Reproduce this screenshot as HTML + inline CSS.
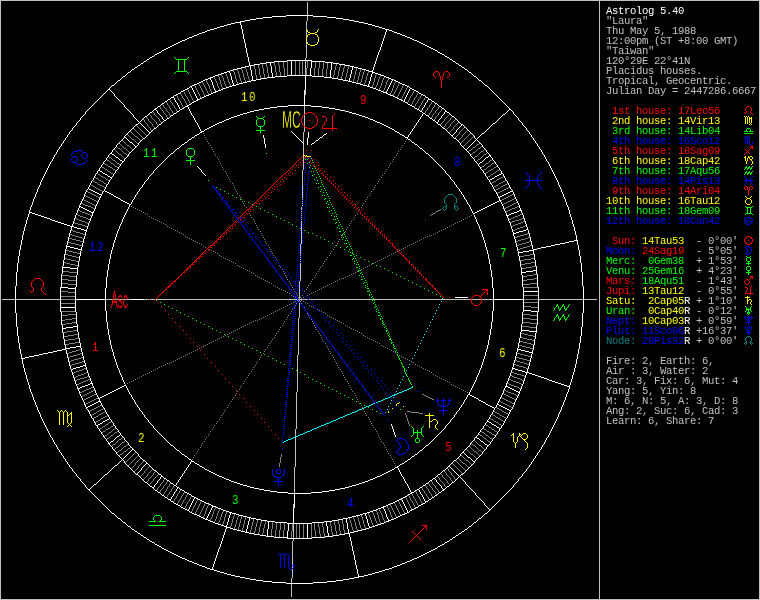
<!DOCTYPE html>
<html><head><meta charset="utf-8"><title>Astrolog 5.40</title>
<style>
html,body{margin:0;padding:0;background:#000;overflow:hidden}
#c{position:relative;width:760px;height:600px;background:#000;overflow:hidden}
#sb{position:absolute;left:606px;top:6.0px;margin:0;font:10.6px/10px "Liberation Mono",monospace;white-space:pre;color:#c0c0c0;letter-spacing:-0.36px;will-change:transform;-webkit-text-stroke:0px}
.hn{will-change:transform;position:absolute;height:20px;white-space:pre;transform-origin:0 0;transform:scaleX(0.8);font:13.5px/20px "Liberation Mono",monospace;letter-spacing:1.9px}
.ob{position:absolute;font-family:"Liberation Sans",sans-serif;white-space:pre;transform-origin:0 0;line-height:1}
</style></head><body><div id="c">
<svg width="760" height="600" viewBox="0 0 760 600" shape-rendering="crispEdges" style="position:absolute;left:0;top:0"><path fill="#008080" d="M448 194h5v1h-5zM444 206h3v1h-3zM454 206h3v1h-3zM747 336h3v1h-3zM745 342h2v1h-2zM750 342h2v1h-2zM425 219v1h1v-1zM442 208v1h1v-1zM443 207v1h1v-1zM443 209v1h1v-1zM444 198v5h1v-5zM444 210v1h1v-1zM445 197v1h1v-1zM445 203v1h1v-1zM445 209v1h1v-1zM446 196v1h1v-1zM446 204v2h1v-2zM446 207v2h1v-2zM447 195v1h1v-1zM453 195v1h1v-1zM454 196v1h1v-1zM454 204v2h1v-2zM454 207v2h1v-2zM455 197v1h1v-1zM455 203v1h1v-1zM455 209v1h1v-1zM456 198v5h1v-5zM456 210v1h1v-1zM457 207v1h1v-1zM457 209v1h1v-1zM458 208v1h1v-1zM744 343v1h1v-1zM745 338v3h1v-3zM745 344v1h1v-1zM746 337v1h1v-1zM746 341v1h1v-1zM746 343v1h1v-1zM750 337v1h1v-1zM750 341v1h1v-1zM750 343v1h1v-1zM751 338v3h1v-3zM751 344v1h1v-1zM752 343v1h1v-1z"/><path fill="#c0c0c0" d="M0 0h760v1h-760zM2 299h13v1h-13zM16 299h44v1h-44zM106 299h25v1h-25zM144 299h5v1h-5zM150 299h5v1h-5zM156 299h141v1h-141zM300 299h8v1h-8zM309 299h62v1h-62zM372 299h99v1h-99zM472 299h9v1h-9zM482 299h11v1h-11zM539 299h44v1h-44zM584 299h13v1h-13zM0 599h760v1h-760zM0 1v598h1v-598zM291 578v5h1v-5zM291 584v13h1v-13zM292 541v24h1v-24zM292 566v2h1v-2zM292 569v9h1v-9zM293 504v4h1v-4zM293 524v14h1v-14zM293 539v2h1v-2zM294 467v26h1v-26zM295 429v7h1v-7zM295 437v30h1v-30zM296 392v37h1v-37zM297 355v37h1v-37zM298 299v1h1v-1zM298 318v37h1v-37zM299 281v18h1v-18zM299 300v1h1v-1zM299 303v15h1v-15zM300 244v10h1v-10zM300 255v1h1v-1zM300 257v1h1v-1zM300 259v1h1v-1zM300 261v1h1v-1zM300 263v18h1v-18zM301 207v3h1v-3zM301 211v1h1v-1zM301 213v1h1v-1zM301 215v1h1v-1zM301 217v1h1v-1zM301 219v1h1v-1zM301 221v23h1v-23zM302 170v28h1v-28zM302 199v1h1v-1zM302 201v1h1v-1zM302 203v1h1v-1zM302 205v1h1v-1zM303 132v11h1v-11zM303 144v5h1v-5zM303 150v5h1v-5zM303 156v14h1v-14zM304 106v8h1v-8zM304 115v11h1v-11zM304 127v5h1v-5zM305 58v2h1v-2zM305 61v14h1v-14zM305 90v5h1v-5zM306 21v8h1v-8zM306 30v7h1v-7zM306 42v16h1v-16zM307 2v13h1v-13zM307 16v5h1v-5zM599 1v598h1v-598zM759 1v598h1v-598z"/><path fill="#808080" d="M135 136h2v1h-2zM132 139h2v1h-2zM477 144h2v1h-2zM127 145h2v1h-2zM473 147h2v1h-2zM118 148h2v1h-2zM124 148h2v1h-2zM478 148h2v1h-2zM469 150h2v1h-2zM481 151h2v1h-2zM473 152h2v1h-2zM124 153h2v1h-2zM119 154h2v1h-2zM484 154h2v1h-2zM475 156h2v1h-2zM109 157h2v1h-2zM478 159h2v1h-2zM107 160h2v1h-2zM113 160h2v1h-2zM490 160h2v1h-2zM111 163h2v1h-2zM117 163h2v1h-2zM486 163h2v1h-2zM492 163h2v1h-2zM105 164h2v1h-2zM108 166h2v1h-2zM115 166h2v1h-2zM482 166h2v1h-2zM488 166h2v1h-2zM102 167h2v1h-2zM110 167h2v1h-2zM494 167h2v1h-2zM105 169h2v1h-2zM113 169h2v1h-2zM484 169h2v1h-2zM491 169h2v1h-2zM489 170h2v1h-2zM497 170h2v1h-2zM108 171h2v1h-2zM486 172h2v1h-2zM494 172h2v1h-2zM111 173h2v1h-2zM98 174h2v1h-2zM491 174h2v1h-2zM101 176h2v1h-2zM488 176h2v1h-2zM103 177h2v1h-2zM501 177h2v1h-2zM96 178h2v1h-2zM499 178h2v1h-2zM106 179h2v1h-2zM497 179h2v1h-2zM99 180h2v1h-2zM93 181h2v1h-2zM101 181h2v1h-2zM494 181h2v1h-2zM503 181h2v1h-2zM95 182h2v1h-2zM492 182h2v1h-2zM501 182h2v1h-2zM104 183h2v1h-2zM499 183h2v1h-2zM98 184h2v1h-2zM505 184h2v1h-2zM91 185h2v1h-2zM100 185h2v1h-2zM496 185h2v1h-2zM503 185h2v1h-2zM93 186h2v1h-2zM102 186h2v1h-2zM494 186h2v1h-2zM501 186h2v1h-2zM508 187h2v1h-2zM96 188h2v1h-2zM498 188h2v1h-2zM506 188h2v1h-2zM98 189h2v1h-2zM496 189h2v1h-2zM504 189h2v1h-2zM100 190h2v1h-2zM502 190h2v1h-2zM500 191h2v1h-2zM88 192h2v1h-2zM498 192h2v1h-2zM90 193h2v1h-2zM92 194h2v1h-2zM512 194h2v1h-2zM94 195h2v1h-2zM510 195h2v1h-2zM86 196h2v1h-2zM96 196h2v1h-2zM508 196h2v1h-2zM88 197h2v1h-2zM98 197h2v1h-2zM506 197h2v1h-2zM90 198h2v1h-2zM504 198h2v1h-2zM92 199h2v1h-2zM502 199h2v1h-2zM512 199h2v1h-2zM84 200h2v1h-2zM94 200h2v1h-2zM510 200h2v1h-2zM86 201h2v1h-2zM96 201h2v1h-2zM508 201h2v1h-2zM88 202h2v1h-2zM506 202h2v1h-2zM81 203h2v1h-2zM90 203h2v1h-2zM504 203h2v1h-2zM514 203h2v1h-2zM83 204h2v1h-2zM92 204h2v1h-2zM512 204h2v1h-2zM85 205h3v1h-3zM94 205h2v1h-2zM510 205h2v1h-2zM88 206h3v1h-3zM508 206h2v1h-2zM517 206h2v1h-2zM91 207h2v1h-2zM506 207h2v1h-2zM515 207h2v1h-2zM93 208h2v1h-2zM504 208h2v1h-2zM512 208h3v1h-3zM510 209h2v1h-2zM78 210h2v1h-2zM438 210h2v1h-2zM508 210h2v1h-2zM80 211h2v1h-2zM436 211h2v1h-2zM506 211h2v1h-2zM82 212h3v1h-3zM85 213h3v1h-3zM433 213h2v1h-2zM88 214h2v1h-2zM431 214h2v1h-2zM520 214h2v1h-2zM78 215h2v1h-2zM90 215h2v1h-2zM518 215h2v1h-2zM80 216h3v1h-3zM515 216h3v1h-3zM83 217h3v1h-3zM513 217h2v1h-2zM75 218h2v1h-2zM86 218h2v1h-2zM511 218h2v1h-2zM522 218h2v1h-2zM77 219h2v1h-2zM88 219h2v1h-2zM509 219h2v1h-2zM519 219h3v1h-3zM79 220h3v1h-3zM515 220h4v1h-4zM82 221h3v1h-3zM512 221h3v1h-3zM523 221h2v1h-2zM85 222h2v1h-2zM510 222h2v1h-2zM521 222h2v1h-2zM75 223h3v1h-3zM518 223h3v1h-3zM78 224h4v1h-4zM515 224h3v1h-3zM82 225h3v1h-3zM513 225h2v1h-2zM85 226h2v1h-2zM523 226h2v1h-2zM520 227h3v1h-3zM517 228h3v1h-3zM515 229h2v1h-2zM71 230h2v1h-2zM513 230h2v1h-2zM73 231h3v1h-3zM76 232h4v1h-4zM80 233h3v1h-3zM527 233h2v1h-2zM70 234h2v1h-2zM83 234h2v1h-2zM524 234h3v1h-3zM72 235h3v1h-3zM520 235h4v1h-4zM75 236h4v1h-4zM517 236h3v1h-3zM79 237h3v1h-3zM515 237h2v1h-2zM528 237h2v1h-2zM69 238h3v1h-3zM82 238h2v1h-2zM525 238h3v1h-3zM72 239h4v1h-4zM521 239h4v1h-4zM76 240h4v1h-4zM518 240h3v1h-3zM80 241h3v1h-3zM516 241h2v1h-2zM529 241h2v1h-2zM68 242h3v1h-3zM526 242h3v1h-3zM71 243h4v1h-4zM522 243h4v1h-4zM75 244h4v1h-4zM519 244h3v1h-3zM79 245h3v1h-3zM517 245h2v1h-2zM530 245h2v1h-2zM527 246h3v1h-3zM523 247h4v1h-4zM520 248h3v1h-3zM518 249h2v1h-2zM66 250h3v1h-3zM69 251h4v1h-4zM73 252h4v1h-4zM77 253h3v1h-3zM65 254h3v1h-3zM530 254h4v1h-4zM68 255h4v1h-4zM524 255h6v1h-6zM72 256h4v1h-4zM520 256h4v1h-4zM76 257h3v1h-3zM65 258h2v1h-2zM531 258h3v1h-3zM67 259h4v1h-4zM524 259h7v1h-7zM71 260h5v1h-5zM520 260h4v1h-4zM76 261h2v1h-2zM64 262h2v1h-2zM531 262h4v1h-4zM66 263h4v1h-4zM525 263h6v1h-6zM70 264h5v1h-5zM521 264h4v1h-4zM75 265h3v1h-3zM532 266h4v1h-4zM526 267h6v1h-6zM522 268h4v1h-4zM63 271h6v1h-6zM69 272h8v1h-8zM533 274h4v1h-4zM62 275h7v1h-7zM527 275h6v1h-6zM69 276h7v1h-7zM523 276h4v1h-4zM534 278h3v1h-3zM62 279h6v1h-6zM527 279h7v1h-7zM68 280h8v1h-8zM523 280h4v1h-4zM62 283h6v1h-6zM530 283h7v1h-7zM68 284h8v1h-8zM523 284h7v1h-7zM524 287h14v1h-14zM61 291h7v1h-7zM68 292h7v1h-7zM524 295h14v1h-14zM61 296h14v1h-14zM61 299h14v1h-14zM524 299h14v1h-14zM524 302h14v1h-14zM61 303h14v1h-14zM524 306h7v1h-7zM531 307h7v1h-7zM61 311h14v1h-14zM68 314h8v1h-8zM523 314h7v1h-7zM62 315h6v1h-6zM530 315h7v1h-7zM72 318h4v1h-4zM523 318h7v1h-7zM65 319h7v1h-7zM530 319h7v1h-7zM62 320h3v1h-3zM72 322h4v1h-4zM523 322h7v1h-7zM66 323h6v1h-6zM530 323h7v1h-7zM62 324h4v1h-4zM522 326h7v1h-7zM529 327h7v1h-7zM73 330h4v1h-4zM67 331h6v1h-6zM63 332h4v1h-4zM521 333h3v1h-3zM74 334h4v1h-4zM524 334h4v1h-4zM68 335h6v1h-6zM528 335h5v1h-5zM64 336h4v1h-4zM533 336h2v1h-2zM521 337h2v1h-2zM75 338h4v1h-4zM523 338h4v1h-4zM68 339h7v1h-7zM527 339h5v1h-5zM65 340h3v1h-3zM532 340h2v1h-2zM520 341h3v1h-3zM75 342h4v1h-4zM523 342h4v1h-4zM69 343h6v1h-6zM527 343h4v1h-4zM65 344h4v1h-4zM531 344h3v1h-3zM519 345h3v1h-3zM522 346h4v1h-4zM526 347h4v1h-4zM530 348h3v1h-3zM79 349h2v1h-2zM76 350h3v1h-3zM72 351h4v1h-4zM69 352h3v1h-3zM67 353h2v1h-2zM80 353h2v1h-2zM517 353h3v1h-3zM77 354h3v1h-3zM520 354h4v1h-4zM73 355h4v1h-4zM524 355h4v1h-4zM70 356h3v1h-3zM528 356h3v1h-3zM68 357h2v1h-2zM81 357h2v1h-2zM516 357h3v1h-3zM78 358h3v1h-3zM519 358h4v1h-4zM74 359h4v1h-4zM523 359h4v1h-4zM71 360h3v1h-3zM515 360h2v1h-2zM527 360h3v1h-3zM69 361h2v1h-2zM82 361h2v1h-2zM517 361h3v1h-3zM79 362h3v1h-3zM520 362h4v1h-4zM75 363h4v1h-4zM524 363h3v1h-3zM72 364h3v1h-3zM514 364h2v1h-2zM527 364h2v1h-2zM70 365h2v1h-2zM516 365h3v1h-3zM519 366h4v1h-4zM523 367h3v1h-3zM84 368h2v1h-2zM526 368h2v1h-2zM82 369h2v1h-2zM79 370h3v1h-3zM76 371h3v1h-3zM74 372h2v1h-2zM512 372h2v1h-2zM84 373h2v1h-2zM514 373h3v1h-3zM81 374h3v1h-3zM517 374h4v1h-4zM78 375h3v1h-3zM521 375h3v1h-3zM76 376h2v1h-2zM87 376h2v1h-2zM512 376h2v1h-2zM74 377h2v1h-2zM84 377h3v1h-3zM514 377h3v1h-3zM80 378h4v1h-4zM517 378h3v1h-3zM77 379h3v1h-3zM88 379h2v1h-2zM509 379h2v1h-2zM520 379h2v1h-2zM75 380h2v1h-2zM86 380h2v1h-2zM511 380h2v1h-2zM522 380h2v1h-2zM83 381h3v1h-3zM513 381h3v1h-3zM81 382h2v1h-2zM516 382h3v1h-3zM79 383h2v1h-2zM507 383h2v1h-2zM519 383h2v1h-2zM77 384h2v1h-2zM509 384h2v1h-2zM511 385h3v1h-3zM514 386h3v1h-3zM91 387h2v1h-2zM517 387h2v1h-2zM89 388h2v1h-2zM519 388h2v1h-2zM86 389h3v1h-3zM84 390h2v1h-2zM93 390h2v1h-2zM504 390h2v1h-2zM82 391h2v1h-2zM91 391h2v1h-2zM506 391h2v1h-2zM80 392h2v1h-2zM89 392h2v1h-2zM508 392h3v1h-3zM87 393h2v1h-2zM511 393h3v1h-3zM85 394h2v1h-2zM94 394h2v1h-2zM422 394h2v1h-2zM504 394h2v1h-2zM514 394h2v1h-2zM83 395h2v1h-2zM92 395h2v1h-2zM424 395h2v1h-2zM506 395h2v1h-2zM516 395h2v1h-2zM90 396h2v1h-2zM426 396h2v1h-2zM508 396h2v1h-2zM88 397h2v1h-2zM428 397h2v1h-2zM510 397h2v1h-2zM86 398h2v1h-2zM96 398h2v1h-2zM430 398h2v1h-2zM502 398h2v1h-2zM512 398h2v1h-2zM84 399h2v1h-2zM94 399h2v1h-2zM432 399h2v1h-2zM504 399h2v1h-2zM514 399h2v1h-2zM92 400h2v1h-2zM506 400h2v1h-2zM90 401h2v1h-2zM499 401h2v1h-2zM508 401h2v1h-2zM88 402h2v1h-2zM501 402h2v1h-2zM510 402h2v1h-2zM86 403h2v1h-2zM503 403h2v1h-2zM512 403h2v1h-2zM505 404h2v1h-2zM100 405h2v1h-2zM507 405h2v1h-2zM98 406h2v1h-2zM509 406h2v1h-2zM96 407h2v1h-2zM94 408h2v1h-2zM497 408h2v1h-2zM92 409h2v1h-2zM101 409h2v1h-2zM499 409h2v1h-2zM90 410h2v1h-2zM99 410h2v1h-2zM97 411h2v1h-2zM407 411h4v1h-4zM502 411h2v1h-2zM103 412h2v1h-2zM411 412h8v1h-8zM495 412h2v1h-2zM504 412h2v1h-2zM94 413h2v1h-2zM101 413h2v1h-2zM419 413h4v1h-4zM497 413h2v1h-2zM506 413h2v1h-2zM92 414h2v1h-2zM99 414h2v1h-2zM493 415h2v1h-2zM500 415h2v1h-2zM96 416h2v1h-2zM105 416h2v1h-2zM502 416h2v1h-2zM94 417h2v1h-2zM103 417h2v1h-2zM496 417h2v1h-2zM504 417h2v1h-2zM101 418h2v1h-2zM498 418h2v1h-2zM491 419h2v1h-2zM98 420h2v1h-2zM501 420h2v1h-2zM96 421h2v1h-2zM494 421h2v1h-2zM109 422h2v1h-2zM496 422h2v1h-2zM106 424h2v1h-2zM499 424h2v1h-2zM486 425h2v1h-2zM103 426h2v1h-2zM111 426h2v1h-2zM489 427h2v1h-2zM100 428h2v1h-2zM108 428h2v1h-2zM106 429h2v1h-2zM113 429h2v1h-2zM484 429h2v1h-2zM492 429h2v1h-2zM103 431h2v1h-2zM487 431h2v1h-2zM495 431h2v1h-2zM109 432h2v1h-2zM115 432h2v1h-2zM482 432h2v1h-2zM489 432h2v1h-2zM492 434h2v1h-2zM105 435h2v1h-2zM111 435h2v1h-2zM480 435h2v1h-2zM486 435h2v1h-2zM107 438h2v1h-2zM484 438h2v1h-2zM490 438h2v1h-2zM119 439h2v1h-2zM488 441h2v1h-2zM122 442h2v1h-2zM113 444h2v1h-2zM473 445h2v1h-2zM479 445h2v1h-2zM124 446h2v1h-2zM116 447h2v1h-2zM128 448h2v1h-2zM119 450h2v1h-2zM479 450h2v1h-2zM124 451h2v1h-2zM474 451h2v1h-2zM120 454h2v1h-2zM471 454h2v1h-2zM466 460h2v1h-2zM463 463h2v1h-2zM73 373v1h1v-1zM74 222v1h1v-1zM77 214v1h1v-1zM82 396v1h1v-1zM83 199v1h1v-1zM85 195v1h1v-1zM85 404v1h1v-1zM86 372v1h1v-1zM87 191v1h1v-1zM87 223v1h1v-1zM89 411v1h1v-1zM91 415v1h1v-1zM93 418v1h1v-1zM95 177v1h1v-1zM95 187v1h1v-1zM95 422v1h1v-1zM96 412v1h1v-1zM97 173v1h1v-1zM97 183v1h1v-1zM98 179v1h1v-1zM98 415v1h1v-1zM100 175v1h1v-1zM100 419v1h1v-1zM102 191v1h1v-1zM102 427v1h1v-1zM102 432v1h1v-1zM103 182v1h1v-1zM103 408v1h1v-1zM104 163v1h1v-1zM104 168v1h1v-1zM104 187v1h1v-1zM104 436v1h1v-1zM105 178v1h1v-1zM105 425v1h1v-1zM105 430v1h1v-1zM106 184v1h1v-1zM107 165v1h1v-1zM107 170v1h1v-1zM107 415v1h1v-1zM107 434v1h1v-1zM108 180v1h1v-1zM108 423v1h1v-1zM108 433v1h1v-1zM109 161v1h1v-1zM109 437v1h1v-1zM110 162v1h1v-1zM110 172v1h1v-1zM110 427v1h1v-1zM110 436v1h1v-1zM111 158v1h1v-1zM111 431v1h1v-1zM112 159v1h1v-1zM112 168v1h1v-1zM112 430v1h1v-1zM112 445v1h1v-1zM113 164v1h1v-1zM113 425v1h1v-1zM113 434v1h1v-1zM114 149v1h1v-1zM114 165v1h1v-1zM114 433v1h1v-1zM114 449v1h1v-1zM115 150v1h1v-1zM115 161v1h1v-1zM115 170v1h1v-1zM115 428v1h1v-1zM115 443v1h1v-1zM115 448v1h1v-1zM116 151v1h1v-1zM116 162v1h1v-1zM116 442v1h1v-1zM117 147v1h1v-1zM117 152v1h1v-1zM117 167v1h1v-1zM117 431v1h1v-1zM117 441v1h1v-1zM117 452v1h1v-1zM118 153v1h1v-1zM118 440v1h1v-1zM118 446v1h1v-1zM118 451v1h1v-1zM119 143v1h1v-1zM119 164v1h1v-1zM119 445v1h1v-1zM119 455v1h1v-1zM120 144v1h1v-1zM120 149v1h1v-1zM120 444v1h1v-1zM121 145v1h1v-1zM121 150v1h1v-1zM121 155v1h1v-1zM121 438v1h1v-1zM121 443v1h1v-1zM121 449v1h1v-1zM122 140v1h1v-1zM122 146v1h1v-1zM122 151v1h1v-1zM122 156v1h1v-1zM122 437v1h1v-1zM122 448v1h1v-1zM122 453v1h1v-1zM123 141v1h1v-1zM123 147v1h1v-1zM123 152v1h1v-1zM123 157v1h1v-1zM123 447v1h1v-1zM123 452v1h1v-1zM124 142v1h1v-1zM124 158v1h1v-1zM124 441v1h1v-1zM125 143v1h1v-1zM125 384v1h1v-1zM125 462v1h1v-1zM126 144v1h1v-1zM126 149v1h1v-1zM126 154v1h1v-1zM126 445v1h1v-1zM126 450v1h1v-1zM126 461v1h1v-1zM127 134v1h1v-1zM127 150v1h1v-1zM127 155v1h1v-1zM127 383v1h1v-1zM127 444v1h1v-1zM127 449v1h1v-1zM127 460v1h1v-1zM128 135v1h1v-1zM128 151v1h1v-1zM128 459v1h1v-1zM128 465v1h1v-1zM129 136v1h1v-1zM129 146v1h1v-1zM129 152v1h1v-1zM129 382v1h1v-1zM129 458v1h1v-1zM129 464v1h1v-1zM130 131v1h1v-1zM130 137v1h1v-1zM130 147v1h1v-1zM130 447v1h1v-1zM130 457v1h1v-1zM130 463v1h1v-1zM131 132v1h1v-1zM131 138v1h1v-1zM131 148v1h1v-1zM131 206v1h1v-1zM131 381v1h1v-1zM131 456v1h1v-1zM131 462v1h1v-1zM131 468v1h1v-1zM132 133v1h1v-1zM132 149v1h1v-1zM132 455v1h1v-1zM132 461v1h1v-1zM132 467v1h1v-1zM133 128v1h1v-1zM133 134v1h1v-1zM133 207v1h1v-1zM133 380v1h1v-1zM133 454v1h1v-1zM133 460v1h1v-1zM133 466v1h1v-1zM134 129v1h1v-1zM134 135v1h1v-1zM134 140v1h1v-1zM134 453v1h1v-1zM134 459v1h1v-1zM134 465v1h1v-1zM134 471v1h1v-1zM135 130v1h1v-1zM135 141v1h1v-1zM135 208v1h1v-1zM135 379v1h1v-1zM135 452v1h1v-1zM135 458v1h1v-1zM135 463v2h1v-2zM135 470v1h1v-1zM136 125v1h1v-1zM136 131v1h1v-1zM136 142v1h1v-1zM136 457v1h1v-1zM136 462v1h1v-1zM136 469v1h1v-1zM137 126v1h1v-1zM137 132v1h1v-1zM137 137v1h1v-1zM137 143v1h1v-1zM137 209v1h1v-1zM137 378v1h1v-1zM137 456v1h1v-1zM137 461v1h1v-1zM137 468v1h1v-1zM138 127v1h1v-1zM138 133v1h1v-1zM138 138v1h1v-1zM138 460v1h1v-1zM138 466v2h1v-2zM139 128v1h1v-1zM139 134v1h1v-1zM139 139v1h1v-1zM139 210v1h1v-1zM139 377v1h1v-1zM139 459v1h1v-1zM139 465v1h1v-1zM140 129v1h1v-1zM140 135v1h1v-1zM140 140v1h1v-1zM140 458v1h1v-1zM140 464v1h1v-1zM140 476v1h1v-1zM141 130v1h1v-1zM141 136v1h1v-1zM141 211v1h1v-1zM141 376v1h1v-1zM141 463v1h1v-1zM141 475v1h1v-1zM142 131v1h1v-1zM142 137v1h1v-1zM142 462v1h1v-1zM142 474v1h1v-1zM143 119v1h1v-1zM143 132v1h1v-1zM143 212v1h1v-1zM143 375v1h1v-1zM143 461v1h1v-1zM143 473v1h1v-1zM143 479v1h1v-1zM144 120v2h1v-2zM144 133v1h1v-1zM144 471v2h1v-2zM144 478v1h1v-1zM145 122v1h1v-1zM145 134v1h1v-1zM145 213v1h1v-1zM145 374v1h1v-1zM145 470v1h1v-1zM145 477v1h1v-1zM146 117v1h1v-1zM146 123v1h1v-1zM146 135v1h1v-1zM146 469v1h1v-1zM146 476v1h1v-1zM147 118v1h1v-1zM147 124v2h1v-2zM147 214v1h1v-1zM147 373v1h1v-1zM147 468v1h1v-1zM147 474v2h1v-2zM147 481v1h1v-1zM148 119v2h1v-2zM148 126v1h1v-1zM148 467v1h1v-1zM148 473v1h1v-1zM148 479v2h1v-2zM149 114v1h1v-1zM149 121v1h1v-1zM149 127v1h1v-1zM149 216v1h1v-1zM149 372v1h1v-1zM149 466v1h1v-1zM149 472v1h1v-1zM149 478v1h1v-1zM149 484v1h1v-1zM150 115v1h1v-1zM150 122v1h1v-1zM150 128v2h1v-2zM150 471v1h1v-1zM150 477v1h1v-1zM150 483v1h1v-1zM151 116v2h1v-2zM151 123v1h1v-1zM151 130v1h1v-1zM151 217v1h1v-1zM151 371v1h1v-1zM151 470v1h1v-1zM151 476v1h1v-1zM151 482v1h1v-1zM152 118v1h1v-1zM152 124v2h1v-2zM152 469v1h1v-1zM152 475v1h1v-1zM152 481v1h1v-1zM153 112v1h1v-1zM153 119v1h1v-1zM153 126v1h1v-1zM153 218v1h1v-1zM153 370v1h1v-1zM153 473v2h1v-2zM153 479v2h1v-2zM154 113v2h1v-2zM154 120v1h1v-1zM154 127v1h1v-1zM154 472v1h1v-1zM154 478v1h1v-1zM155 115v1h1v-1zM155 121v1h1v-1zM155 219v1h1v-1zM155 369v1h1v-1zM155 471v1h1v-1zM155 477v1h1v-1zM156 116v1h1v-1zM156 122v2h1v-2zM156 476v1h1v-1zM157 117v1h1v-1zM157 124v1h1v-1zM157 220v1h1v-1zM157 368v1h1v-1zM157 475v1h1v-1zM157 488v2h1v-2zM158 118v1h1v-1zM158 474v1h1v-1zM158 487v1h1v-1zM159 119v2h1v-2zM159 221v1h1v-1zM159 367v1h1v-1zM159 486v1h1v-1zM160 107v2h1v-2zM160 121v1h1v-1zM160 484v2h1v-2zM160 490v2h1v-2zM161 109v1h1v-1zM161 122v1h1v-1zM161 222v1h1v-1zM161 366v1h1v-1zM161 483v1h1v-1zM161 489v1h1v-1zM162 104v1h1v-1zM162 110v1h1v-1zM162 482v1h1v-1zM162 488v1h1v-1zM163 105v2h1v-2zM163 111v2h1v-2zM163 223v1h1v-1zM163 365v1h1v-1zM163 480v2h1v-2zM163 486v2h1v-2zM163 494v1h1v-1zM164 107v1h1v-1zM164 113v1h1v-1zM164 479v1h1v-1zM164 485v1h1v-1zM164 492v2h1v-2zM165 108v1h1v-1zM165 114v1h1v-1zM165 224v1h1v-1zM165 364v1h1v-1zM165 484v1h1v-1zM165 491v1h1v-1zM166 102v1h1v-1zM166 109v2h1v-2zM166 115v2h1v-2zM166 482v2h1v-2zM166 489v2h1v-2zM167 103v2h1v-2zM167 111v1h1v-1zM167 117v1h1v-1zM167 226v1h1v-1zM167 363v1h1v-1zM167 481v1h1v-1zM167 487v2h1v-2zM167 495v2h1v-2zM168 105v1h1v-1zM168 112v1h1v-1zM168 486v1h1v-1zM168 494v1h1v-1zM169 106v2h1v-2zM169 113v2h1v-2zM169 227v1h1v-1zM169 363v1h1v-1zM169 484v2h1v-2zM169 492v2h1v-2zM170 100v2h1v-2zM170 108v2h1v-2zM170 115v1h1v-1zM170 483v1h1v-1zM170 491v1h1v-1zM171 102v1h1v-1zM171 110v1h1v-1zM171 228v1h1v-1zM171 362v1h1v-1zM171 489v2h1v-2zM172 103v2h1v-2zM172 111v2h1v-2zM172 488v1h1v-1zM173 105v1h1v-1zM173 113v1h1v-1zM173 229v1h1v-1zM173 361v1h1v-1zM173 486v2h1v-2zM173 501v1h1v-1zM174 106v2h1v-2zM174 499v2h1v-2zM175 108v1h1v-1zM175 230v1h1v-1zM175 360v1h1v-1zM175 498v1h1v-1zM176 95v1h1v-1zM176 109v2h1v-2zM176 496v2h1v-2zM177 96v2h1v-2zM177 231v1h1v-1zM177 359v1h1v-1zM177 494v2h1v-2zM177 503v1h1v-1zM178 98v2h1v-2zM178 493v1h1v-1zM178 501v2h1v-2zM179 100v1h1v-1zM179 232v1h1v-1zM179 358v1h1v-1zM179 491v2h1v-2zM179 500v1h1v-1zM180 93v1h1v-1zM180 101v2h1v-2zM180 490v1h1v-1zM180 498v2h1v-2zM181 94v2h1v-2zM181 103v2h1v-2zM181 233v1h1v-1zM181 357v1h1v-1zM181 496v2h1v-2zM181 504v2h1v-2zM182 96v2h1v-2zM182 105v2h1v-2zM182 495v1h1v-1zM182 502v2h1v-2zM183 91v1h1v-1zM183 98v1h1v-1zM183 107v1h1v-1zM183 234v1h1v-1zM183 356v1h1v-1zM183 493v2h1v-2zM183 500v2h1v-2zM184 92v2h1v-2zM184 99v2h1v-2zM184 492v1h1v-1zM184 499v1h1v-1zM185 94v2h1v-2zM185 101v2h1v-2zM185 236v1h1v-1zM185 355v1h1v-1zM185 497v2h1v-2zM185 506v2h1v-2zM186 96v1h1v-1zM186 103v2h1v-2zM186 495v2h1v-2zM186 504v2h1v-2zM187 89v1h1v-1zM187 97v2h1v-2zM187 237v1h1v-1zM187 354v1h1v-1zM187 494v1h1v-1zM187 502v2h1v-2zM188 90v2h1v-2zM188 99v2h1v-2zM188 501v1h1v-1zM189 92v2h1v-2zM189 101v2h1v-2zM189 238v1h1v-1zM189 353v1h1v-1zM189 499v2h1v-2zM190 94v2h1v-2zM190 103v1h1v-1zM190 497v2h1v-2zM191 96v2h1v-2zM191 239v1h1v-1zM191 352v1h1v-1zM191 496v1h1v-1zM191 511v1h1v-1zM192 98v2h1v-2zM192 459v1h1v-1zM192 509v2h1v-2zM193 100v2h1v-2zM193 240v1h1v-1zM193 351v1h1v-1zM193 457v1h1v-1zM193 507v2h1v-2zM194 85v1h1v-1zM194 455v1h1v-1zM194 505v2h1v-2zM195 86v2h1v-2zM195 241v1h1v-1zM195 350v1h1v-1zM195 503v2h1v-2zM195 512v2h1v-2zM196 88v2h1v-2zM196 453v1h1v-1zM196 501v2h1v-2zM196 510v2h1v-2zM197 90v2h1v-2zM197 242v1h1v-1zM197 349v1h1v-1zM197 451v1h1v-1zM197 499v2h1v-2zM197 508v2h1v-2zM198 92v2h1v-2zM198 449v1h1v-1zM198 506v2h1v-2zM199 84v2h1v-2zM199 94v2h1v-2zM199 243v1h1v-1zM199 348v1h1v-1zM199 504v2h1v-2zM199 514v2h1v-2zM200 86v2h1v-2zM200 96v2h1v-2zM200 447v1h1v-1zM200 502v2h1v-2zM200 512v2h1v-2zM201 88v2h1v-2zM201 244v1h1v-1zM201 347v1h1v-1zM201 445v1h1v-1zM201 501v1h1v-1zM201 510v2h1v-2zM202 82v1h1v-1zM202 90v2h1v-2zM202 443v1h1v-1zM202 508v2h1v-2zM203 83v2h1v-2zM203 92v2h1v-2zM203 133v1h1v-1zM203 246v1h1v-1zM203 346v1h1v-1zM203 506v2h1v-2zM203 516v2h1v-2zM204 85v2h1v-2zM204 94v2h1v-2zM204 135v1h1v-1zM204 441v1h1v-1zM204 504v2h1v-2zM204 514v2h1v-2zM205 87v2h1v-2zM205 137v1h1v-1zM205 247v1h1v-1zM205 345v1h1v-1zM205 439v1h1v-1zM205 503v1h1v-1zM205 511v3h1v-3zM206 80v2h1v-2zM206 89v2h1v-2zM206 139v1h1v-1zM206 437v1h1v-1zM206 508v3h1v-3zM207 82v2h1v-2zM207 91v2h1v-2zM207 141v1h1v-1zM207 344v1h1v-1zM207 506v2h1v-2zM208 84v2h1v-2zM208 93v2h1v-2zM208 143v1h1v-1zM208 435v1h1v-1zM208 504v2h1v-2zM209 86v3h1v-3zM209 249v1h1v-1zM209 343v1h1v-1zM209 433v1h1v-1zM210 89v2h1v-2zM210 145v1h1v-1zM210 431v1h1v-1zM210 519v2h1v-2zM211 91v2h1v-2zM211 147v1h1v-1zM211 250v1h1v-1zM211 342v1h1v-1zM211 517v2h1v-2zM212 149v1h1v-1zM212 429v1h1v-1zM212 514v3h1v-3zM213 151v1h1v-1zM213 251v1h1v-1zM213 341v1h1v-1zM213 427v1h1v-1zM213 511v3h1v-3zM214 77v2h1v-2zM214 153v1h1v-1zM214 425v1h1v-1zM214 509v2h1v-2zM214 521v1h1v-1zM215 79v2h1v-2zM215 155v1h1v-1zM215 252v1h1v-1zM215 340v1h1v-1zM215 507v2h1v-2zM215 519v2h1v-2zM216 81v2h1v-2zM216 423v1h1v-1zM216 516v3h1v-3zM217 83v3h1v-3zM217 157v1h1v-1zM217 253v1h1v-1zM217 339v1h1v-1zM217 421v1h1v-1zM217 513v3h1v-3zM218 75v2h1v-2zM218 86v2h1v-2zM218 159v1h1v-1zM218 511v2h1v-2zM218 522v2h1v-2zM219 77v3h1v-3zM219 88v2h1v-2zM219 161v1h1v-1zM219 255v1h1v-1zM219 338v1h1v-1zM219 419v1h1v-1zM219 509v2h1v-2zM219 520v2h1v-2zM220 80v4h1v-4zM220 163v1h1v-1zM220 417v1h1v-1zM220 517v3h1v-3zM221 74v2h1v-2zM221 84v3h1v-3zM221 165v1h1v-1zM221 256v1h1v-1zM221 337v1h1v-1zM221 415v1h1v-1zM221 514v3h1v-3zM222 76v2h1v-2zM222 87v2h1v-2zM222 167v1h1v-1zM222 512v2h1v-2zM222 524v1h1v-1zM223 78v3h1v-3zM223 169v1h1v-1zM223 257v1h1v-1zM223 336v1h1v-1zM223 413v1h1v-1zM223 511v1h1v-1zM223 521v3h1v-3zM224 81v3h1v-3zM224 411v1h1v-1zM224 517v4h1v-4zM225 73v1h1v-1zM225 84v2h1v-2zM225 171v1h1v-1zM225 258v1h1v-1zM225 335v1h1v-1zM225 409v1h1v-1zM225 514v3h1v-3zM226 74v2h1v-2zM226 86v1h1v-1zM226 173v1h1v-1zM226 512v2h1v-2zM227 76v3h1v-3zM227 175v1h1v-1zM227 259v1h1v-1zM227 334v1h1v-1zM227 407v1h1v-1zM228 79v3h1v-3zM228 177v1h1v-1zM228 405v1h1v-1zM229 82v2h1v-2zM229 179v1h1v-1zM229 260v1h1v-1zM229 333v1h1v-1zM229 403v1h1v-1zM230 84v2h1v-2zM230 181v1h1v-1zM230 526v2h1v-2zM231 261v1h1v-1zM231 332v1h1v-1zM231 401v1h1v-1zM231 523v3h1v-3zM232 183v1h1v-1zM232 399v1h1v-1zM232 519v4h1v-4zM233 70v2h1v-2zM233 185v1h1v-1zM233 262v1h1v-1zM233 331v1h1v-1zM233 397v1h1v-1zM233 516v3h1v-3zM234 72v3h1v-3zM234 187v1h1v-1zM234 514v2h1v-2zM234 527v2h1v-2zM235 75v4h1v-4zM235 189v1h1v-1zM235 263v1h1v-1zM235 330v1h1v-1zM235 395v1h1v-1zM235 524v3h1v-3zM236 79v3h1v-3zM236 191v1h1v-1zM236 393v1h1v-1zM236 520v4h1v-4zM237 69v2h1v-2zM237 82v2h1v-2zM237 193v1h1v-1zM237 265v1h1v-1zM237 329v1h1v-1zM237 391v1h1v-1zM237 517v3h1v-3zM238 71v3h1v-3zM238 515v2h1v-2zM238 527v3h1v-3zM239 74v4h1v-4zM239 195v1h1v-1zM239 266v1h1v-1zM239 328v1h1v-1zM239 389v1h1v-1zM239 523v4h1v-4zM240 78v3h1v-3zM240 197v1h1v-1zM240 387v1h1v-1zM240 519v4h1v-4zM241 68v2h1v-2zM241 81v2h1v-2zM241 199v1h1v-1zM241 267v1h1v-1zM241 327v1h1v-1zM241 385v1h1v-1zM241 516v3h1v-3zM242 70v3h1v-3zM242 201v1h1v-1zM242 528v3h1v-3zM243 73v4h1v-4zM243 203v1h1v-1zM243 268v1h1v-1zM243 326v1h1v-1zM243 383v1h1v-1zM243 524v4h1v-4zM244 77v3h1v-3zM244 205v1h1v-1zM244 381v1h1v-1zM244 520v4h1v-4zM245 67v2h1v-2zM245 80v2h1v-2zM245 269v1h1v-1zM245 325v1h1v-1zM245 379v1h1v-1zM245 517v3h1v-3zM246 69v3h1v-3zM246 207v1h1v-1zM247 72v4h1v-4zM247 270v1h1v-1zM247 324v1h1v-1zM247 377v1h1v-1zM248 76v3h1v-3zM248 375v1h1v-1zM249 79v2h1v-2zM249 213v1h1v-1zM249 271v1h1v-1zM249 323v1h1v-1zM249 373v1h1v-1zM250 215v1h1v-1zM250 530v3h1v-3zM251 217v1h1v-1zM251 272v1h1v-1zM251 322v1h1v-1zM251 371v1h1v-1zM251 526v4h1v-4zM252 369v1h1v-1zM252 522v4h1v-4zM253 219v1h1v-1zM253 273v1h1v-1zM253 321v1h1v-1zM253 367v1h1v-1zM253 519v3h1v-3zM254 65v4h1v-4zM254 221v1h1v-1zM254 531v3h1v-3zM255 69v6h1v-6zM255 223v1h1v-1zM255 275v1h1v-1zM255 320v1h1v-1zM255 365v1h1v-1zM255 527v4h1v-4zM256 75v4h1v-4zM256 225v1h1v-1zM256 363v1h1v-1zM256 523v4h1v-4zM257 227v1h1v-1zM257 276v1h1v-1zM257 320v1h1v-1zM257 361v1h1v-1zM257 520v3h1v-3zM258 65v3h1v-3zM258 229v1h1v-1zM258 532v2h1v-2zM259 68v7h1v-7zM259 277v1h1v-1zM259 319v1h1v-1zM259 359v1h1v-1zM259 527v5h1v-5zM260 75v4h1v-4zM260 231v1h1v-1zM260 357v1h1v-1zM260 523v4h1v-4zM261 233v1h1v-1zM261 278v1h1v-1zM261 318v1h1v-1zM261 355v1h1v-1zM261 521v2h1v-2zM262 64v4h1v-4zM262 235v1h1v-1zM262 533v2h1v-2zM263 68v6h1v-6zM263 237v1h1v-1zM263 279v1h1v-1zM263 317v1h1v-1zM263 353v1h1v-1zM263 528v5h1v-5zM264 74v4h1v-4zM264 239v1h1v-1zM264 351v1h1v-1zM264 524v4h1v-4zM265 241v1h1v-1zM265 280v1h1v-1zM265 316v1h1v-1zM265 349v1h1v-1zM265 521v3h1v-3zM266 63v4h1v-4zM266 243v1h1v-1zM267 67v6h1v-6zM267 281v1h1v-1zM267 315v1h1v-1zM267 347v1h1v-1zM268 73v4h1v-4zM268 245v1h1v-1zM268 345v1h1v-1zM269 247v1h1v-1zM269 282v1h1v-1zM269 314v1h1v-1zM269 343v1h1v-1zM270 249v1h1v-1zM271 251v1h1v-1zM271 283v1h1v-1zM271 313v1h1v-1zM271 341v1h1v-1zM271 529v7h1v-7zM272 253v1h1v-1zM272 339v1h1v-1zM272 522v7h1v-7zM273 255v1h1v-1zM273 285v1h1v-1zM273 312v1h1v-1zM274 62v4h1v-4zM274 337v1h1v-1zM275 66v6h1v-6zM275 257v1h1v-1zM275 286v1h1v-1zM275 311v1h1v-1zM275 335v1h1v-1zM275 530v7h1v-7zM276 72v4h1v-4zM276 259v1h1v-1zM276 333v1h1v-1zM276 523v7h1v-7zM277 287v1h1v-1zM277 310v1h1v-1zM278 62v3h1v-3zM278 331v1h1v-1zM279 65v7h1v-7zM279 265v1h1v-1zM279 288v1h1v-1zM279 309v1h1v-1zM279 329v1h1v-1zM279 463v4h1v-4zM279 530v7h1v-7zM280 72v4h1v-4zM280 267v1h1v-1zM280 327v1h1v-1zM280 457v6h1v-6zM280 523v7h1v-7zM281 289v1h1v-1zM281 308v1h1v-1zM281 454v3h1v-3zM282 269v1h1v-1zM282 325v1h1v-1zM283 62v6h1v-6zM283 271v1h1v-1zM283 290v1h1v-1zM283 307v1h1v-1zM283 323v1h1v-1zM283 530v7h1v-7zM284 68v8h1v-8zM284 273v1h1v-1zM284 321v1h1v-1zM284 523v7h1v-7zM285 275v1h1v-1zM285 291v1h1v-1zM285 306v1h1v-1zM286 277v1h1v-1zM286 319v1h1v-1zM287 61v14h1v-14zM287 279v1h1v-1zM287 292v1h1v-1zM287 305v1h1v-1zM287 317v1h1v-1zM288 315v1h1v-1zM289 281v1h1v-1zM289 293v1h1v-1zM289 304v1h1v-1zM290 283v1h1v-1zM290 313v1h1v-1zM291 285v1h1v-1zM291 295v1h1v-1zM291 303v1h1v-1zM291 311v1h1v-1zM291 531v7h1v-7zM292 287v1h1v-1zM292 309v1h1v-1zM292 524v7h1v-7zM293 289v1h1v-1zM293 296v1h1v-1zM293 302v1h1v-1zM294 291v1h1v-1zM294 307v1h1v-1zM295 61v14h1v-14zM295 297v1h1v-1zM295 301v1h1v-1zM295 305v1h1v-1zM296 293v1h1v-1zM296 303v1h1v-1zM296 524v14h1v-14zM297 295v1h1v-1zM297 300v1h1v-1zM298 297v1h1v-1zM298 301v1h1v-1zM299 61v14h1v-14zM299 299v1h1v-1zM299 524v14h1v-14zM300 297v1h1v-1zM300 301v1h1v-1zM301 298v1h1v-1zM301 300v1h1v-1zM301 303v1h1v-1zM302 61v14h1v-14zM302 295v1h1v-1zM303 297v1h1v-1zM303 301v1h1v-1zM303 524v14h1v-14zM304 291v1h1v-1zM304 307v1h1v-1zM305 302v1h1v-1zM306 68v7h1v-7zM306 289v1h1v-1zM307 61v7h1v-7zM307 287v1h1v-1zM307 295v1h1v-1zM307 303v1h1v-1zM307 313v1h1v-1zM308 285v1h1v-1zM308 315v1h1v-1zM309 294v1h1v-1zM309 305v1h1v-1zM309 317v1h1v-1zM310 283v1h1v-1zM311 281v1h1v-1zM311 293v1h1v-1zM311 306v1h1v-1zM311 319v1h1v-1zM311 524v14h1v-14zM312 279v1h1v-1zM312 321v1h1v-1zM313 292v1h1v-1zM313 307v1h1v-1zM313 323v1h1v-1zM314 68v8h1v-8zM314 277v1h1v-1zM314 325v1h1v-1zM314 523v7h1v-7zM315 62v6h1v-6zM315 275v1h1v-1zM315 291v1h1v-1zM315 327v1h1v-1zM315 530v7h1v-7zM316 273v1h1v-1zM316 329v1h1v-1zM317 290v1h1v-1zM317 309v1h1v-1zM318 68v8h1v-8zM318 271v1h1v-1zM318 331v1h1v-1zM318 523v4h1v-4zM319 62v6h1v-6zM319 269v1h1v-1zM319 289v1h1v-1zM319 310v1h1v-1zM319 333v1h1v-1zM319 527v7h1v-7zM320 267v1h1v-1zM320 335v1h1v-1zM320 534v3h1v-3zM321 288v1h1v-1zM321 311v1h1v-1zM321 337v1h1v-1zM322 69v7h1v-7zM322 265v1h1v-1zM322 339v1h1v-1zM322 523v4h1v-4zM323 62v7h1v-7zM323 263v1h1v-1zM323 287v1h1v-1zM323 312v1h1v-1zM323 341v1h1v-1zM323 527v6h1v-6zM324 261v1h1v-1zM324 533v4h1v-4zM325 286v1h1v-1zM325 313v1h1v-1zM325 343v1h1v-1zM326 69v8h1v-8zM326 259v1h1v-1zM326 345v1h1v-1zM327 63v6h1v-6zM327 257v1h1v-1zM327 285v1h1v-1zM327 315v1h1v-1zM327 347v1h1v-1zM328 349v1h1v-1zM329 255v1h1v-1zM329 284v1h1v-1zM329 316v1h1v-1zM329 351v1h1v-1zM330 253v1h1v-1zM330 353v1h1v-1zM330 522v4h1v-4zM331 251v1h1v-1zM331 283v1h1v-1zM331 317v1h1v-1zM331 526v6h1v-6zM332 355v1h1v-1zM332 532v4h1v-4zM333 75v3h1v-3zM333 249v1h1v-1zM333 282v1h1v-1zM333 318v1h1v-1zM333 357v1h1v-1zM334 70v5h1v-5zM334 247v1h1v-1zM334 359v1h1v-1zM334 521v4h1v-4zM335 66v4h1v-4zM335 245v1h1v-1zM335 281v1h1v-1zM335 319v1h1v-1zM335 361v1h1v-1zM335 525v6h1v-6zM336 64v2h1v-2zM336 363v1h1v-1zM336 531v4h1v-4zM337 76v2h1v-2zM337 243v1h1v-1zM337 280v1h1v-1zM337 320v1h1v-1zM337 365v1h1v-1zM338 71v5h1v-5zM338 241v1h1v-1zM338 367v1h1v-1zM338 520v4h1v-4zM339 67v4h1v-4zM339 239v1h1v-1zM339 279v1h1v-1zM339 321v1h1v-1zM339 524v7h1v-7zM340 65v2h1v-2zM340 369v1h1v-1zM340 531v3h1v-3zM341 76v3h1v-3zM341 237v1h1v-1zM341 278v1h1v-1zM341 322v1h1v-1zM341 371v1h1v-1zM342 72v4h1v-4zM342 235v1h1v-1zM342 373v1h1v-1zM342 520v4h1v-4zM343 68v4h1v-4zM343 233v1h1v-1zM343 278v1h1v-1zM343 323v1h1v-1zM343 375v1h1v-1zM343 524v6h1v-6zM344 65v3h1v-3zM344 377v1h1v-1zM344 530v4h1v-4zM345 77v3h1v-3zM345 231v1h1v-1zM345 277v1h1v-1zM345 325v1h1v-1zM345 379v1h1v-1zM346 73v4h1v-4zM346 229v1h1v-1zM347 69v4h1v-4zM347 227v1h1v-1zM347 276v1h1v-1zM347 326v1h1v-1zM347 381v1h1v-1zM348 66v3h1v-3zM348 383v1h1v-1zM349 225v1h1v-1zM349 275v1h1v-1zM349 327v1h1v-1zM349 385v1h1v-1zM349 518v2h1v-2zM350 223v1h1v-1zM350 387v1h1v-1zM350 520v3h1v-3zM351 221v1h1v-1zM351 274v1h1v-1zM351 328v1h1v-1zM351 389v1h1v-1zM351 523v4h1v-4zM352 391v1h1v-1zM352 527v3h1v-3zM353 79v3h1v-3zM353 219v1h1v-1zM353 273v1h1v-1zM353 329v1h1v-1zM353 517v2h1v-2zM353 530v2h1v-2zM354 75v4h1v-4zM354 217v1h1v-1zM354 393v1h1v-1zM354 519v3h1v-3zM355 71v4h1v-4zM355 215v1h1v-1zM355 272v1h1v-1zM355 330v1h1v-1zM355 395v1h1v-1zM355 522v4h1v-4zM356 68v3h1v-3zM356 397v1h1v-1zM356 526v3h1v-3zM357 80v3h1v-3zM357 213v1h1v-1zM357 271v1h1v-1zM357 331v1h1v-1zM357 399v1h1v-1zM357 516v2h1v-2zM357 529v2h1v-2zM358 76v4h1v-4zM358 401v1h1v-1zM358 518v3h1v-3zM359 72v4h1v-4zM359 209v1h1v-1zM359 270v1h1v-1zM359 332v1h1v-1zM359 403v1h1v-1zM359 521v4h1v-4zM360 69v3h1v-3zM360 82v2h1v-2zM360 525v3h1v-3zM361 79v3h1v-3zM361 207v1h1v-1zM361 269v1h1v-1zM361 333v1h1v-1zM361 405v1h1v-1zM361 515v2h1v-2zM361 528v2h1v-2zM362 75v4h1v-4zM362 205v1h1v-1zM362 407v1h1v-1zM362 517v3h1v-3zM363 72v3h1v-3zM363 203v1h1v-1zM363 268v1h1v-1zM363 335v1h1v-1zM363 409v1h1v-1zM363 520v4h1v-4zM364 70v2h1v-2zM364 83v2h1v-2zM364 411v1h1v-1zM364 524v3h1v-3zM365 80v3h1v-3zM365 201v1h1v-1zM365 267v1h1v-1zM365 336v1h1v-1zM365 413v1h1v-1zM365 527v2h1v-2zM366 76v4h1v-4zM366 199v1h1v-1zM366 415v1h1v-1zM367 73v3h1v-3zM367 197v1h1v-1zM367 266v1h1v-1zM367 337v1h1v-1zM368 71v2h1v-2zM368 417v1h1v-1zM368 513v2h1v-2zM369 195v1h1v-1zM369 265v1h1v-1zM369 338v1h1v-1zM369 419v1h1v-1zM369 515v2h1v-2zM370 193v1h1v-1zM370 421v1h1v-1zM370 517v3h1v-3zM371 191v1h1v-1zM371 264v1h1v-1zM371 339v1h1v-1zM371 423v1h1v-1zM371 520v3h1v-3zM372 85v2h1v-2zM372 425v1h1v-1zM372 512v1h1v-1zM372 523v2h1v-2zM373 82v3h1v-3zM373 189v1h1v-1zM373 263v1h1v-1zM373 340v1h1v-1zM373 427v1h1v-1zM373 513v2h1v-2zM373 525v1h1v-1zM374 78v4h1v-4zM374 187v1h1v-1zM374 515v3h1v-3zM375 75v3h1v-3zM375 87v1h1v-1zM375 185v1h1v-1zM375 262v1h1v-1zM375 341v1h1v-1zM375 429v1h1v-1zM375 518v3h1v-3zM376 74v1h1v-1zM376 85v2h1v-2zM376 431v1h1v-1zM376 510v2h1v-2zM376 521v2h1v-2zM377 82v3h1v-3zM377 183v1h1v-1zM377 261v1h1v-1zM377 342v1h1v-1zM377 433v1h1v-1zM377 512v3h1v-3zM377 523v2h1v-2zM378 79v3h1v-3zM378 181v1h1v-1zM378 435v1h1v-1zM378 515v4h1v-4zM379 77v2h1v-2zM379 88v2h1v-2zM379 179v1h1v-1zM379 260v1h1v-1zM379 343v1h1v-1zM379 437v1h1v-1zM379 509v2h1v-2zM379 519v3h1v-3zM380 75v2h1v-2zM380 86v2h1v-2zM380 439v1h1v-1zM380 511v2h1v-2zM380 522v2h1v-2zM381 83v3h1v-3zM381 177v1h1v-1zM381 259v1h1v-1zM381 345v1h1v-1zM381 441v1h1v-1zM381 513v2h1v-2zM382 80v3h1v-3zM382 175v1h1v-1zM382 515v3h1v-3zM383 78v2h1v-2zM383 90v2h1v-2zM383 258v1h1v-1zM383 346v1h1v-1zM383 443v1h1v-1zM383 518v2h1v-2zM384 77v1h1v-1zM384 88v2h1v-2zM384 173v1h1v-1zM384 445v1h1v-1zM384 520v2h1v-2zM385 85v3h1v-3zM385 171v1h1v-1zM385 257v1h1v-1zM385 347v1h1v-1zM385 447v1h1v-1zM386 82v3h1v-3zM386 169v1h1v-1zM386 449v1h1v-1zM387 80v2h1v-2zM387 256v1h1v-1zM387 348v1h1v-1zM387 451v1h1v-1zM387 506v2h1v-2zM388 78v2h1v-2zM388 167v1h1v-1zM388 453v1h1v-1zM388 508v2h1v-2zM389 165v1h1v-1zM389 255v1h1v-1zM389 349v1h1v-1zM389 510v2h1v-2zM390 93v2h1v-2zM390 163v1h1v-1zM390 455v1h1v-1zM390 504v2h1v-2zM390 512v3h1v-3zM391 91v2h1v-2zM391 254v1h1v-1zM391 350v1h1v-1zM391 457v1h1v-1zM391 506v2h1v-2zM391 515v2h1v-2zM392 88v3h1v-3zM392 161v1h1v-1zM392 459v1h1v-1zM392 508v2h1v-2zM392 517v2h1v-2zM393 85v3h1v-3zM393 94v2h1v-2zM393 159v1h1v-1zM393 253v1h1v-1zM393 351v1h1v-1zM393 461v1h1v-1zM393 510v2h1v-2zM394 83v2h1v-2zM394 92v2h1v-2zM394 157v1h1v-1zM394 463v1h1v-1zM394 503v1h1v-1zM394 512v2h1v-2zM395 81v2h1v-2zM395 90v2h1v-2zM395 252v1h1v-1zM395 352v1h1v-1zM395 465v1h1v-1zM395 504v2h1v-2zM395 514v2h1v-2zM396 88v2h1v-2zM396 155v1h1v-1zM396 506v2h1v-2zM396 516v1h1v-1zM397 86v2h1v-2zM397 96v2h1v-2zM397 153v1h1v-1zM397 251v1h1v-1zM397 508v2h1v-2zM398 84v2h1v-2zM398 94v2h1v-2zM398 151v1h1v-1zM398 501v1h1v-1zM398 510v2h1v-2zM399 83v1h1v-1zM399 92v2h1v-2zM399 250v1h1v-1zM399 355v1h1v-1zM399 502v2h1v-2zM399 512v2h1v-2zM400 90v2h1v-2zM400 149v1h1v-1zM400 504v2h1v-2zM400 514v1h1v-1zM401 88v2h1v-2zM401 98v2h1v-2zM401 147v1h1v-1zM401 249v1h1v-1zM401 356v1h1v-1zM401 506v2h1v-2zM402 86v2h1v-2zM402 96v2h1v-2zM402 145v1h1v-1zM402 508v2h1v-2zM403 85v1h1v-1zM403 94v2h1v-2zM403 248v1h1v-1zM403 357v1h1v-1zM403 510v2h1v-2zM404 92v2h1v-2zM404 143v1h1v-1zM404 512v2h1v-2zM405 90v2h1v-2zM405 141v1h1v-1zM405 247v1h1v-1zM405 358v1h1v-1zM405 413v2h1v-2zM405 497v1h1v-1zM406 88v2h1v-2zM406 139v1h1v-1zM406 415v3h1v-3zM406 498v2h1v-2zM407 87v1h1v-1zM407 102v1h1v-1zM407 246v1h1v-1zM407 359v1h1v-1zM407 418v3h1v-3zM407 500v2h1v-2zM408 100v2h1v-2zM408 421v3h1v-3zM408 495v1h1v-1zM408 502v2h1v-2zM409 98v2h1v-2zM409 245v1h1v-1zM409 360v1h1v-1zM409 424v2h1v-2zM409 496v2h1v-2zM409 504v2h1v-2zM410 96v2h1v-2zM410 498v2h1v-2zM410 506v2h1v-2zM411 95v1h1v-1zM411 104v1h1v-1zM411 244v1h1v-1zM411 500v1h1v-1zM411 508v2h1v-2zM412 93v2h1v-2zM412 102v2h1v-2zM412 494v2h1v-2zM412 501v2h1v-2zM413 91v2h1v-2zM413 100v2h1v-2zM413 243v1h1v-1zM413 362v1h1v-1zM413 496v2h1v-2zM413 503v2h1v-2zM414 98v2h1v-2zM414 106v1h1v-1zM414 498v1h1v-1zM414 505v2h1v-2zM415 97v1h1v-1zM415 104v2h1v-2zM415 242v1h1v-1zM415 364v1h1v-1zM415 491v1h1v-1zM415 499v2h1v-2zM415 507v1h1v-1zM416 95v2h1v-2zM416 103v1h1v-1zM416 492v2h1v-2zM416 501v2h1v-2zM417 93v2h1v-2zM417 101v2h1v-2zM417 241v1h1v-1zM417 365v1h1v-1zM417 494v2h1v-2zM417 503v2h1v-2zM418 99v2h1v-2zM418 108v1h1v-1zM418 496v1h1v-1zM418 505v1h1v-1zM419 98v1h1v-1zM419 106v2h1v-2zM419 240v1h1v-1zM419 366v1h1v-1zM419 497v2h1v-2zM420 96v2h1v-2zM420 105v1h1v-1zM420 499v2h1v-2zM421 95v1h1v-1zM421 103v2h1v-2zM421 239v1h1v-1zM421 367v1h1v-1zM421 501v2h1v-2zM422 101v2h1v-2zM422 488v2h1v-2zM422 503v1h1v-1zM423 100v1h1v-1zM423 238v1h1v-1zM423 368v1h1v-1zM423 490v1h1v-1zM424 98v2h1v-2zM424 491v2h1v-2zM425 97v1h1v-1zM425 111v2h1v-2zM425 237v1h1v-1zM425 369v1h1v-1zM425 485v1h1v-1zM425 493v1h1v-1zM426 110v1h1v-1zM426 486v2h1v-2zM426 494v2h1v-2zM427 108v2h1v-2zM427 236v1h1v-1zM427 370v1h1v-1zM427 488v1h1v-1zM427 496v1h1v-1zM428 107v1h1v-1zM428 115v1h1v-1zM428 483v1h1v-1zM428 489v2h1v-2zM428 497v2h1v-2zM429 105v2h1v-2zM429 113v2h1v-2zM429 235v1h1v-1zM429 371v1h1v-1zM429 484v2h1v-2zM429 491v2h1v-2zM430 104v1h1v-1zM430 112v1h1v-1zM430 215v1h1v-1zM430 486v1h1v-1zM430 493v1h1v-1zM431 102v2h1v-2zM431 110v2h1v-2zM431 117v1h1v-1zM431 235v1h1v-1zM431 372v1h1v-1zM431 481v1h1v-1zM431 487v1h1v-1zM431 494v2h1v-2zM432 108v2h1v-2zM432 115v2h1v-2zM432 482v2h1v-2zM432 488v2h1v-2zM432 496v1h1v-1zM433 107v1h1v-1zM433 114v1h1v-1zM433 234v1h1v-1zM433 374v1h1v-1zM433 484v1h1v-1zM433 490v1h1v-1zM434 105v2h1v-2zM434 113v1h1v-1zM434 119v1h1v-1zM434 485v1h1v-1zM434 491v1h1v-1zM435 104v1h1v-1zM435 111v2h1v-2zM435 117v2h1v-2zM435 212v1h1v-1zM435 233v1h1v-1zM435 375v1h1v-1zM435 486v2h1v-2zM435 492v2h1v-2zM436 110v1h1v-1zM436 116v1h1v-1zM436 488v1h1v-1zM436 494v1h1v-1zM437 109v1h1v-1zM437 115v1h1v-1zM437 232v1h1v-1zM437 376v1h1v-1zM437 476v1h1v-1zM437 489v1h1v-1zM438 107v2h1v-2zM438 113v2h1v-2zM438 477v1h1v-1zM438 490v2h1v-2zM439 112v1h1v-1zM439 231v1h1v-1zM439 377v1h1v-1zM439 478v2h1v-2zM440 111v1h1v-1zM440 124v1h1v-1zM440 209v1h1v-1zM440 480v1h1v-1zM441 109v2h1v-2zM441 123v1h1v-1zM441 230v1h1v-1zM441 378v1h1v-1zM441 474v1h1v-1zM441 481v1h1v-1zM442 122v1h1v-1zM442 475v2h1v-2zM442 482v1h1v-1zM443 121v1h1v-1zM443 127v1h1v-1zM443 229v1h1v-1zM443 379v1h1v-1zM443 477v1h1v-1zM443 483v1h1v-1zM444 119v2h1v-2zM444 126v1h1v-1zM444 471v1h1v-1zM444 478v1h1v-1zM444 484v2h1v-2zM445 118v1h1v-1zM445 124v2h1v-2zM445 228v1h1v-1zM445 380v1h1v-1zM445 472v1h1v-1zM445 479v1h1v-1zM445 486v1h1v-1zM446 117v1h1v-1zM446 123v1h1v-1zM446 129v1h1v-1zM446 473v2h1v-2zM446 480v1h1v-1zM447 116v1h1v-1zM447 122v1h1v-1zM447 128v1h1v-1zM447 227v1h1v-1zM447 381v1h1v-1zM447 468v1h1v-1zM447 475v1h1v-1zM447 481v2h1v-2zM448 115v1h1v-1zM448 121v1h1v-1zM448 127v1h1v-1zM448 469v2h1v-2zM448 476v1h1v-1zM448 483v1h1v-1zM449 114v1h1v-1zM449 120v1h1v-1zM449 126v1h1v-1zM449 132v1h1v-1zM449 226v1h1v-1zM449 382v1h1v-1zM449 471v1h1v-1zM449 477v1h1v-1zM449 484v1h1v-1zM450 118v2h1v-2zM450 124v2h1v-2zM450 131v1h1v-1zM450 472v1h1v-1zM450 478v2h1v-2zM451 117v1h1v-1zM451 123v1h1v-1zM451 130v1h1v-1zM451 225v1h1v-1zM451 384v1h1v-1zM451 473v2h1v-2zM451 480v1h1v-1zM452 122v1h1v-1zM452 129v1h1v-1zM452 463v1h1v-1zM452 475v1h1v-1zM452 481v1h1v-1zM453 121v1h1v-1zM453 127v2h1v-2zM453 224v1h1v-1zM453 385v1h1v-1zM453 464v1h1v-1zM453 476v1h1v-1zM454 120v1h1v-1zM454 126v1h1v-1zM454 465v1h1v-1zM454 477v2h1v-2zM455 119v1h1v-1zM455 125v1h1v-1zM455 137v1h1v-1zM455 223v1h1v-1zM455 386v1h1v-1zM455 466v1h1v-1zM455 479v1h1v-1zM456 124v1h1v-1zM456 136v1h1v-1zM456 461v1h1v-1zM456 467v1h1v-1zM457 123v1h1v-1zM457 135v1h1v-1zM457 222v1h1v-1zM457 387v1h1v-1zM457 462v1h1v-1zM457 468v1h1v-1zM458 122v1h1v-1zM458 134v1h1v-1zM458 140v1h1v-1zM458 458v1h1v-1zM458 463v1h1v-1zM458 469v1h1v-1zM459 132v2h1v-2zM459 139v1h1v-1zM459 221v1h1v-1zM459 388v1h1v-1zM459 459v1h1v-1zM459 464v1h1v-1zM459 470v1h1v-1zM460 131v1h1v-1zM460 138v1h1v-1zM460 460v1h1v-1zM460 465v1h1v-1zM460 471v1h1v-1zM461 130v1h1v-1zM461 137v1h1v-1zM461 142v1h1v-1zM461 220v1h1v-1zM461 389v1h1v-1zM461 455v1h1v-1zM461 461v1h1v-1zM461 466v1h1v-1zM461 472v1h1v-1zM462 129v1h1v-1zM462 135v2h1v-2zM462 141v1h1v-1zM462 456v1h1v-1zM462 462v1h1v-1zM462 467v1h1v-1zM462 473v1h1v-1zM463 128v1h1v-1zM463 134v1h1v-1zM463 140v1h1v-1zM463 146v1h1v-1zM463 219v1h1v-1zM463 390v1h1v-1zM463 457v1h1v-1zM463 468v1h1v-1zM464 127v1h1v-1zM464 133v1h1v-1zM464 139v1h1v-1zM464 145v1h1v-1zM464 458v1h1v-1zM464 469v1h1v-1zM465 132v1h1v-1zM465 138v1h1v-1zM465 144v1h1v-1zM465 218v1h1v-1zM465 391v1h1v-1zM465 459v1h1v-1zM465 464v1h1v-1zM465 470v1h1v-1zM466 131v1h1v-1zM466 137v1h1v-1zM466 143v1h1v-1zM466 449v1h1v-1zM466 465v1h1v-1zM467 130v1h1v-1zM467 136v1h1v-1zM467 142v1h1v-1zM467 217v1h1v-1zM467 392v1h1v-1zM467 450v1h1v-1zM467 466v1h1v-1zM468 135v1h1v-1zM468 141v1h1v-1zM468 151v1h1v-1zM468 451v1h1v-1zM468 461v1h1v-1zM468 467v1h1v-1zM469 134v1h1v-1zM469 140v1h1v-1zM469 216v1h1v-1zM469 446v1h1v-1zM469 452v1h1v-1zM469 462v1h1v-1zM470 133v1h1v-1zM470 139v1h1v-1zM470 447v1h1v-1zM470 453v1h1v-1zM470 463v1h1v-1zM471 138v1h1v-1zM471 149v1h1v-1zM471 154v1h1v-1zM471 215v1h1v-1zM471 443v1h1v-1zM471 448v1h1v-1zM471 464v1h1v-1zM472 137v1h1v-1zM472 148v1h1v-1zM472 153v1h1v-1zM472 444v1h1v-1zM472 449v1h1v-1zM473 136v1h1v-1zM473 214v1h1v-1zM473 450v1h1v-1zM473 455v1h1v-1zM474 157v1h1v-1zM474 440v1h1v-1zM474 456v1h1v-1zM475 146v1h1v-1zM475 151v1h1v-1zM475 441v1h1v-1zM475 446v1h1v-1zM475 457v1h1v-1zM476 145v1h1v-1zM476 150v1h1v-1zM476 161v1h1v-1zM476 442v1h1v-1zM476 447v1h1v-1zM476 452v1h1v-1zM476 458v1h1v-1zM477 149v1h1v-1zM477 155v1h1v-1zM477 160v1h1v-1zM477 443v1h1v-1zM477 448v1h1v-1zM477 453v1h1v-1zM478 154v1h1v-1zM478 444v1h1v-1zM478 449v1h1v-1zM478 454v1h1v-1zM479 143v1h1v-1zM479 153v1h1v-1zM479 434v1h1v-1zM479 455v1h1v-1zM480 147v1h1v-1zM480 152v1h1v-1zM480 158v1h1v-1zM481 146v1h1v-1zM481 157v1h1v-1zM481 167v1h1v-1zM481 431v1h1v-1zM481 446v1h1v-1zM481 451v1h1v-1zM482 156v1h1v-1zM482 436v1h1v-1zM482 447v1h1v-1zM483 150v1h1v-1zM483 155v1h1v-1zM483 170v1h1v-1zM483 428v1h1v-1zM483 437v1h1v-1zM483 448v1h1v-1zM484 149v1h1v-1zM484 165v1h1v-1zM484 433v1h1v-1zM484 449v1h1v-1zM485 164v1h1v-1zM485 173v1h1v-1zM485 434v1h1v-1zM486 153v1h1v-1zM486 168v1h1v-1zM486 430v1h1v-1zM486 439v1h1v-1zM487 167v1h1v-1zM487 440v1h1v-1zM488 162v1h1v-1zM488 171v1h1v-1zM488 426v1h1v-1zM488 436v1h1v-1zM489 161v1h1v-1zM489 437v1h1v-1zM490 165v1h1v-1zM490 175v1h1v-1zM490 418v1h1v-1zM491 164v1h1v-1zM491 183v1h1v-1zM491 428v1h1v-1zM491 433v1h1v-1zM492 414v1h1v-1zM493 168v1h1v-1zM493 173v1h1v-1zM493 420v1h1v-1zM494 162v1h1v-1zM494 411v1h1v-1zM494 430v1h1v-1zM494 435v1h1v-1zM495 190v1h1v-1zM495 416v1h1v-1zM496 166v1h1v-1zM496 171v1h1v-1zM496 180v1h1v-1zM496 407v1h1v-1zM497 193v1h1v-1zM498 184v1h1v-1zM498 423v1h1v-1zM499 414v1h1v-1zM500 187v1h1v-1zM500 419v1h1v-1zM501 200v1h1v-1zM501 397v1h1v-1zM501 410v1h1v-1zM501 425v1h1v-1zM503 176v1h1v-1zM503 204v1h1v-1zM503 393v1h1v-1zM503 421v1h1v-1zM505 180v1h1v-1zM507 183v1h1v-1zM511 375v1h1v-1zM511 407v1h1v-1zM512 226v1h1v-1zM514 198v1h1v-1zM516 202v1h1v-1zM521 384v1h1v-1zM524 376v1h1v-1zM525 225v1h1v-1z"/><path fill="#ff0000" d="M435 71h3v1h-3zM445 71h3v1h-3zM747 106h3v1h-3zM307 112h5v1h-5zM305 113h2v1h-2zM312 113h2v1h-2zM322 116h3v1h-3zM305 127h2v1h-2zM312 127h2v1h-2zM307 128h5v1h-5zM322 128h15v1h-15zM750 146h3v1h-3zM751 147h2v1h-2zM284 173h2v1h-2zM745 186h2v1h-2zM750 186h2v1h-2zM247 209h2v1h-2zM222 236h2v1h-2zM747 236h3v1h-3zM219 237h2v1h-2zM745 237h2v1h-2zM750 237h2v1h-2zM217 239h2v1h-2zM388 240h2v1h-2zM215 241h2v1h-2zM213 243h2v1h-2zM745 243h2v1h-2zM750 243h2v1h-2zM747 244h3v1h-3zM210 245h3v1h-3zM210 247h2v1h-2zM204 253h2v1h-2zM201 254h2v1h-2zM402 255h2v1h-2zM199 256h2v1h-2zM197 258h3v1h-3zM405 258h2v1h-2zM195 260h2v1h-2zM408 261h2v1h-2zM193 262h2v1h-2zM191 264h3v1h-3zM411 264h2v1h-2zM189 266h2v1h-2zM187 268h2v1h-2zM186 269h2v1h-2zM185 270h2v1h-2zM417 270h2v1h-2zM183 272h2v1h-2zM419 273h2v1h-2zM180 275h2v1h-2zM750 276h3v1h-3zM751 277h2v1h-2zM35 278h5v1h-5zM177 278h2v1h-2zM425 279h2v1h-2zM746 279h2v1h-2zM173 281h3v1h-3zM428 282h2v1h-2zM171 283h2v1h-2zM746 284h2v1h-2zM169 285h2v1h-2zM431 285h2v1h-2zM168 286h2v1h-2zM167 287h2v1h-2zM745 287h2v1h-2zM434 288h2v1h-2zM165 289h2v1h-2zM482 289h6v1h-6zM486 290h2v1h-2zM162 292h2v1h-2zM745 293h8v1h-8zM474 295h5v1h-5zM479 296h2v1h-2zM474 305h5v1h-5zM422 525h5v1h-5zM425 526h2v1h-2zM29 290v1h1v-1zM30 291v1h1v-1zM31 282v5h1v-5zM31 292v1h1v-1zM32 281v1h1v-1zM32 287v1h1v-1zM32 291v1h1v-1zM33 280v1h1v-1zM33 288v3h1v-3zM34 279v1h1v-1zM40 279v1h1v-1zM41 280v1h1v-1zM41 288v3h1v-3zM42 281v1h1v-1zM42 287v1h1v-1zM42 291v1h1v-1zM43 282v5h1v-5zM43 292v1h1v-1zM44 293v1h1v-1zM45 294v1h1v-1zM149 299v1h1v-1zM155 299v1h1v-1zM156 298v1h1v-1zM157 297v1h1v-1zM158 296v1h1v-1zM158 302v1h1v-1zM159 295v1h1v-1zM160 294v1h1v-1zM161 293v1h1v-1zM161 306v1h1v-1zM163 291v1h1v-1zM164 290v1h1v-1zM165 310v1h1v-1zM166 288v1h1v-1zM168 314v1h1v-1zM170 284v1h1v-1zM172 282v1h1v-1zM172 318v1h1v-1zM175 280v1h1v-1zM175 322v1h1v-1zM176 279v1h1v-1zM178 277v1h1v-1zM179 276v1h1v-1zM179 326v1h1v-1zM181 274v1h1v-1zM182 273v1h1v-1zM183 330v1h1v-1zM184 271v1h1v-1zM186 334v1h1v-1zM188 267v1h1v-1zM190 265v1h1v-1zM190 267v1h1v-1zM190 338v1h1v-1zM192 263v1h1v-1zM193 342v1h1v-1zM194 261v1h1v-1zM196 259v1h1v-1zM196 261v1h1v-1zM197 346v1h1v-1zM198 257v1h1v-1zM200 255v1h1v-1zM200 350v1h1v-1zM202 253v1h1v-1zM202 256v1h1v-1zM203 252v1h1v-1zM204 251v1h1v-1zM204 354v1h1v-1zM205 250v1h1v-1zM206 249v1h1v-1zM206 251v1h1v-1zM207 248v1h1v-1zM207 358v1h1v-1zM208 247v1h1v-1zM208 249v2h1v-2zM209 246v1h1v-1zM211 362v1h1v-1zM212 244v1h1v-1zM214 242v1h1v-1zM214 245v1h1v-1zM215 366v1h1v-1zM216 240v1h1v-1zM217 242v1h1v-1zM218 238v1h1v-1zM218 370v1h1v-1zM220 236v1h1v-1zM220 239v1h1v-1zM221 235v1h1v-1zM222 234v1h1v-1zM222 374v1h1v-1zM223 233v1h1v-1zM224 232v1h1v-1zM224 234v1h1v-1zM225 231v1h1v-1zM225 378v1h1v-1zM226 230v1h1v-1zM226 232v2h1v-2zM227 229v1h1v-1zM228 228v1h1v-1zM228 230v1h1v-1zM229 227v1h1v-1zM229 231v1h1v-1zM229 382v1h1v-1zM230 226v1h1v-1zM230 228v1h1v-1zM231 225v1h1v-1zM232 224v1h1v-1zM232 226v1h1v-1zM232 228v1h1v-1zM232 386v1h1v-1zM233 223v1h1v-1zM234 222v1h1v-1zM234 224v1h1v-1zM235 221v1h1v-1zM235 225v1h1v-1zM236 220v1h1v-1zM236 222v1h1v-1zM236 390v1h1v-1zM238 218v1h1v-1zM238 222v1h1v-1zM239 217v1h1v-1zM239 394v1h1v-1zM240 216v1h1v-1zM240 219v1h1v-1zM241 215v1h1v-1zM241 220v1h1v-1zM242 214v1h1v-1zM242 217v1h1v-1zM243 213v1h1v-1zM243 398v1h1v-1zM244 212v1h1v-1zM244 215v1h1v-1zM244 217v1h1v-1zM245 211v1h1v-1zM246 210v1h1v-1zM246 213v1h1v-1zM246 402v1h1v-1zM247 214v1h1v-1zM248 211v1h1v-1zM249 208v1h1v-1zM250 207v1h1v-1zM250 209v1h1v-1zM250 211v1h1v-1zM250 406v1h1v-1zM251 206v1h1v-1zM252 205v1h1v-1zM252 207v1h1v-1zM253 204v1h1v-1zM253 209v1h1v-1zM254 203v1h1v-1zM254 205v1h1v-1zM254 410v1h1v-1zM255 202v1h1v-1zM256 201v1h1v-1zM256 203v1h1v-1zM257 200v1h1v-1zM257 414v1h1v-1zM258 199v1h1v-1zM258 201v1h1v-1zM259 198v1h1v-1zM259 203v1h1v-1zM260 197v1h1v-1zM260 200v1h1v-1zM261 196v1h1v-1zM261 418v1h1v-1zM262 195v1h1v-1zM262 198v1h1v-1zM262 200v1h1v-1zM263 194v1h1v-1zM264 193v1h1v-1zM264 196v1h1v-1zM264 422v1h1v-1zM265 192v1h1v-1zM265 198v1h1v-1zM266 191v1h1v-1zM266 194v1h1v-1zM267 190v1h1v-1zM268 189v1h1v-1zM268 192v1h1v-1zM268 195v1h1v-1zM268 426v1h1v-1zM269 188v1h1v-1zM270 187v1h1v-1zM270 190v1h1v-1zM271 186v1h1v-1zM271 192v1h1v-1zM271 430v1h1v-1zM272 185v1h1v-1zM272 188v1h1v-1zM273 184v1h1v-1zM274 183v1h1v-1zM274 186v1h1v-1zM274 189v1h1v-1zM275 182v1h1v-1zM275 434v1h1v-1zM276 181v1h1v-1zM276 184v1h1v-1zM277 180v1h1v-1zM277 186v1h1v-1zM278 179v1h1v-1zM278 183v1h1v-1zM278 438v1h1v-1zM279 178v1h1v-1zM280 177v1h1v-1zM280 181v1h1v-1zM280 184v1h1v-1zM281 176v1h1v-1zM282 175v1h1v-1zM282 179v1h1v-1zM283 174v1h1v-1zM283 181v1h1v-1zM284 177v1h1v-1zM286 172v1h1v-1zM286 175v1h1v-1zM286 178v1h1v-1zM287 171v1h1v-1zM288 170v1h1v-1zM288 173v1h1v-1zM289 169v1h1v-1zM289 175v1h1v-1zM290 168v1h1v-1zM290 171v1h1v-1zM291 167v1h1v-1zM292 166v1h1v-1zM292 169v1h1v-1zM292 173v1h1v-1zM293 165v1h1v-1zM294 164v1h1v-1zM294 167v1h1v-1zM295 163v1h1v-1zM295 170v1h1v-1zM296 162v1h1v-1zM296 165v1h1v-1zM297 161v1h1v-1zM298 160v1h1v-1zM298 164v1h1v-1zM298 167v1h1v-1zM299 159v1h1v-1zM300 158v1h1v-1zM300 162v1h1v-1zM301 118v5h1v-5zM301 157v1h1v-1zM301 164v1h1v-1zM302 116v2h1v-2zM302 123v2h1v-2zM302 156v1h1v-1zM302 160v1h1v-1zM303 115v1h1v-1zM303 125v1h1v-1zM304 114v1h1v-1zM304 126v1h1v-1zM304 158v1h1v-1zM304 162v1h1v-1zM305 157v1h1v-1zM306 150v1h1v-1zM306 156v1h1v-1zM308 158v1h1v-1zM309 120v1h1v-1zM309 161v1h1v-1zM310 160v1h1v-1zM311 150v1h1v-1zM311 163v1h1v-1zM312 162v1h1v-1zM313 159v1h1v-1zM313 165v1h1v-1zM314 114v1h1v-1zM314 126v1h1v-1zM314 164v1h1v-1zM315 115v1h1v-1zM315 125v1h1v-1zM315 167v1h1v-1zM316 116v2h1v-2zM316 123v2h1v-2zM316 162v1h1v-1zM316 166v1h1v-1zM317 118v5h1v-5zM317 169v1h1v-1zM318 165v1h1v-1zM318 168v1h1v-1zM319 171v1h1v-1zM320 170v1h1v-1zM321 168v1h1v-1zM321 173v1h1v-1zM322 126v2h1v-2zM322 172v1h1v-1zM323 125v1h1v-1zM323 174v2h1v-2zM324 122v3h1v-3zM324 171v1h1v-1zM325 117v1h1v-1zM325 121v1h1v-1zM325 176v2h1v-2zM326 118v3h1v-3zM327 174v1h1v-1zM327 178v2h1v-2zM329 180v2h1v-2zM330 177v1h1v-1zM331 182v2h1v-2zM332 116v12h1v-12zM332 129v2h1v-2zM333 115v1h1v-1zM333 180v1h1v-1zM333 184v2h1v-2zM334 114v1h1v-1zM335 183v1h1v-1zM335 186v2h1v-2zM337 188v2h1v-2zM338 186v1h1v-1zM338 191v1h1v-1zM339 190v1h1v-1zM340 193v1h1v-1zM341 189v1h1v-1zM341 192v1h1v-1zM342 195v1h1v-1zM343 194v1h1v-1zM344 192v1h1v-1zM344 197v1h1v-1zM345 196v1h1v-1zM346 199v1h1v-1zM347 195v1h1v-1zM347 198v1h1v-1zM348 201v1h1v-1zM349 200v1h1v-1zM350 198v1h1v-1zM350 203v1h1v-1zM351 202v1h1v-1zM352 201v1h1v-1zM352 205v1h1v-1zM353 204v1h1v-1zM354 207v1h1v-1zM355 204v1h1v-1zM355 206v1h1v-1zM356 209v1h1v-1zM357 208v1h1v-1zM358 207v1h1v-1zM358 210v2h1v-2zM360 212v2h1v-2zM361 210v1h1v-1zM362 214v2h1v-2zM364 213v1h1v-1zM364 216v2h1v-2zM366 218v2h1v-2zM367 216v1h1v-1zM368 220v2h1v-2zM369 219v1h1v-1zM370 222v2h1v-2zM372 222v1h1v-1zM372 224v2h1v-2zM374 226v2h1v-2zM375 225v1h1v-1zM376 228v2h1v-2zM378 228v1h1v-1zM378 230v2h1v-2zM380 232v2h1v-2zM381 231v1h1v-1zM382 234v2h1v-2zM384 234v1h1v-1zM384 236v2h1v-2zM386 237v3h1v-3zM388 241v1h1v-1zM390 242v2h1v-2zM392 243v3h1v-3zM393 246v1h1v-1zM394 247v1h1v-1zM395 246v1h1v-1zM395 248v1h1v-1zM396 249v1h1v-1zM397 250v1h1v-1zM398 249v1h1v-1zM398 251v1h1v-1zM399 252v1h1v-1zM400 253v1h1v-1zM401 252v1h1v-1zM401 254v1h1v-1zM403 256v1h1v-1zM404 257v1h1v-1zM406 259v1h1v-1zM407 260v1h1v-1zM409 262v2h1v-2zM410 541v1h1v-1zM411 265v1h1v-1zM411 540v1h1v-1zM412 531v1h1v-1zM412 539v1h1v-1zM413 266v2h1v-2zM413 532v1h1v-1zM413 538v1h1v-1zM414 533v1h1v-1zM414 537v1h1v-1zM415 267v3h1v-3zM415 534v1h1v-1zM415 536v1h1v-1zM416 535v1h1v-1zM417 271v1h1v-1zM417 534v1h1v-1zM417 536v1h1v-1zM418 533v1h1v-1zM418 537v1h1v-1zM419 272v1h1v-1zM419 532v1h1v-1zM419 538v1h1v-1zM420 531v1h1v-1zM420 539v1h1v-1zM421 274v2h1v-2zM421 530v1h1v-1zM422 529v1h1v-1zM423 276v2h1v-2zM423 528v1h1v-1zM424 527v1h1v-1zM425 278v1h1v-1zM426 280v1h1v-1zM426 527v3h1v-3zM427 281v1h1v-1zM429 283v1h1v-1zM430 284v1h1v-1zM432 286v1h1v-1zM433 73v3h1v-3zM433 287v1h1v-1zM434 72v1h1v-1zM434 76v1h1v-1zM435 77v1h1v-1zM435 289v1h1v-1zM436 290v1h1v-1zM437 291v1h1v-1zM438 72v1h1v-1zM438 292v1h1v-1zM439 73v3h1v-3zM439 293v1h1v-1zM440 76v4h1v-4zM440 294v1h1v-1zM441 80v8h1v-8zM441 295v1h1v-1zM442 76v4h1v-4zM442 296v1h1v-1zM443 73v3h1v-3zM443 297v1h1v-1zM444 72v1h1v-1zM447 77v1h1v-1zM448 72v1h1v-1zM448 76v1h1v-1zM449 73v3h1v-3zM449 297v1h1v-1zM471 298v5h1v-5zM472 297v1h1v-1zM472 303v1h1v-1zM473 296v1h1v-1zM473 304v1h1v-1zM479 304v1h1v-1zM480 297v1h1v-1zM480 303v1h1v-1zM481 295v1h1v-1zM481 298v5h1v-5zM482 294v1h1v-1zM483 293v1h1v-1zM484 292v1h1v-1zM485 291v1h1v-1zM487 291v4h1v-4zM744 112v1h1v-1zM744 154v1h1v-1zM744 187v2h1v-2zM744 239v3h1v-3zM744 281v2h1v-2zM745 108v3h1v-3zM745 113v1h1v-1zM745 149v1h1v-1zM745 153v1h1v-1zM745 189v1h1v-1zM745 238v1h1v-1zM745 242v1h1v-1zM745 280v1h1v-1zM745 283v1h1v-1zM745 292v1h1v-1zM746 107v1h1v-1zM746 111v2h1v-2zM746 150v1h1v-1zM746 152v1h1v-1zM746 290v2h1v-2zM747 151v1h1v-1zM747 187v3h1v-3zM747 288v2h1v-2zM748 150v1h1v-1zM748 152v1h1v-1zM748 190v5h1v-5zM748 240v1h1v-1zM748 280v1h1v-1zM748 283v1h1v-1zM749 149v1h1v-1zM749 153v1h1v-1zM749 187v3h1v-3zM749 279v1h1v-1zM749 281v2h1v-2zM750 107v1h1v-1zM750 111v2h1v-2zM750 148v1h1v-1zM750 278v1h1v-1zM750 287v6h1v-6zM750 294v1h1v-1zM751 108v3h1v-3zM751 113v1h1v-1zM751 189v1h1v-1zM751 238v1h1v-1zM751 242v1h1v-1zM751 286v1h1v-1zM752 114v1h1v-1zM752 148v1h1v-1zM752 187v2h1v-2zM752 239v3h1v-3zM752 278v1h1v-1z"/><path fill="#00ff00" d="M176 59h11v1h-11zM176 71h11v1h-11zM258 118h5v1h-5zM258 126h5v1h-5zM747 128h3v1h-3zM256 130h9v1h-9zM744 131h4v1h-4zM749 131h4v1h-4zM744 133h9v1h-9zM188 148h5v1h-5zM188 156h5v1h-5zM186 160h9v1h-9zM745 167h2v1h-2zM748 167h2v1h-2zM747 168h2v1h-2zM750 168h2v1h-2zM745 172h2v1h-2zM748 172h2v1h-2zM747 173h2v1h-2zM750 173h2v1h-2zM746 207h6v1h-6zM746 213h6v1h-6zM339 231h2v1h-2zM350 255h2v1h-2zM747 257h3v1h-3zM747 261h3v1h-3zM746 263h5v1h-5zM747 266h3v1h-3zM356 267h2v1h-2zM747 270h3v1h-3zM746 272h5v1h-5zM361 279h2v1h-2zM367 288h2v1h-2zM367 291h2v1h-2zM556 305h2v1h-2zM562 305h2v1h-2zM375 306h2v1h-2zM559 309h2v1h-2zM565 309h2v1h-2zM746 309h5v1h-5zM378 312h2v1h-2zM747 312h3v1h-3zM378 315h2v1h-2zM556 315h2v1h-2zM562 315h2v1h-2zM559 319h2v1h-2zM565 319h2v1h-2zM383 324h2v1h-2zM386 330h2v1h-2zM389 339h2v1h-2zM391 342h2v1h-2zM394 348h2v1h-2zM402 366h2v1h-2zM413 432h9v1h-9zM416 438h3v1h-3zM416 442h3v1h-3zM155 515h5v1h-5zM149 521h7v1h-7zM159 521h7v1h-7zM149 525h17v1h-17zM153 517v3h1v-3zM154 516v1h1v-1zM154 520v1h1v-1zM156 300v1h1v-1zM160 302v1h1v-1zM160 516v1h1v-1zM160 520v1h1v-1zM161 517v3h1v-3zM164 304v1h1v-1zM168 306v1h1v-1zM172 308v1h1v-1zM174 57v1h1v-1zM174 73v1h1v-1zM175 58v1h1v-1zM175 72v1h1v-1zM176 310v1h1v-1zM178 60v11h1v-11zM180 312v1h1v-1zM184 60v11h1v-11zM184 314v1h1v-1zM186 150v5h1v-5zM187 58v1h1v-1zM187 72v1h1v-1zM187 149v1h1v-1zM187 155v1h1v-1zM188 57v1h1v-1zM188 73v1h1v-1zM188 316v1h1v-1zM190 157v3h1v-3zM190 161v4h1v-4zM192 318v1h1v-1zM193 149v1h1v-1zM193 155v1h1v-1zM194 150v5h1v-5zM196 320v1h1v-1zM200 322v1h1v-1zM204 324v1h1v-1zM208 180v1h1v-1zM208 326v1h1v-1zM212 328v1h1v-1zM216 187v1h1v-1zM216 330v1h1v-1zM220 189v1h1v-1zM220 332v1h1v-1zM224 191v1h1v-1zM224 334v1h1v-1zM228 193v1h1v-1zM228 336v1h1v-1zM232 195v1h1v-1zM232 338v1h1v-1zM236 197v1h1v-1zM236 340v1h1v-1zM240 199v1h1v-1zM240 342v1h1v-1zM244 201v1h1v-1zM244 344v1h1v-1zM248 202v1h1v-1zM248 346v1h1v-1zM252 204v1h1v-1zM252 348v1h1v-1zM256 116v1h1v-1zM256 120v5h1v-5zM256 206v1h1v-1zM256 350v1h1v-1zM257 117v1h1v-1zM257 119v1h1v-1zM257 125v1h1v-1zM260 127v3h1v-3zM260 131v2h1v-2zM260 208v1h1v-1zM260 352v1h1v-1zM263 117v1h1v-1zM263 119v1h1v-1zM263 125v1h1v-1zM264 116v1h1v-1zM264 120v5h1v-5zM264 210v1h1v-1zM264 354v1h1v-1zM266 153v1h1v-1zM268 212v1h1v-1zM268 356v1h1v-1zM272 214v1h1v-1zM272 358v1h1v-1zM276 216v1h1v-1zM276 360v1h1v-1zM280 218v1h1v-1zM280 362v1h1v-1zM284 220v1h1v-1zM284 364v1h1v-1zM288 222v1h1v-1zM292 224v1h1v-1zM292 368v1h1v-1zM296 226v1h1v-1zM296 370v1h1v-1zM300 228v1h1v-1zM300 372v1h1v-1zM304 230v1h1v-1zM304 374v1h1v-1zM305 159v1h1v-1zM307 159v1h1v-1zM307 163v1h1v-1zM308 232v1h1v-1zM308 377v1h1v-1zM309 162v1h1v-1zM309 167v1h1v-1zM310 165v1h1v-1zM311 158v1h1v-1zM311 171v1h1v-1zM312 160v1h1v-1zM312 168v1h1v-1zM312 175v1h1v-1zM312 233v1h1v-1zM312 379v1h1v-1zM313 162v1h1v-1zM313 171v1h1v-1zM314 166v1h1v-1zM314 174v1h1v-1zM314 179v1h1v-1zM315 168v1h1v-1zM316 170v1h1v-1zM316 177v1h1v-1zM316 183v1h1v-1zM316 235v1h1v-1zM316 381v1h1v-1zM317 172v1h1v-1zM317 180v1h1v-1zM318 174v1h1v-1zM318 183v1h1v-1zM318 187v1h1v-1zM319 176v1h1v-1zM320 178v1h1v-1zM320 186v1h1v-1zM320 191v1h1v-1zM320 237v1h1v-1zM320 383v1h1v-1zM321 180v1h1v-1zM321 182v1h1v-1zM321 189v1h1v-1zM322 184v1h1v-1zM322 195v1h1v-1zM323 186v1h1v-1zM323 192v1h1v-1zM324 188v1h1v-1zM324 195v1h1v-1zM324 199v1h1v-1zM324 239v1h1v-1zM324 385v1h1v-1zM325 190v1h1v-1zM325 198v1h1v-1zM326 192v1h1v-1zM326 203v1h1v-1zM327 194v1h1v-1zM327 201v1h1v-1zM327 207v1h1v-1zM328 196v1h1v-1zM328 204v1h1v-1zM328 241v1h1v-1zM328 387v1h1v-1zM329 198v1h1v-1zM329 200v1h1v-1zM329 207v1h1v-1zM329 211v1h1v-1zM330 202v1h1v-1zM331 204v1h1v-1zM331 210v1h1v-1zM331 215v1h1v-1zM332 206v1h1v-1zM332 213v1h1v-1zM332 243v1h1v-1zM332 389v1h1v-1zM333 208v1h1v-1zM333 219v1h1v-1zM334 210v1h1v-1zM334 216v1h1v-1zM335 212v1h1v-1zM335 219v1h1v-1zM335 223v1h1v-1zM336 214v1h1v-1zM336 216v1h1v-1zM336 222v1h1v-1zM336 245v1h1v-1zM336 391v1h1v-1zM337 218v1h1v-1zM337 227v1h1v-1zM338 220v1h1v-1zM338 225v1h1v-1zM339 222v1h1v-1zM339 228v1h1v-1zM340 224v1h1v-1zM340 247v1h1v-1zM340 393v1h1v-1zM341 226v1h1v-1zM341 235v1h1v-1zM342 228v1h1v-1zM342 234v1h1v-1zM342 239v1h1v-1zM343 230v1h1v-1zM343 237v1h1v-1zM344 232v1h1v-1zM344 234v1h1v-1zM344 243v1h1v-1zM344 249v1h1v-1zM344 395v1h1v-1zM345 236v1h1v-1zM345 240v1h1v-1zM346 238v1h1v-1zM346 243v1h1v-1zM346 247v1h1v-1zM347 240v1h1v-1zM347 246v1h1v-1zM348 242v1h1v-1zM348 251v1h1v-1zM348 397v1h1v-1zM349 244v1h1v-1zM349 249v1h1v-1zM350 246v1h1v-1zM350 252v1h1v-1zM351 248v1h1v-1zM352 250v1h1v-1zM352 252v2h1v-2zM352 259v1h1v-1zM352 399v1h1v-1zM353 254v1h1v-1zM353 258v1h1v-1zM354 256v1h1v-1zM354 261v1h1v-1zM354 263v1h1v-1zM355 258v1h1v-1zM356 255v1h1v-1zM356 260v1h1v-1zM356 264v1h1v-1zM356 401v1h1v-1zM357 262v1h1v-1zM358 264v1h1v-1zM358 270v2h1v-2zM359 266v1h1v-1zM359 268v1h1v-1zM359 275v1h1v-1zM360 257v1h1v-1zM360 270v1h1v-1zM360 273v1h1v-1zM360 403v1h1v-1zM361 272v1h1v-1zM361 276v1h1v-1zM362 274v1h1v-1zM363 276v1h1v-1zM363 283v1h1v-1zM364 259v1h1v-1zM364 278v1h1v-1zM364 282v1h1v-1zM364 405v1h1v-1zM365 280v1h1v-1zM365 285v1h1v-1zM365 287v1h1v-1zM366 282v1h1v-1zM367 284v1h1v-1zM367 286v1h1v-1zM368 261v1h1v-1zM368 407v1h1v-1zM369 290v1h1v-1zM369 294v2h1v-2zM370 292v1h1v-1zM371 294v1h1v-1zM371 297v1h1v-1zM371 299v1h1v-1zM372 263v1h1v-1zM372 296v1h1v-1zM372 300v1h1v-1zM372 409v1h1v-1zM373 298v1h1v-1zM373 303v1h1v-1zM374 300v1h1v-1zM374 302v1h1v-1zM374 307v1h1v-1zM375 304v1h1v-1zM376 265v1h1v-1zM376 309v1h1v-1zM376 311v1h1v-1zM376 411v1h1v-1zM377 308v1h1v-1zM378 310v1h1v-1zM380 266v1h1v-1zM380 314v1h1v-1zM380 318v2h1v-2zM380 413v1h1v-1zM381 316v1h1v-1zM382 318v1h1v-1zM382 320v2h1v-2zM382 323v1h1v-1zM383 322v1h1v-1zM384 268v1h1v-1zM384 327v1h1v-1zM385 326v1h1v-1zM386 328v1h1v-1zM386 331v1h1v-1zM387 333v1h1v-1zM388 270v1h1v-1zM388 332v1h1v-1zM388 335v1h1v-1zM389 334v1h1v-1zM389 336v1h1v-1zM390 338v1h1v-1zM391 340v1h1v-1zM391 343v1h1v-1zM392 272v1h1v-1zM393 344v2h1v-2zM393 347v1h1v-1zM394 346v1h1v-1zM395 351v1h1v-1zM396 274v1h1v-1zM396 350v1h1v-1zM397 352v1h1v-1zM397 354v2h1v-2zM398 356v2h1v-2zM399 358v2h1v-2zM400 276v1h1v-1zM400 360v1h1v-1zM400 409v1h1v-1zM401 362v2h1v-2zM402 364v1h1v-1zM403 367v1h1v-1zM404 278v1h1v-1zM404 368v4h1v-4zM405 372v1h1v-1zM406 374v2h1v-2zM407 376v1h1v-1zM408 280v1h1v-1zM408 378v2h1v-2zM409 380v2h1v-2zM410 382v2h1v-2zM411 384v1h1v-1zM411 426v1h1v-1zM411 436v1h1v-1zM412 282v1h1v-1zM412 386v2h1v-2zM412 427v1h1v-1zM412 435v1h1v-1zM413 428v4h1v-4zM413 433v2h1v-2zM415 439v3h1v-3zM416 284v1h1v-1zM417 430v2h1v-2zM417 433v5h1v-5zM419 439v3h1v-3zM420 286v1h1v-1zM421 428v4h1v-4zM421 433v2h1v-2zM422 427v1h1v-1zM422 435v1h1v-1zM423 426v1h1v-1zM423 436v1h1v-1zM424 288v1h1v-1zM428 290v1h1v-1zM432 292v1h1v-1zM436 294v1h1v-1zM440 296v1h1v-1zM553 310v1h1v-1zM553 320v1h1v-1zM554 308v2h1v-2zM554 318v2h1v-2zM555 307v1h1v-1zM555 317v1h1v-1zM556 306v1h1v-1zM556 316v1h1v-1zM557 304v1h1v-1zM557 314v1h1v-1zM558 306v3h1v-3zM558 316v3h1v-3zM559 310v1h1v-1zM559 320v1h1v-1zM560 308v1h1v-1zM560 318v1h1v-1zM561 307v1h1v-1zM561 317v1h1v-1zM562 306v1h1v-1zM562 316v1h1v-1zM563 304v1h1v-1zM563 314v1h1v-1zM564 306v3h1v-3zM564 316v3h1v-3zM565 310v1h1v-1zM565 320v1h1v-1zM566 308v1h1v-1zM566 318v1h1v-1zM567 307v1h1v-1zM567 317v1h1v-1zM568 305v2h1v-2zM568 315v2h1v-2zM569 304v1h1v-1zM569 314v1h1v-1zM744 169v1h1v-1zM744 174v1h1v-1zM745 168v1h1v-1zM745 173v1h1v-1zM745 206v1h1v-1zM745 214v1h1v-1zM745 306v1h1v-1zM745 311v1h1v-1zM746 129v2h1v-2zM746 166v1h1v-1zM746 171v1h1v-1zM746 256v1h1v-1zM746 258v3h1v-3zM746 267v3h1v-3zM746 307v2h1v-2zM746 310v1h1v-1zM747 169v1h1v-1zM747 174v1h1v-1zM747 208v5h1v-5zM747 313v1h1v-1zM748 262v1h1v-1zM748 264v1h1v-1zM748 271v1h1v-1zM748 273v2h1v-2zM748 308v1h1v-1zM748 310v2h1v-2zM748 314v1h1v-1zM749 166v1h1v-1zM749 171v1h1v-1zM749 313v1h1v-1zM750 129v2h1v-2zM750 169v1h1v-1zM750 174v1h1v-1zM750 208v5h1v-5zM750 256v1h1v-1zM750 258v3h1v-3zM750 267v3h1v-3zM750 307v2h1v-2zM750 310v1h1v-1zM751 167v1h1v-1zM751 172v1h1v-1zM751 306v1h1v-1zM751 311v1h1v-1zM752 166v1h1v-1zM752 171v1h1v-1zM752 206v1h1v-1zM752 214v1h1v-1z"/><path fill="#ffff00" d="M308 32h2v1h-2zM315 32h2v1h-2zM310 33h5v1h-5zM308 34h2v1h-2zM315 34h2v1h-2zM308 44h2v1h-2zM315 44h2v1h-2zM310 45h5v1h-5zM749 118h3v1h-3zM303 155h2v1h-2zM307 156h4v1h-4zM750 156h2v1h-2zM744 157h2v1h-2zM748 157h2v1h-2zM750 159h2v1h-2zM747 198h3v1h-3zM747 204h3v1h-3zM745 297h5v1h-5zM749 299h2v1h-2zM747 300h2v1h-2zM397 403h2v1h-2zM70 413h2v1h-2zM67 415h2v1h-2zM425 415h9v1h-9zM433 419h3v1h-3zM429 421h3v1h-3zM523 433h3v1h-3zM512 434h2v1h-2zM519 434h2v1h-2zM523 439h3v1h-3zM57 410v1h1v-1zM58 411v1h1v-1zM59 412v13h1v-13zM60 411v1h1v-1zM61 410v1h1v-1zM62 411v1h1v-1zM63 412v13h1v-13zM64 411v1h1v-1zM65 410v1h1v-1zM66 411v1h1v-1zM67 412v3h1v-3zM67 416v7h1v-7zM67 426v1h1v-1zM68 423v1h1v-1zM68 425v1h1v-1zM69 414v1h1v-1zM69 424v1h1v-1zM70 423v1h1v-1zM70 425v1h1v-1zM71 412v1h1v-1zM71 414v9h1v-9zM71 426v1h1v-1zM303 149v1h1v-1zM305 156v1h1v-1zM306 29v1h1v-1zM306 37v5h1v-5zM306 155v1h1v-1zM307 30v2h1v-2zM307 35v2h1v-2zM307 42v2h1v-2zM317 30v2h1v-2zM317 35v2h1v-2zM317 42v2h1v-2zM318 29v1h1v-1zM318 37v5h1v-5zM388 411v2h1v-2zM392 408v1h1v-1zM396 404v2h1v-2zM399 402v1h1v-1zM403 406v1h1v-1zM429 413v2h1v-2zM429 416v5h1v-5zM429 422v6h1v-6zM432 420v1h1v-1zM435 425v3h1v-3zM436 420v1h1v-1zM436 424v1h1v-1zM436 428v1h1v-1zM437 421v3h1v-3zM437 429v1h1v-1zM511 435v1h1v-1zM513 433v1h1v-1zM513 435v7h1v-7zM514 442v1h1v-1zM515 443v5h1v-5zM516 442v1h1v-1zM517 437v5h1v-5zM518 436v1h1v-1zM519 433v1h1v-1zM519 435v1h1v-1zM520 436v1h1v-1zM521 435v1h1v-1zM521 437v1h1v-1zM522 434v1h1v-1zM522 438v1h1v-1zM524 440v1h1v-1zM525 441v1h1v-1zM525 449v1h1v-1zM526 434v1h1v-1zM526 438v1h1v-1zM526 442v1h1v-1zM526 448v1h1v-1zM527 435v3h1v-3zM527 443v5h1v-5zM744 116v1h1v-1zM745 117v7h1v-7zM745 156v1h1v-1zM745 158v3h1v-3zM745 196v1h1v-1zM745 200v3h1v-3zM746 116v1h1v-1zM746 161v3h1v-3zM746 197v1h1v-1zM746 199v1h1v-1zM746 203v1h1v-1zM747 117v7h1v-7zM747 158v3h1v-3zM747 296v1h1v-1zM747 298v2h1v-2zM747 301v3h1v-3zM748 116v1h1v-1zM748 156v1h1v-1zM749 117v1h1v-1zM749 119v4h1v-4zM749 124v1h1v-1zM749 158v1h1v-1zM750 123v1h1v-1zM750 197v1h1v-1zM750 199v1h1v-1zM750 203v1h1v-1zM750 302v2h1v-2zM751 117v1h1v-1zM751 119v4h1v-4zM751 124v1h1v-1zM751 160v1h1v-1zM751 164v1h1v-1zM751 196v1h1v-1zM751 200v3h1v-3zM751 300v2h1v-2zM751 304v1h1v-1zM752 157v2h1v-2zM752 161v3h1v-3z"/><path fill="#0000ff" d="M750 144h2v1h-2zM77 150h5v1h-5zM74 151h3v1h-3zM83 152h3v1h-3zM73 156h3v1h-3zM83 158h3v1h-3zM73 162h3v1h-3zM82 163h3v1h-3zM77 164h5v1h-5zM525 180h17v1h-17zM744 180h9v1h-9zM214 188h2v1h-2zM216 191h2v1h-2zM218 193h2v1h-2zM219 194h2v1h-2zM221 197h2v1h-2zM232 209h2v1h-2zM747 217h3v1h-3zM745 218h2v1h-2zM750 218h2v1h-2zM745 220h2v1h-2zM242 221h2v1h-2zM750 221h2v1h-2zM745 223h2v1h-2zM750 223h2v1h-2zM747 224h3v1h-3zM252 233h2v1h-2zM746 246h3v1h-3zM749 247h2v1h-2zM749 253h2v1h-2zM746 254h3v1h-3zM283 269h2v1h-2zM294 296h3v1h-3zM296 298h2v1h-2zM293 316h2v1h-2zM744 317h2v1h-2zM747 317h3v1h-3zM751 317h2v1h-2zM747 320h3v1h-3zM746 322h5v1h-5zM292 326h2v1h-2zM292 328h2v1h-2zM747 330h3v1h-3zM746 332h5v1h-5zM291 336h2v1h-2zM291 338h2v1h-2zM291 340h2v1h-2zM290 346h2v1h-2zM290 348h2v1h-2zM290 350h2v1h-2zM290 352h2v1h-2zM289 356h2v1h-2zM289 358h2v1h-2zM289 360h2v1h-2zM289 362h2v1h-2zM289 364h2v1h-2zM288 366h2v1h-2zM288 368h2v1h-2zM288 370h2v1h-2zM288 372h2v1h-2zM288 374h2v1h-2zM287 378h2v1h-2zM287 380h2v1h-2zM287 382h2v1h-2zM287 384h2v1h-2zM286 390h2v1h-2zM286 392h2v1h-2zM286 394h2v1h-2zM286 396h2v1h-2zM436 400h3v1h-3zM441 400h5v1h-5zM448 400h3v1h-3zM285 402h2v1h-2zM285 404h2v1h-2zM439 405h2v1h-2zM446 405h2v1h-2zM285 406h2v1h-2zM441 406h5v1h-5zM439 410h9v1h-9zM284 414h2v1h-2zM284 416h2v1h-2zM283 426h2v1h-2zM398 438h5v1h-5zM403 439h2v1h-2zM403 453h2v1h-2zM398 454h5v1h-5zM277 469h3v1h-3zM277 473h3v1h-3zM274 476h2v1h-2zM281 476h2v1h-2zM276 477h5v1h-5zM274 481h9v1h-9zM292 565h3v1h-3zM290 569h2v1h-2zM71 154v1h1v-1zM71 158v3h1v-3zM72 153v1h1v-1zM72 157v1h1v-1zM72 161v1h1v-1zM73 152v1h1v-1zM76 157v1h1v-1zM76 161v1h1v-1zM76 163v1h1v-1zM77 158v3h1v-3zM81 154v3h1v-3zM82 151v1h1v-1zM82 153v1h1v-1zM82 157v1h1v-1zM85 162v1h1v-1zM86 153v1h1v-1zM86 157v1h1v-1zM86 161v1h1v-1zM87 154v3h1v-3zM87 160v1h1v-1zM212 185v1h1v-1zM213 186v2h1v-2zM215 189v1h1v-1zM216 190v1h1v-1zM217 192v1h1v-1zM219 195v1h1v-1zM220 196v1h1v-1zM222 198v2h1v-2zM223 200v1h1v-1zM224 201v1h1v-1zM225 200v1h1v-1zM225 202v2h1v-2zM226 201v1h1v-1zM226 204v1h1v-1zM227 203v1h1v-1zM227 205v1h1v-1zM228 206v2h1v-2zM229 205v1h1v-1zM229 208v1h1v-1zM230 206v1h1v-1zM230 209v1h1v-1zM231 210v2h1v-2zM232 212v1h1v-1zM233 213v1h1v-1zM234 214v2h1v-2zM235 212v1h1v-1zM235 216v1h1v-1zM236 213v1h1v-1zM236 217v1h1v-1zM237 215v1h1v-1zM237 218v2h1v-2zM238 220v1h1v-1zM239 221v1h1v-1zM240 217v2h1v-2zM240 222v2h1v-2zM241 224v1h1v-1zM242 225v1h1v-1zM243 226v2h1v-2zM244 228v1h1v-1zM245 224v1h1v-1zM245 229v1h1v-1zM246 225v1h1v-1zM246 230v2h1v-2zM247 227v1h1v-1zM247 232v1h1v-1zM248 233v1h1v-1zM249 234v2h1v-2zM250 229v2h1v-2zM250 236v1h1v-1zM251 237v1h1v-1zM252 238v2h1v-2zM253 240v1h1v-1zM254 241v1h1v-1zM255 236v1h1v-1zM255 242v2h1v-2zM256 244v1h1v-1zM257 237v1h1v-1zM257 239v1h1v-1zM257 245v1h1v-1zM258 246v2h1v-2zM259 248v1h1v-1zM260 241v2h1v-2zM260 249v1h1v-1zM261 250v2h1v-2zM262 245v1h1v-1zM262 252v1h1v-1zM263 253v1h1v-1zM264 245v1h1v-1zM264 254v2h1v-2zM265 248v1h1v-1zM265 256v1h1v-1zM266 257v1h1v-1zM267 249v1h1v-1zM267 251v1h1v-1zM267 258v2h1v-2zM268 260v1h1v-1zM269 261v1h1v-1zM270 254v1h1v-1zM270 262v2h1v-2zM271 253v1h1v-1zM271 264v1h1v-1zM272 257v1h1v-1zM272 265v1h1v-1zM272 469v5h1v-5zM273 266v2h1v-2zM273 474v2h1v-2zM274 257v1h1v-1zM274 268v1h1v-1zM275 260v1h1v-1zM275 269v1h1v-1zM276 270v2h1v-2zM276 470v3h1v-3zM277 261v1h1v-1zM277 272v1h1v-1zM278 263v1h1v-1zM278 273v1h1v-1zM278 478v3h1v-3zM278 482v4h1v-4zM278 553v1h1v-1zM279 274v2h1v-2zM279 554v1h1v-1zM280 266v1h1v-1zM280 276v1h1v-1zM280 470v3h1v-3zM280 555v13h1v-13zM281 265v1h1v-1zM281 277v1h1v-1zM281 554v1h1v-1zM282 278v2h1v-2zM282 438v1h1v-1zM282 440v1h1v-1zM282 442v1h1v-1zM282 448v1h1v-1zM282 553v1h1v-1zM283 280v1h1v-1zM283 428v1h1v-1zM283 430v1h1v-1zM283 432v1h1v-1zM283 434v1h1v-1zM283 436v1h1v-1zM283 474v2h1v-2zM283 554v1h1v-1zM284 281v1h1v-1zM284 418v1h1v-1zM284 420v1h1v-1zM284 422v1h1v-1zM284 424v1h1v-1zM284 469v5h1v-5zM284 555v13h1v-13zM285 272v1h1v-1zM285 282v2h1v-2zM285 408v1h1v-1zM285 410v1h1v-1zM285 412v1h1v-1zM285 554v1h1v-1zM286 284v1h1v-1zM286 398v1h1v-1zM286 400v1h1v-1zM286 553v1h1v-1zM287 285v1h1v-1zM287 386v1h1v-1zM287 388v1h1v-1zM287 554v1h1v-1zM288 273v1h1v-1zM288 275v1h1v-1zM288 286v2h1v-2zM288 376v1h1v-1zM288 555v13h1v-13zM289 288v1h1v-1zM289 354v1h1v-1zM289 568v1h1v-1zM290 278v1h1v-1zM290 289v1h1v-1zM290 342v1h1v-1zM290 344v1h1v-1zM291 277v1h1v-1zM291 290v2h1v-2zM291 330v1h1v-1zM291 332v1h1v-1zM291 334v1h1v-1zM291 354v1h1v-1zM292 292v1h1v-1zM292 318v1h1v-1zM292 320v1h1v-1zM292 322v1h1v-1zM292 324v1h1v-1zM292 342v1h1v-1zM292 344v1h1v-1zM292 568v1h1v-1zM293 281v1h1v-1zM293 293v1h1v-1zM293 306v1h1v-1zM293 308v1h1v-1zM293 310v1h1v-1zM293 312v1h1v-1zM293 314v1h1v-1zM293 330v1h1v-1zM293 332v1h1v-1zM293 334v1h1v-1zM293 564v1h1v-1zM293 566v2h1v-2zM294 294v2h1v-2zM294 298v1h1v-1zM294 300v1h1v-1zM294 302v1h1v-1zM294 304v1h1v-1zM294 318v1h1v-1zM294 320v1h1v-1zM294 322v1h1v-1zM294 324v1h1v-1zM295 281v2h1v-2zM295 284v1h1v-1zM295 286v1h1v-1zM295 288v1h1v-1zM295 290v1h1v-1zM295 292v1h1v-1zM295 306v1h1v-1zM295 308v1h1v-1zM295 310v1h1v-1zM295 312v1h1v-1zM295 314v1h1v-1zM296 270v1h1v-1zM296 272v1h1v-1zM296 274v1h1v-1zM296 276v1h1v-1zM296 278v1h1v-1zM296 280v1h1v-1zM296 294v1h1v-1zM296 297v1h1v-1zM296 300v1h1v-1zM296 302v1h1v-1zM296 304v1h1v-1zM297 258v1h1v-1zM297 260v1h1v-1zM297 262v1h1v-1zM297 264v1h1v-1zM297 266v1h1v-1zM297 268v1h1v-1zM297 284v1h1v-1zM297 286v1h1v-1zM297 288v1h1v-1zM297 290v1h1v-1zM297 292v1h1v-1zM297 299v1h1v-1zM298 246v1h1v-1zM298 248v1h1v-1zM298 250v1h1v-1zM298 252v1h1v-1zM298 254v1h1v-1zM298 256v1h1v-1zM298 274v1h1v-1zM298 276v1h1v-1zM298 278v1h1v-1zM298 280v1h1v-1zM298 282v1h1v-1zM298 285v1h1v-1zM298 287v1h1v-1zM298 300v1h1v-1zM299 234v1h1v-1zM299 236v1h1v-1zM299 238v1h1v-1zM299 240v1h1v-1zM299 242v1h1v-1zM299 244v1h1v-1zM299 264v1h1v-1zM299 266v1h1v-1zM299 268v1h1v-1zM299 270v1h1v-1zM299 272v1h1v-1zM299 301v2h1v-2zM300 222v1h1v-1zM300 224v1h1v-1zM300 226v1h1v-1zM300 230v1h1v-1zM300 232v1h1v-1zM300 254v1h1v-1zM300 256v1h1v-1zM300 258v1h1v-1zM300 260v1h1v-1zM300 262v1h1v-1zM300 290v1h1v-1zM300 303v1h1v-1zM301 210v1h1v-1zM301 212v1h1v-1zM301 214v1h1v-1zM301 216v1h1v-1zM301 218v1h1v-1zM301 220v1h1v-1zM301 244v1h1v-1zM301 246v1h1v-1zM301 248v1h1v-1zM301 250v1h1v-1zM301 252v1h1v-1zM301 304v1h1v-1zM302 198v1h1v-1zM302 200v1h1v-1zM302 202v1h1v-1zM302 204v1h1v-1zM302 206v1h1v-1zM302 208v1h1v-1zM302 234v1h1v-1zM302 236v1h1v-1zM302 238v1h1v-1zM302 240v1h1v-1zM302 242v1h1v-1zM302 289v1h1v-1zM302 305v2h1v-2zM303 186v1h1v-1zM303 188v1h1v-1zM303 190v1h1v-1zM303 192v1h1v-1zM303 194v1h1v-1zM303 196v1h1v-1zM303 224v1h1v-1zM303 226v1h1v-1zM303 228v1h1v-1zM303 230v1h1v-1zM303 232v1h1v-1zM303 293v1h1v-1zM303 307v1h1v-1zM304 174v1h1v-1zM304 176v1h1v-1zM304 178v1h1v-1zM304 180v1h1v-1zM304 182v1h1v-1zM304 184v1h1v-1zM304 214v1h1v-1zM304 216v1h1v-1zM304 218v1h1v-1zM304 220v1h1v-1zM304 222v1h1v-1zM304 308v1h1v-1zM305 162v1h1v-1zM305 164v1h1v-1zM305 166v1h1v-1zM305 168v1h1v-1zM305 170v1h1v-1zM305 172v1h1v-1zM305 202v1h1v-1zM305 204v1h1v-1zM305 206v1h1v-1zM305 208v1h1v-1zM305 210v1h1v-1zM305 212v1h1v-1zM305 293v1h1v-1zM305 296v1h1v-1zM305 309v2h1v-2zM306 158v1h1v-1zM306 160v1h1v-1zM306 192v1h1v-1zM306 194v1h1v-1zM306 196v1h1v-1zM306 198v1h1v-1zM306 200v1h1v-1zM306 311v1h1v-1zM307 182v1h1v-1zM307 184v1h1v-1zM307 186v1h1v-1zM307 188v1h1v-1zM307 190v1h1v-1zM307 312v1h1v-1zM308 172v1h1v-1zM308 174v1h1v-1zM308 176v1h1v-1zM308 178v1h1v-1zM308 180v1h1v-1zM308 299v1h1v-1zM308 313v2h1v-2zM309 164v1h1v-1zM309 166v1h1v-1zM309 168v1h1v-1zM309 170v1h1v-1zM309 297v1h1v-1zM309 315v1h1v-1zM310 158v1h1v-1zM310 302v1h1v-1zM310 316v1h1v-1zM311 317v2h1v-2zM312 301v1h1v-1zM312 319v1h1v-1zM313 305v1h1v-1zM313 320v1h1v-1zM314 321v2h1v-2zM315 305v1h1v-1zM315 308v1h1v-1zM315 323v1h1v-1zM316 324v1h1v-1zM317 325v2h1v-2zM318 311v1h1v-1zM318 327v1h1v-1zM319 309v1h1v-1zM319 328v1h1v-1zM320 314v1h1v-1zM320 329v2h1v-2zM321 331v1h1v-1zM322 313v1h1v-1zM322 332v1h1v-1zM323 317v1h1v-1zM323 333v2h1v-2zM324 335v1h1v-1zM325 320v1h1v-1zM325 336v1h1v-1zM326 317v1h1v-1zM326 337v2h1v-2zM327 339v1h1v-1zM328 323v1h1v-1zM328 340v1h1v-1zM329 321v1h1v-1zM329 341v2h1v-2zM330 326v1h1v-1zM330 343v1h1v-1zM331 344v1h1v-1zM332 345v2h1v-2zM333 325v1h1v-1zM333 329v1h1v-1zM333 347v1h1v-1zM334 348v1h1v-1zM335 349v2h1v-2zM336 329v1h1v-1zM336 332v1h1v-1zM336 351v1h1v-1zM337 352v1h1v-1zM338 335v1h1v-1zM338 353v2h1v-2zM339 355v1h1v-1zM340 333v1h1v-1zM340 356v1h1v-1zM341 338v1h1v-1zM341 357v2h1v-2zM342 359v1h1v-1zM343 337v1h1v-1zM343 341v1h1v-1zM343 360v1h1v-1zM344 361v2h1v-2zM345 363v1h1v-1zM346 341v1h1v-1zM346 344v1h1v-1zM346 364v1h1v-1zM347 365v2h1v-2zM348 347v1h1v-1zM348 367v1h1v-1zM349 368v1h1v-1zM350 345v1h1v-1zM350 369v2h1v-2zM351 350v1h1v-1zM351 371v1h1v-1zM352 372v1h1v-1zM353 349v1h1v-1zM353 353v1h1v-1zM353 373v2h1v-2zM354 375v1h1v-1zM355 376v1h1v-1zM356 356v1h1v-1zM356 377v2h1v-2zM357 353v1h1v-1zM357 379v1h1v-1zM358 359v1h1v-1zM358 380v1h1v-1zM359 381v2h1v-2zM360 357v1h1v-1zM360 383v1h1v-1zM361 362v1h1v-1zM361 384v1h1v-1zM362 385v2h1v-2zM363 365v1h1v-1zM363 387v1h1v-1zM364 361v1h1v-1zM364 388v1h1v-1zM365 389v2h1v-2zM366 368v1h1v-1zM366 391v1h1v-1zM367 365v1h1v-1zM367 392v1h1v-1zM368 371v1h1v-1zM368 393v2h1v-2zM369 395v1h1v-1zM370 396v1h1v-1zM371 369v1h1v-1zM371 374v1h1v-1zM371 397v2h1v-2zM372 399v1h1v-1zM373 377v1h1v-1zM373 400v1h1v-1zM374 373v1h1v-1zM374 401v2h1v-2zM375 403v1h1v-1zM376 380v1h1v-1zM376 404v1h1v-1zM377 377v1h1v-1zM377 405v2h1v-2zM378 383v1h1v-1zM378 407v1h1v-1zM379 408v1h1v-1zM380 409v2h1v-2zM381 381v1h1v-1zM381 386v1h1v-1zM381 411v1h1v-1zM382 412v1h1v-1zM383 389v1h1v-1zM383 413v2h1v-2zM384 385v1h1v-1zM384 415v1h1v-1zM386 392v1h1v-1zM388 389v1h1v-1zM388 395v1h1v-1zM388 419v1h1v-1zM391 393v1h1v-1zM391 398v1h1v-1zM393 401v1h1v-1zM395 397v1h1v-1zM396 440v1h1v-1zM396 452v1h1v-1zM397 439v1h1v-1zM397 441v1h1v-1zM397 451v1h1v-1zM397 453v1h1v-1zM398 401v1h1v-1zM398 442v1h1v-1zM398 450v1h1v-1zM399 443v2h1v-2zM399 448v2h1v-2zM400 445v3h1v-3zM405 440v1h1v-1zM405 452v1h1v-1zM406 441v1h1v-1zM406 451v1h1v-1zM407 442v2h1v-2zM407 449v2h1v-2zM408 444v5h1v-5zM417 391v1h1v-1zM437 398v2h1v-2zM437 401v2h1v-2zM438 403v2h1v-2zM443 398v2h1v-2zM443 401v5h1v-5zM443 407v3h1v-3zM443 411v4h1v-4zM448 403v2h1v-2zM449 398v2h1v-2zM449 401v2h1v-2zM525 172v1h1v-1zM525 188v1h1v-1zM526 173v1h1v-1zM526 187v1h1v-1zM527 174v1h1v-1zM527 186v1h1v-1zM528 175v2h1v-2zM528 184v2h1v-2zM529 177v3h1v-3zM529 181v3h1v-3zM537 177v3h1v-3zM537 181v3h1v-3zM538 175v2h1v-2zM538 184v2h1v-2zM539 174v1h1v-1zM539 186v1h1v-1zM540 173v1h1v-1zM540 187v1h1v-1zM541 172v1h1v-1zM541 188v1h1v-1zM744 136v1h1v-1zM744 176v1h1v-1zM744 184v1h1v-1zM744 219v1h1v-1zM744 221v2h1v-2zM745 137v7h1v-7zM745 177v1h1v-1zM745 183v1h1v-1zM745 247v1h1v-1zM745 253v1h1v-1zM745 316v1h1v-1zM745 318v1h1v-1zM745 326v3h1v-3zM746 136v1h1v-1zM746 178v2h1v-2zM746 181v2h1v-2zM746 248v1h1v-1zM746 252v1h1v-1zM746 319v1h1v-1zM746 329v1h1v-1zM747 137v7h1v-7zM747 221v2h1v-2zM747 249v3h1v-3zM747 327v1h1v-1zM748 136v1h1v-1zM748 316v1h1v-1zM748 318v2h1v-2zM748 321v1h1v-1zM748 323v2h1v-2zM748 326v1h1v-1zM748 328v1h1v-1zM748 331v1h1v-1zM748 333v2h1v-2zM749 137v7h1v-7zM749 219v2h1v-2zM749 327v1h1v-1zM750 178v2h1v-2zM750 181v2h1v-2zM750 248v1h1v-1zM750 252v1h1v-1zM750 319v1h1v-1zM750 329v1h1v-1zM751 177v1h1v-1zM751 183v1h1v-1zM751 249v3h1v-3zM751 316v1h1v-1zM751 318v1h1v-1zM751 326v3h1v-3zM752 142v2h1v-2zM752 176v1h1v-1zM752 184v1h1v-1zM752 219v2h1v-2zM752 222v1h1v-1z"/><path fill="#00ffff" d="M409 388h2v1h-2zM407 389h2v1h-2zM404 390h3v1h-3zM402 391h2v1h-2zM399 392h3v1h-3zM397 393h2v1h-2zM394 394h3v1h-3zM392 395h3v1h-3zM390 396h2v1h-2zM388 397h2v1h-2zM385 398h3v1h-3zM383 399h2v1h-2zM381 400h2v1h-2zM378 401h3v1h-3zM376 402h2v1h-2zM373 403h2v1h-2zM371 404h2v1h-2zM369 405h2v1h-2zM366 406h3v1h-3zM364 407h2v1h-2zM362 408h2v1h-2zM359 409h3v1h-3zM357 410h2v1h-2zM355 411h2v1h-2zM352 412h3v1h-3zM350 413h2v1h-2zM347 414h3v1h-3zM345 415h2v1h-2zM343 416h2v1h-2zM340 417h3v1h-3zM338 418h2v1h-2zM336 419h2v1h-2zM333 420h3v1h-3zM331 421h2v1h-2zM329 422h2v1h-2zM326 423h3v1h-3zM324 424h2v1h-2zM321 425h3v1h-3zM319 426h2v1h-2zM317 427h2v1h-2zM314 428h3v1h-3zM312 429h2v1h-2zM310 430h2v1h-2zM307 431h3v1h-3zM305 432h2v1h-2zM303 433h2v1h-2zM300 434h3v1h-3zM298 435h2v1h-2zM295 436h3v1h-3zM293 437h2v1h-2zM291 438h2v1h-2zM288 439h3v1h-3zM286 440h2v1h-2zM284 441h2v1h-2zM283 442v1h1v-1zM385 412v1h1v-1zM387 409v1h1v-1zM388 406v1h1v-1zM390 403v1h1v-1zM391 400v1h1v-1zM393 397v1h1v-1zM396 391v1h1v-1zM397 388v1h1v-1zM399 385v1h1v-1zM400 382v1h1v-1zM402 379v1h1v-1zM403 376v1h1v-1zM405 373v1h1v-1zM406 370v1h1v-1zM408 367v1h1v-1zM409 364v1h1v-1zM411 361v1h1v-1zM411 387v1h1v-1zM412 358v1h1v-1zM414 355v1h1v-1zM415 352v1h1v-1zM417 349v1h1v-1zM418 346v1h1v-1zM420 343v1h1v-1zM421 340v1h1v-1zM423 337v1h1v-1zM424 334v1h1v-1zM426 331v1h1v-1zM427 328v1h1v-1zM429 325v1h1v-1zM430 322v1h1v-1zM432 319v1h1v-1zM433 316v1h1v-1zM435 313v1h1v-1zM436 310v1h1v-1zM438 307v1h1v-1zM439 304v1h1v-1zM441 301v1h1v-1zM442 298v1h1v-1z"/><path fill="#ffffff" d="M286 15h27v1h-27zM272 16h14v1h-14zM313 16h14v1h-14zM263 17h9v1h-9zM327 17h9v1h-9zM256 18h7v1h-7zM336 18h7v1h-7zM250 19h6v1h-6zM343 19h6v1h-6zM245 20h5v1h-5zM349 20h5v1h-5zM240 21h5v1h-5zM354 21h5v1h-5zM235 22h6v1h-6zM359 22h5v1h-5zM231 23h4v1h-4zM364 23h4v1h-4zM227 24h4v1h-4zM368 24h4v1h-4zM224 25h3v1h-3zM372 25h3v1h-3zM220 26h4v1h-4zM375 26h4v1h-4zM217 27h3v1h-3zM379 27h3v1h-3zM214 28h3v1h-3zM382 28h3v1h-3zM210 29h4v1h-4zM385 29h4v1h-4zM207 30h3v1h-3zM389 30h3v1h-3zM205 31h2v1h-2zM392 31h2v1h-2zM202 32h3v1h-3zM394 32h3v1h-3zM199 33h3v1h-3zM397 33h3v1h-3zM197 34h2v1h-2zM400 34h2v1h-2zM194 35h3v1h-3zM402 35h3v1h-3zM192 36h2v1h-2zM405 36h2v1h-2zM189 37h3v1h-3zM407 37h3v1h-3zM187 38h2v1h-2zM410 38h2v1h-2zM185 39h2v1h-2zM412 39h2v1h-2zM182 40h3v1h-3zM414 40h3v1h-3zM180 41h2v1h-2zM417 41h2v1h-2zM178 42h2v1h-2zM419 42h2v1h-2zM176 43h2v1h-2zM421 43h2v1h-2zM174 44h2v1h-2zM423 44h2v1h-2zM172 45h2v1h-2zM425 45h2v1h-2zM170 46h2v1h-2zM427 46h2v1h-2zM168 47h2v1h-2zM429 47h2v1h-2zM166 48h2v1h-2zM431 48h2v1h-2zM164 49h2v1h-2zM433 49h2v1h-2zM162 50h2v1h-2zM435 50h2v1h-2zM159 52h2v1h-2zM438 52h2v1h-2zM157 53h2v1h-2zM440 53h2v1h-2zM155 54h2v1h-2zM442 54h2v1h-2zM152 56h2v1h-2zM445 56h2v1h-2zM150 57h2v1h-2zM447 57h2v1h-2zM147 59h2v1h-2zM450 59h2v1h-2zM287 60h25v1h-25zM144 61h2v1h-2zM274 61h13v1h-13zM311 61h14v1h-14zM453 61h2v1h-2zM266 62h8v1h-8zM325 62h8v1h-8zM141 63h2v1h-2zM260 63h6v1h-6zM333 63h6v1h-6zM456 63h2v1h-2zM254 64h6v1h-6zM339 64h6v1h-6zM138 65h2v1h-2zM249 65h5v1h-5zM345 65h5v1h-5zM459 65h2v1h-2zM245 66h4v1h-4zM350 66h4v1h-4zM135 67h2v1h-2zM241 67h4v1h-4zM354 67h4v1h-4zM462 67h2v1h-2zM237 68h4v1h-4zM358 68h4v1h-4zM132 69h2v1h-2zM233 69h4v1h-4zM362 69h4v1h-4zM465 69h2v1h-2zM230 70h3v1h-3zM366 70h3v1h-3zM227 71h3v1h-3zM369 71h4v1h-4zM128 72h2v1h-2zM224 72h3v1h-3zM372 72h3v1h-3zM469 72h2v1h-2zM221 73h3v1h-3zM375 73h3v1h-3zM218 74h3v1h-3zM378 74h3v1h-3zM215 75h3v1h-3zM287 75h25v1h-25zM381 75h3v1h-3zM123 76h2v1h-2zM213 76h2v1h-2zM275 76h12v1h-12zM312 76h12v1h-12zM384 76h2v1h-2zM474 76h2v1h-2zM210 77h3v1h-3zM267 77h8v1h-8zM324 77h8v1h-8zM386 77h3v1h-3zM208 78h3v1h-3zM261 78h6v1h-6zM332 78h6v1h-6zM389 78h2v1h-2zM205 79h3v1h-3zM256 79h5v1h-5zM338 79h5v1h-5zM391 79h3v1h-3zM118 80h2v1h-2zM203 80h2v1h-2zM251 80h5v1h-5zM343 80h5v1h-5zM394 80h2v1h-2zM479 80h2v1h-2zM201 81h2v1h-2zM247 81h4v1h-4zM348 81h4v1h-4zM396 81h2v1h-2zM199 82h2v1h-2zM243 82h4v1h-4zM352 82h4v1h-4zM398 82h2v1h-2zM197 83h2v1h-2zM239 83h4v1h-4zM356 83h4v1h-4zM400 83h2v1h-2zM194 84h3v1h-3zM236 84h3v1h-3zM360 84h3v1h-3zM402 84h3v1h-3zM112 85h2v1h-2zM192 85h2v1h-2zM232 85h4v1h-4zM363 85h4v1h-4zM405 85h2v1h-2zM485 85h2v1h-2zM190 86h2v1h-2zM229 86h3v1h-3zM367 86h3v1h-3zM407 86h2v1h-2zM226 87h3v1h-3zM370 87h3v1h-3zM187 88h2v1h-2zM223 88h3v1h-3zM373 88h3v1h-3zM410 88h2v1h-2zM108 89h2v1h-2zM185 89h2v1h-2zM221 89h2v1h-2zM376 89h2v1h-2zM412 89h2v1h-2zM183 90h2v1h-2zM218 90h3v1h-3zM378 90h3v1h-3zM414 90h2v1h-2zM181 91h2v1h-2zM215 91h3v1h-3zM381 91h2v1h-2zM416 91h2v1h-2zM213 92h3v1h-3zM383 92h4v1h-4zM178 93h2v1h-2zM211 93h2v1h-2zM386 93h2v1h-2zM419 93h2v1h-2zM176 94h2v1h-2zM209 94h2v1h-2zM388 94h2v1h-2zM421 94h2v1h-2zM174 95h2v1h-2zM206 95h3v1h-3zM390 95h3v1h-3zM423 95h2v1h-2zM204 96h2v1h-2zM393 96h2v1h-2zM171 97h3v1h-3zM202 97h2v1h-2zM395 97h2v1h-2zM426 97h2v1h-2zM200 98h2v1h-2zM397 98h2v1h-2zM168 99h2v1h-2zM197 99h3v1h-3zM399 99h2v1h-2zM428 99h3v1h-3zM196 100h2v1h-2zM401 100h2v1h-2zM165 101h2v1h-2zM194 101h2v1h-2zM403 101h2v1h-2zM432 101h2v1h-2zM192 102h2v1h-2zM405 102h2v1h-2zM162 103h2v1h-2zM435 103h2v1h-2zM189 104h2v1h-2zM408 104h2v1h-2zM187 105h2v1h-2zM288 105h23v1h-23zM410 105h2v1h-2zM158 106h2v1h-2zM185 106h3v1h-3zM277 106h11v1h-11zM311 106h11v1h-11zM412 106h2v1h-2zM439 106h2v1h-2zM270 107h7v1h-7zM322 107h7v1h-7zM155 108h2v1h-2zM182 108h2v1h-2zM264 108h6v1h-6zM329 108h6v1h-6zM415 108h2v1h-2zM442 108h2v1h-2zM154 109h2v1h-2zM180 109h2v1h-2zM259 109h5v1h-5zM335 109h5v1h-5zM417 109h2v1h-2zM509 109h2v1h-2zM254 110h5v1h-5zM340 110h5v1h-5zM177 111h2v1h-2zM250 111h4v1h-4zM345 111h4v1h-4zM420 111h2v1h-2zM445 111h2v1h-2zM150 112h2v1h-2zM247 112h3v1h-3zM349 112h3v1h-3zM447 112h2v1h-2zM174 113h2v1h-2zM243 113h4v1h-4zM352 113h4v1h-4zM423 113h2v1h-2zM240 114h3v1h-3zM356 114h3v1h-3zM503 114h2v1h-2zM171 115h2v1h-2zM237 115h3v1h-3zM359 115h3v1h-3zM426 115h2v1h-2zM145 116h2v1h-2zM234 116h3v1h-3zM362 116h3v1h-3zM452 116h2v1h-2zM231 117h3v1h-3zM365 117h3v1h-3zM167 118h2v1h-2zM229 118h2v1h-2zM368 118h2v1h-2zM430 118h2v1h-2zM226 119h3v1h-3zM370 119h3v1h-3zM164 120h2v1h-2zM224 120h2v1h-2zM373 120h2v1h-2zM433 120h2v1h-2zM222 121h2v1h-2zM375 121h2v1h-2zM219 122h3v1h-3zM377 122h3v1h-3zM436 122h2v1h-2zM217 123h2v1h-2zM380 123h2v1h-2zM493 123h2v1h-2zM136 124h2v1h-2zM159 124h2v1h-2zM215 124h2v1h-2zM382 124h2v1h-2zM438 124h2v1h-2zM461 124h2v1h-2zM213 125h2v1h-2zM384 125h2v1h-2zM211 126h2v1h-2zM386 126h2v1h-2zM209 127h2v1h-2zM388 127h2v1h-2zM154 128h2v1h-2zM207 128h2v1h-2zM390 128h2v1h-2zM443 128h2v1h-2zM205 129h2v1h-2zM392 129h2v1h-2zM201 131h3v1h-3zM395 131h2v1h-2zM149 132h2v1h-2zM200 132h2v1h-2zM397 132h2v1h-2zM482 133h2v1h-2zM197 134h2v1h-2zM324 134h2v1h-2zM400 134h2v1h-2zM195 135h2v1h-2zM402 135h2v1h-2zM451 135h2v1h-2zM124 137h2v1h-2zM192 137h2v1h-2zM320 137h2v1h-2zM405 137h3v1h-3zM143 138h2v1h-2zM454 138h2v1h-2zM189 139h2v1h-2zM408 139h2v1h-2zM316 140h2v1h-2zM130 142h2v1h-2zM185 142h2v1h-2zM412 142h2v1h-2zM312 143h2v1h-2zM182 144h2v1h-2zM415 144h2v1h-2zM135 146h2v1h-2zM177 148h2v1h-2zM420 148h2v1h-2zM465 149h2v1h-2zM110 153h2v1h-2zM171 153h2v1h-2zM426 153h2v1h-2zM112 154h2v1h-2zM489 155h2v1h-2zM116 157h2v1h-2zM486 157h2v1h-2zM120 160h2v1h-2zM122 161h2v1h-2zM480 162h2v1h-2zM98 170h2v1h-2zM100 171h2v1h-2zM103 173h2v1h-2zM501 173h2v1h-2zM105 174h2v1h-2zM499 174h2v1h-2zM497 175h2v1h-2zM108 176h2v1h-2zM495 176h2v1h-2zM110 177h2v1h-2zM492 178h2v1h-2zM490 179h2v1h-2zM89 189h2v1h-2zM91 190h2v1h-2zM93 191h2v1h-2zM105 191h2v1h-2zM510 191h3v1h-3zM95 192h2v1h-2zM107 192h2v1h-2zM508 192h2v1h-2zM97 193h2v1h-2zM109 193h2v1h-2zM506 193h2v1h-2zM99 194h3v1h-3zM111 194h2v1h-2zM504 194h2v1h-2zM502 195h2v1h-2zM114 196h2v1h-2zM500 196h2v1h-2zM116 197h2v1h-2zM498 197h2v1h-2zM118 198h2v1h-2zM121 200h2v1h-2zM499 200h2v1h-2zM123 201h2v1h-2zM497 201h2v1h-2zM125 202h2v1h-2zM495 202h2v1h-2zM127 203h2v1h-2zM493 203h2v1h-2zM129 204h2v1h-2zM491 204h2v1h-2zM489 205h2v1h-2zM79 206h2v1h-2zM487 206h2v1h-2zM81 207h2v1h-2zM485 207h2v1h-2zM83 208h2v1h-2zM483 208h2v1h-2zM85 209h2v1h-2zM481 209h2v1h-2zM87 210h2v1h-2zM479 210h2v1h-2zM519 210h3v1h-3zM89 211h2v1h-2zM477 211h2v1h-2zM517 211h2v1h-2zM29 212h3v1h-3zM91 212h3v1h-3zM475 212h2v1h-2zM514 212h3v1h-3zM32 213h3v1h-3zM473 213h2v1h-2zM511 213h3v1h-3zM35 214h3v1h-3zM509 214h2v1h-2zM38 215h3v1h-3zM506 215h3v1h-3zM41 216h3v1h-3zM44 217h3v1h-3zM47 218h3v1h-3zM50 219h2v1h-2zM52 220h3v1h-3zM55 221h3v1h-3zM58 222h3v1h-3zM61 223h3v1h-3zM64 224h3v1h-3zM67 225h3v1h-3zM70 226h4v1h-4zM74 227h3v1h-3zM77 228h4v1h-4zM81 229h3v1h-3zM526 229h2v1h-2zM84 230h3v1h-3zM523 230h3v1h-3zM519 231h4v1h-4zM516 232h3v1h-3zM513 233h3v1h-3zM574 240h4v1h-4zM569 241h5v1h-5zM565 242h4v1h-4zM560 243h5v1h-5zM555 244h5v1h-5zM551 245h4v1h-4zM66 246h4v1h-4zM546 246h5v1h-5zM70 247h4v1h-4zM541 247h5v1h-5zM74 248h4v1h-4zM537 248h4v1h-4zM78 249h4v1h-4zM533 249h4v1h-4zM529 250h5v1h-5zM523 251h6v1h-6zM518 252h5v1h-5zM62 267h8v1h-8zM70 268h8v1h-8zM533 270h4v1h-4zM526 271h7v1h-7zM521 272h5v1h-5zM60 287h8v1h-8zM68 288h8v1h-8zM523 291h16v1h-16zM455 297h13v1h-13zM75 299h31v1h-31zM131 299h13v1h-13zM493 299h31v1h-31zM60 307h16v1h-16zM523 310h8v1h-8zM531 311h8v1h-8zM73 326h5v1h-5zM66 327h7v1h-7zM62 328h4v1h-4zM521 330h8v1h-8zM529 331h8v1h-8zM76 346h5v1h-5zM70 347h6v1h-6zM65 348h5v1h-5zM62 349h4v1h-4zM517 349h4v1h-4zM57 350h5v1h-5zM521 350h4v1h-4zM53 351h4v1h-4zM525 351h4v1h-4zM48 352h5v1h-5zM529 352h4v1h-4zM43 353h5v1h-5zM39 354h4v1h-4zM34 355h5v1h-5zM29 356h5v1h-5zM25 357h4v1h-4zM21 358h4v1h-4zM83 365h3v1h-3zM80 366h3v1h-3zM76 367h4v1h-4zM73 368h3v1h-3zM512 368h3v1h-3zM71 369h2v1h-2zM515 369h3v1h-3zM518 370h4v1h-4zM522 371h3v1h-3zM525 372h4v1h-4zM529 373h3v1h-3zM532 374h3v1h-3zM535 375h3v1h-3zM538 376h3v1h-3zM541 377h3v1h-3zM544 378h3v1h-3zM547 379h2v1h-2zM549 380h3v1h-3zM552 381h3v1h-3zM555 382h3v1h-3zM90 383h3v1h-3zM558 383h3v1h-3zM88 384h2v1h-2zM561 384h3v1h-3zM85 385h3v1h-3zM124 385h2v1h-2zM564 385h3v1h-3zM82 386h3v1h-3zM122 386h2v1h-2zM505 386h3v1h-3zM567 386h3v1h-3zM80 387h2v1h-2zM120 387h2v1h-2zM508 387h2v1h-2zM77 388h3v1h-3zM118 388h2v1h-2zM510 388h2v1h-2zM116 389h2v1h-2zM512 389h2v1h-2zM114 390h2v1h-2zM514 390h2v1h-2zM112 391h2v1h-2zM516 391h2v1h-2zM110 392h2v1h-2zM518 392h2v1h-2zM108 393h2v1h-2zM106 394h2v1h-2zM468 394h2v1h-2zM104 395h2v1h-2zM470 395h2v1h-2zM102 396h2v1h-2zM472 396h2v1h-2zM100 397h2v1h-2zM474 397h2v1h-2zM98 398h2v1h-2zM476 398h2v1h-2zM479 400h2v1h-2zM98 401h3v1h-3zM481 401h2v1h-2zM96 402h2v1h-2zM483 402h2v1h-2zM94 403h2v1h-2zM92 404h2v1h-2zM486 404h2v1h-2zM497 404h2v1h-2zM90 405h2v1h-2zM488 405h2v1h-2zM499 405h2v1h-2zM88 406h2v1h-2zM490 406h2v1h-2zM501 406h2v1h-2zM86 407h2v1h-2zM492 407h2v1h-2zM503 407h2v1h-2zM505 408h2v1h-2zM507 409h2v1h-2zM509 410h2v1h-2zM107 419h2v1h-2zM105 420h2v1h-2zM103 421h2v1h-2zM487 421h2v1h-2zM489 422h2v1h-2zM100 423h2v1h-2zM98 424h2v1h-2zM492 424h2v1h-2zM96 425h2v1h-2zM494 425h2v1h-2zM497 427h2v1h-2zM499 428h2v1h-2zM117 436h2v1h-2zM475 437h2v1h-2zM477 438h2v1h-2zM111 441h2v1h-2zM481 441h2v1h-2zM108 443h2v1h-2zM485 444h2v1h-2zM171 445h2v1h-2zM426 445h2v1h-2zM487 445h2v1h-2zM132 449h2v1h-2zM177 450h2v1h-2zM420 450h2v1h-2zM462 452h2v1h-2zM182 454h2v1h-2zM415 454h2v1h-2zM185 456h2v1h-2zM412 456h2v1h-2zM468 457h2v1h-2zM189 459h2v1h-2zM408 459h2v1h-2zM143 460h2v1h-2zM454 460h2v1h-2zM191 461h3v1h-3zM405 461h2v1h-2zM473 461h2v1h-2zM146 463h2v1h-2zM195 463h2v1h-2zM402 463h2v1h-2zM197 464h2v1h-2zM400 464h2v1h-2zM115 465h2v1h-2zM200 466h2v1h-2zM397 466h2v1h-2zM448 466h2v1h-2zM202 467h2v1h-2zM395 467h3v1h-3zM205 469h2v1h-2zM392 469h2v1h-2zM154 470h2v1h-2zM207 470h2v1h-2zM390 470h2v1h-2zM443 470h2v1h-2zM209 471h2v1h-2zM388 471h2v1h-2zM211 472h2v1h-2zM386 472h2v1h-2zM213 473h2v1h-2zM384 473h2v1h-2zM105 474h2v1h-2zM136 474h2v1h-2zM159 474h2v1h-2zM215 474h2v1h-2zM382 474h2v1h-2zM438 474h2v1h-2zM461 474h2v1h-2zM217 475h2v1h-2zM380 475h2v1h-2zM161 476h2v1h-2zM219 476h3v1h-3zM377 476h3v1h-3zM222 477h2v1h-2zM375 477h2v1h-2zM164 478h2v1h-2zM224 478h2v1h-2zM373 478h2v1h-2zM433 478h2v1h-2zM226 479h3v1h-3zM370 479h3v1h-3zM167 480h2v1h-2zM229 480h2v1h-2zM368 480h2v1h-2zM430 480h2v1h-2zM231 481h3v1h-3zM365 481h3v1h-3zM145 482h2v1h-2zM234 482h3v1h-3zM362 482h3v1h-3zM452 482h2v1h-2zM171 483h2v1h-2zM237 483h3v1h-3zM359 483h3v1h-3zM426 483h2v1h-2zM94 484h2v1h-2zM240 484h3v1h-3zM356 484h3v1h-3zM174 485h2v1h-2zM243 485h4v1h-4zM352 485h4v1h-4zM423 485h2v1h-2zM150 486h2v1h-2zM247 486h3v1h-3zM349 486h3v1h-3zM447 486h2v1h-2zM152 487h2v1h-2zM177 487h2v1h-2zM250 487h4v1h-4zM345 487h4v1h-4zM420 487h2v1h-2zM254 488h5v1h-5zM340 488h5v1h-5zM88 489h2v1h-2zM180 489h2v1h-2zM259 489h5v1h-5zM335 489h5v1h-5zM417 489h2v1h-2zM443 489h2v1h-2zM155 490h2v1h-2zM182 490h2v1h-2zM264 490h6v1h-6zM329 490h6v1h-6zM415 490h2v1h-2zM442 490h2v1h-2zM270 491h7v1h-7zM322 491h7v1h-7zM158 492h2v1h-2zM185 492h2v1h-2zM277 492h11v1h-11zM311 492h11v1h-11zM411 492h3v1h-3zM439 492h2v1h-2zM187 493h2v1h-2zM288 493h23v1h-23zM410 493h2v1h-2zM189 494h2v1h-2zM408 494h2v1h-2zM162 495h2v1h-2zM435 495h2v1h-2zM192 496h2v1h-2zM405 496h2v1h-2zM165 497h2v1h-2zM194 497h2v1h-2zM403 497h2v1h-2zM432 497h2v1h-2zM196 498h2v1h-2zM401 498h2v1h-2zM168 499h3v1h-3zM198 499h2v1h-2zM399 499h3v1h-3zM429 499h2v1h-2zM200 500h2v1h-2zM397 500h2v1h-2zM171 501h2v1h-2zM202 501h2v1h-2zM395 501h2v1h-2zM425 501h3v1h-3zM204 502h2v1h-2zM393 502h2v1h-2zM174 503h2v1h-2zM206 503h3v1h-3zM390 503h3v1h-3zM423 503h2v1h-2zM176 504h2v1h-2zM209 504h2v1h-2zM388 504h2v1h-2zM421 504h2v1h-2zM178 505h2v1h-2zM211 505h2v1h-2zM386 505h2v1h-2zM419 505h2v1h-2zM212 506h4v1h-4zM383 506h3v1h-3zM181 507h2v1h-2zM216 507h2v1h-2zM381 507h3v1h-3zM416 507h2v1h-2zM183 508h2v1h-2zM218 508h3v1h-3zM378 508h3v1h-3zM414 508h2v1h-2zM185 509h2v1h-2zM221 509h2v1h-2zM376 509h2v1h-2zM412 509h2v1h-2zM489 509h2v1h-2zM187 510h2v1h-2zM223 510h3v1h-3zM373 510h3v1h-3zM410 510h2v1h-2zM226 511h3v1h-3zM370 511h3v1h-3zM190 512h2v1h-2zM229 512h3v1h-3zM367 512h3v1h-3zM407 512h2v1h-2zM112 513h2v1h-2zM192 513h2v1h-2zM232 513h4v1h-4zM363 513h4v1h-4zM405 513h2v1h-2zM485 513h2v1h-2zM194 514h3v1h-3zM236 514h3v1h-3zM360 514h3v1h-3zM402 514h3v1h-3zM197 515h2v1h-2zM239 515h4v1h-4zM356 515h4v1h-4zM400 515h2v1h-2zM199 516h2v1h-2zM243 516h4v1h-4zM352 516h4v1h-4zM398 516h2v1h-2zM201 517h2v1h-2zM247 517h4v1h-4zM348 517h4v1h-4zM396 517h2v1h-2zM118 518h2v1h-2zM203 518h2v1h-2zM251 518h5v1h-5zM343 518h5v1h-5zM394 518h2v1h-2zM479 518h2v1h-2zM205 519h3v1h-3zM256 519h5v1h-5zM338 519h5v1h-5zM391 519h3v1h-3zM208 520h2v1h-2zM261 520h6v1h-6zM332 520h6v1h-6zM388 520h3v1h-3zM210 521h3v1h-3zM267 521h8v1h-8zM324 521h8v1h-8zM386 521h3v1h-3zM123 522h2v1h-2zM213 522h2v1h-2zM275 522h12v1h-12zM312 522h12v1h-12zM384 522h2v1h-2zM474 522h2v1h-2zM215 523h3v1h-3zM287 523h25v1h-25zM381 523h3v1h-3zM218 524h3v1h-3zM378 524h3v1h-3zM221 525h3v1h-3zM375 525h3v1h-3zM128 526h2v1h-2zM224 526h3v1h-3zM372 526h3v1h-3zM469 526h2v1h-2zM226 527h4v1h-4zM369 527h3v1h-3zM230 528h3v1h-3zM366 528h3v1h-3zM132 529h2v1h-2zM233 529h4v1h-4zM362 529h4v1h-4zM465 529h2v1h-2zM237 530h4v1h-4zM358 530h4v1h-4zM135 531h2v1h-2zM241 531h4v1h-4zM354 531h4v1h-4zM462 531h2v1h-2zM245 532h4v1h-4zM350 532h4v1h-4zM138 533h2v1h-2zM249 533h5v1h-5zM345 533h5v1h-5zM459 533h2v1h-2zM254 534h6v1h-6zM339 534h6v1h-6zM141 535h2v1h-2zM260 535h6v1h-6zM333 535h6v1h-6zM456 535h2v1h-2zM266 536h8v1h-8zM325 536h8v1h-8zM144 537h2v1h-2zM274 537h14v1h-14zM312 537h13v1h-13zM453 537h2v1h-2zM287 538h25v1h-25zM147 539h2v1h-2zM450 539h2v1h-2zM150 541h2v1h-2zM447 541h2v1h-2zM152 542h2v1h-2zM445 542h2v1h-2zM155 544h2v1h-2zM442 544h2v1h-2zM157 545h2v1h-2zM440 545h2v1h-2zM159 546h2v1h-2zM438 546h2v1h-2zM162 548h2v1h-2zM435 548h2v1h-2zM164 549h2v1h-2zM433 549h2v1h-2zM166 550h2v1h-2zM431 550h2v1h-2zM168 551h2v1h-2zM429 551h2v1h-2zM170 552h2v1h-2zM427 552h2v1h-2zM172 553h2v1h-2zM425 553h2v1h-2zM174 554h2v1h-2zM423 554h2v1h-2zM176 555h2v1h-2zM421 555h2v1h-2zM178 556h2v1h-2zM419 556h2v1h-2zM180 557h2v1h-2zM417 557h2v1h-2zM182 558h3v1h-3zM414 558h3v1h-3zM185 559h2v1h-2zM412 559h2v1h-2zM187 560h2v1h-2zM410 560h2v1h-2zM189 561h3v1h-3zM407 561h3v1h-3zM192 562h2v1h-2zM405 562h2v1h-2zM194 563h3v1h-3zM402 563h3v1h-3zM197 564h2v1h-2zM400 564h2v1h-2zM199 565h3v1h-3zM397 565h3v1h-3zM202 566h3v1h-3zM394 566h3v1h-3zM205 567h2v1h-2zM392 567h2v1h-2zM207 568h3v1h-3zM389 568h3v1h-3zM210 569h4v1h-4zM385 569h4v1h-4zM214 570h3v1h-3zM382 570h3v1h-3zM217 571h3v1h-3zM379 571h3v1h-3zM220 572h4v1h-4zM375 572h4v1h-4zM224 573h3v1h-3zM372 573h3v1h-3zM227 574h4v1h-4zM368 574h4v1h-4zM231 575h4v1h-4zM364 575h4v1h-4zM235 576h5v1h-5zM358 576h6v1h-6zM240 577h5v1h-5zM354 577h5v1h-5zM245 578h5v1h-5zM349 578h5v1h-5zM250 579h6v1h-6zM343 579h6v1h-6zM256 580h7v1h-7zM336 580h7v1h-7zM263 581h9v1h-9zM327 581h9v1h-9zM272 582h14v1h-14zM313 582h14v1h-14zM286 583h27v1h-27zM15 286v27h1v-27zM16 272v14h1v-14zM16 313v14h1v-14zM17 263v9h1v-9zM17 327v9h1v-9zM18 256v7h1v-7zM18 336v7h1v-7zM19 250v6h1v-6zM19 343v6h1v-6zM20 245v5h1v-5zM20 349v5h1v-5zM21 240v5h1v-5zM21 354v4h1v-4zM22 235v5h1v-5zM22 359v5h1v-5zM23 231v4h1v-4zM23 364v4h1v-4zM24 227v4h1v-4zM24 368v4h1v-4zM25 224v3h1v-3zM25 372v3h1v-3zM26 220v4h1v-4zM26 375v4h1v-4zM27 217v3h1v-3zM27 379v3h1v-3zM28 214v3h1v-3zM28 382v3h1v-3zM29 210v2h1v-2zM29 213v1h1v-1zM29 385v4h1v-4zM30 207v3h1v-3zM30 389v3h1v-3zM31 205v2h1v-2zM31 392v2h1v-2zM32 202v3h1v-3zM32 394v3h1v-3zM33 199v3h1v-3zM33 397v3h1v-3zM34 197v2h1v-2zM34 400v2h1v-2zM35 194v3h1v-3zM35 402v3h1v-3zM36 192v2h1v-2zM36 405v2h1v-2zM37 189v3h1v-3zM37 407v3h1v-3zM38 187v2h1v-2zM38 410v2h1v-2zM39 185v2h1v-2zM39 412v2h1v-2zM40 182v3h1v-3zM40 414v3h1v-3zM41 180v2h1v-2zM41 417v2h1v-2zM42 178v2h1v-2zM42 419v2h1v-2zM43 176v2h1v-2zM43 421v2h1v-2zM44 174v2h1v-2zM44 423v2h1v-2zM45 172v2h1v-2zM45 425v2h1v-2zM46 170v2h1v-2zM46 427v2h1v-2zM47 168v2h1v-2zM47 429v2h1v-2zM48 166v2h1v-2zM48 431v2h1v-2zM49 164v2h1v-2zM49 433v2h1v-2zM50 162v2h1v-2zM50 435v2h1v-2zM51 161v1h1v-1zM51 437v1h1v-1zM52 159v2h1v-2zM52 438v2h1v-2zM53 157v2h1v-2zM53 440v2h1v-2zM54 155v2h1v-2zM54 442v2h1v-2zM55 154v1h1v-1zM55 444v1h1v-1zM56 152v2h1v-2zM56 445v2h1v-2zM57 150v2h1v-2zM57 447v2h1v-2zM58 149v1h1v-1zM58 449v1h1v-1zM59 147v2h1v-2zM59 450v2h1v-2zM60 146v1h1v-1zM60 288v19h1v-19zM60 308v4h1v-4zM60 452v1h1v-1zM61 144v2h1v-2zM61 274v13h1v-13zM61 312v13h1v-13zM61 453v2h1v-2zM62 143v1h1v-1zM62 266v1h1v-1zM62 268v6h1v-6zM62 325v3h1v-3zM62 329v4h1v-4zM62 455v1h1v-1zM63 141v2h1v-2zM63 260v6h1v-6zM63 333v6h1v-6zM63 456v2h1v-2zM64 140v1h1v-1zM64 254v6h1v-6zM64 339v6h1v-6zM64 458v1h1v-1zM65 138v2h1v-2zM65 249v5h1v-5zM65 345v3h1v-3zM65 459v2h1v-2zM66 137v1h1v-1zM66 245v1h1v-1zM66 247v2h1v-2zM66 350v4h1v-4zM66 461v1h1v-1zM67 135v2h1v-2zM67 241v4h1v-4zM67 354v4h1v-4zM67 462v2h1v-2zM68 134v1h1v-1zM68 237v4h1v-4zM68 358v4h1v-4zM68 464v1h1v-1zM69 132v2h1v-2zM69 233v4h1v-4zM69 362v4h1v-4zM69 465v2h1v-2zM70 131v1h1v-1zM70 230v3h1v-3zM70 366v3h1v-3zM70 467v1h1v-1zM71 130v1h1v-1zM71 227v3h1v-3zM71 370v2h1v-2zM71 468v1h1v-1zM72 128v2h1v-2zM72 224v2h1v-2zM72 372v3h1v-3zM72 469v2h1v-2zM73 127v1h1v-1zM73 221v3h1v-3zM73 375v3h1v-3zM73 471v1h1v-1zM74 126v1h1v-1zM74 218v3h1v-3zM74 378v3h1v-3zM74 472v1h1v-1zM75 125v1h1v-1zM75 215v3h1v-3zM75 287v1h1v-1zM75 289v10h1v-10zM75 300v7h1v-7zM75 308v4h1v-4zM75 381v3h1v-3zM75 473v1h1v-1zM76 123v2h1v-2zM76 213v2h1v-2zM76 275v12h1v-12zM76 312v12h1v-12zM76 384v2h1v-2zM76 474v2h1v-2zM77 122v1h1v-1zM77 210v3h1v-3zM77 267v1h1v-1zM77 269v6h1v-6zM77 324v2h1v-2zM77 327v5h1v-5zM77 386v2h1v-2zM77 476v1h1v-1zM78 121v1h1v-1zM78 208v2h1v-2zM78 261v6h1v-6zM78 332v6h1v-6zM78 389v2h1v-2zM78 477v1h1v-1zM79 120v1h1v-1zM79 205v1h1v-1zM79 207v1h1v-1zM79 256v5h1v-5zM79 338v5h1v-5zM79 391v3h1v-3zM79 478v1h1v-1zM80 118v2h1v-2zM80 203v2h1v-2zM80 251v5h1v-5zM80 343v3h1v-3zM80 347v1h1v-1zM80 394v2h1v-2zM80 479v2h1v-2zM81 117v1h1v-1zM81 201v2h1v-2zM81 247v2h1v-2zM81 250v1h1v-1zM81 348v4h1v-4zM81 396v2h1v-2zM81 481v1h1v-1zM82 116v1h1v-1zM82 199v2h1v-2zM82 243v4h1v-4zM82 352v4h1v-4zM82 398v2h1v-2zM82 482v1h1v-1zM83 115v1h1v-1zM83 197v2h1v-2zM83 239v4h1v-4zM83 356v4h1v-4zM83 400v2h1v-2zM83 483v1h1v-1zM84 114v1h1v-1zM84 194v3h1v-3zM84 236v3h1v-3zM84 360v3h1v-3zM84 402v3h1v-3zM84 484v1h1v-1zM85 112v2h1v-2zM85 192v2h1v-2zM85 232v4h1v-4zM85 363v2h1v-2zM85 366v1h1v-1zM85 405v2h1v-2zM85 485v2h1v-2zM86 111v1h1v-1zM86 190v2h1v-2zM86 229v1h1v-1zM86 231v1h1v-1zM86 367v3h1v-3zM86 408v1h1v-1zM86 487v1h1v-1zM87 110v1h1v-1zM87 189v1h1v-1zM87 226v3h1v-3zM87 370v3h1v-3zM87 409v1h1v-1zM87 488v1h1v-1zM88 109v1h1v-1zM88 187v2h1v-2zM88 223v3h1v-3zM88 373v3h1v-3zM88 410v2h1v-2zM89 108v1h1v-1zM89 185v2h1v-2zM89 221v2h1v-2zM89 376v2h1v-2zM89 412v2h1v-2zM89 490v1h1v-1zM90 107v1h1v-1zM90 183v2h1v-2zM90 218v3h1v-3zM90 378v3h1v-3zM90 414v2h1v-2zM90 488v1h1v-1zM90 491v1h1v-1zM91 106v1h1v-1zM91 181v2h1v-2zM91 216v2h1v-2zM91 381v2h1v-2zM91 416v2h1v-2zM91 487v1h1v-1zM91 492v1h1v-1zM92 105v1h1v-1zM92 180v1h1v-1zM92 213v3h1v-3zM92 384v2h1v-2zM92 418v1h1v-1zM92 486v1h1v-1zM92 493v1h1v-1zM93 104v1h1v-1zM93 178v2h1v-2zM93 211v1h1v-1zM93 386v2h1v-2zM93 419v2h1v-2zM93 485v1h1v-1zM93 494v1h1v-1zM94 103v1h1v-1zM94 176v2h1v-2zM94 209v2h1v-2zM94 388v2h1v-2zM94 421v2h1v-2zM94 495v1h1v-1zM95 102v1h1v-1zM95 174v2h1v-2zM95 206v3h1v-3zM95 390v3h1v-3zM95 423v2h1v-2zM95 496v1h1v-1zM96 101v1h1v-1zM96 173v1h1v-1zM96 204v2h1v-2zM96 393v2h1v-2zM96 483v1h1v-1zM96 497v1h1v-1zM97 100v1h1v-1zM97 171v2h1v-2zM97 202v2h1v-2zM97 395v2h1v-2zM97 426v2h1v-2zM97 482v1h1v-1zM97 498v1h1v-1zM98 99v1h1v-1zM98 200v2h1v-2zM98 397v1h1v-1zM98 428v1h1v-1zM98 481v1h1v-1zM98 499v1h1v-1zM99 98v1h1v-1zM99 168v2h1v-2zM99 198v2h1v-2zM99 399v2h1v-2zM99 429v2h1v-2zM99 480v1h1v-1zM99 500v1h1v-1zM100 97v1h1v-1zM100 167v1h1v-1zM100 196v2h1v-2zM100 402v1h1v-1zM100 431v1h1v-1zM100 479v1h1v-1zM100 501v1h1v-1zM101 96v1h1v-1zM101 165v2h1v-2zM101 195v1h1v-1zM101 403v2h1v-2zM101 432v2h1v-2zM101 478v1h1v-1zM101 502v1h1v-1zM102 95v1h1v-1zM102 164v1h1v-1zM102 172v1h1v-1zM102 192v2h1v-2zM102 405v2h1v-2zM102 422v1h1v-1zM102 434v1h1v-1zM102 477v1h1v-1zM102 503v1h1v-1zM103 94v1h1v-1zM103 162v2h1v-2zM103 191v1h1v-1zM103 407v1h1v-1zM103 435v2h1v-2zM103 476v1h1v-1zM103 504v1h1v-1zM104 93v1h1v-1zM104 161v1h1v-1zM104 189v2h1v-2zM104 408v2h1v-2zM104 437v1h1v-1zM104 475v1h1v-1zM104 505v1h1v-1zM105 92v1h1v-1zM105 160v1h1v-1zM105 187v2h1v-2zM105 288v11h1v-11zM105 300v11h1v-11zM105 410v2h1v-2zM105 438v1h1v-1zM105 506v1h1v-1zM106 91v1h1v-1zM106 158v2h1v-2zM106 185v2h1v-2zM106 277v11h1v-11zM106 311v11h1v-11zM106 412v2h1v-2zM106 439v2h1v-2zM106 507v1h1v-1zM107 90v1h1v-1zM107 157v1h1v-1zM107 175v1h1v-1zM107 184v1h1v-1zM107 270v7h1v-7zM107 322v7h1v-7zM107 414v1h1v-1zM107 441v1h1v-1zM107 473v1h1v-1zM107 508v1h1v-1zM108 155v2h1v-2zM108 182v2h1v-2zM108 264v6h1v-6zM108 329v6h1v-6zM108 415v2h1v-2zM108 442v1h1v-1zM108 472v1h1v-1zM108 509v1h1v-1zM109 88v1h1v-1zM109 154v1h1v-1zM109 180v2h1v-2zM109 259v5h1v-5zM109 335v5h1v-5zM109 417v2h1v-2zM109 444v1h1v-1zM109 471v1h1v-1zM109 510v1h1v-1zM110 87v1h1v-1zM110 90v1h1v-1zM110 179v1h1v-1zM110 254v5h1v-5zM110 340v5h1v-5zM110 419v1h1v-1zM110 442v1h1v-1zM110 445v1h1v-1zM110 470v1h1v-1zM110 511v1h1v-1zM111 86v1h1v-1zM111 91v1h1v-1zM111 152v1h1v-1zM111 178v1h1v-1zM111 250v4h1v-4zM111 345v4h1v-4zM111 420v2h1v-2zM111 446v1h1v-1zM111 469v1h1v-1zM111 512v1h1v-1zM112 92v1h1v-1zM112 150v2h1v-2zM112 176v1h1v-1zM112 247v3h1v-3zM112 349v3h1v-3zM112 422v1h1v-1zM112 447v2h1v-2zM112 468v1h1v-1zM113 93v1h1v-1zM113 149v1h1v-1zM113 174v2h1v-2zM113 195v1h1v-1zM113 243v4h1v-4zM113 352v4h1v-4zM113 423v2h1v-2zM113 440v1h1v-1zM113 449v1h1v-1zM113 467v1h1v-1zM114 84v1h1v-1zM114 94v2h1v-2zM114 148v1h1v-1zM114 155v1h1v-1zM114 173v1h1v-1zM114 240v3h1v-3zM114 356v3h1v-3zM114 425v1h1v-1zM114 439v1h1v-1zM114 450v1h1v-1zM114 466v1h1v-1zM114 514v1h1v-1zM115 83v1h1v-1zM115 96v1h1v-1zM115 147v1h1v-1zM115 156v1h1v-1zM115 171v2h1v-2zM115 237v3h1v-3zM115 359v3h1v-3zM115 426v2h1v-2zM115 438v1h1v-1zM115 451v1h1v-1zM115 515v1h1v-1zM116 82v1h1v-1zM116 97v1h1v-1zM116 145v2h1v-2zM116 170v1h1v-1zM116 234v3h1v-3zM116 362v3h1v-3zM116 428v1h1v-1zM116 437v1h1v-1zM116 452v2h1v-2zM116 516v1h1v-1zM117 81v1h1v-1zM117 98v1h1v-1zM117 144v1h1v-1zM117 169v1h1v-1zM117 231v3h1v-3zM117 365v3h1v-3zM117 429v1h1v-1zM117 454v1h1v-1zM117 464v1h1v-1zM117 517v1h1v-1zM118 99v1h1v-1zM118 143v1h1v-1zM118 158v1h1v-1zM118 167v2h1v-2zM118 229v2h1v-2zM118 368v2h1v-2zM118 430v2h1v-2zM118 455v1h1v-1zM118 463v1h1v-1zM119 100v1h1v-1zM119 142v1h1v-1zM119 159v1h1v-1zM119 166v1h1v-1zM119 226v3h1v-3zM119 370v3h1v-3zM119 432v1h1v-1zM119 435v1h1v-1zM119 456v1h1v-1zM119 462v1h1v-1zM120 79v1h1v-1zM120 101v1h1v-1zM120 141v1h1v-1zM120 164v2h1v-2zM120 199v1h1v-1zM120 224v2h1v-2zM120 373v2h1v-2zM120 433v2h1v-2zM120 457v1h1v-1zM120 461v1h1v-1zM120 519v1h1v-1zM121 78v1h1v-1zM121 102v1h1v-1zM121 140v1h1v-1zM121 163v1h1v-1zM121 222v2h1v-2zM121 375v2h1v-2zM121 435v1h1v-1zM121 458v1h1v-1zM121 460v1h1v-1zM121 520v1h1v-1zM122 77v1h1v-1zM122 103v1h1v-1zM122 139v1h1v-1zM122 162v1h1v-1zM122 219v3h1v-3zM122 377v3h1v-3zM122 436v1h1v-1zM122 459v1h1v-1zM122 521v1h1v-1zM123 104v1h1v-1zM123 138v1h1v-1zM123 217v2h1v-2zM123 380v2h1v-2zM123 437v1h1v-1zM123 458v1h1v-1zM123 460v1h1v-1zM124 105v2h1v-2zM124 136v1h1v-1zM124 159v2h1v-2zM124 215v2h1v-2zM124 382v2h1v-2zM124 438v2h1v-2zM124 457v1h1v-1zM124 461v2h1v-2zM125 75v1h1v-1zM125 107v1h1v-1zM125 135v1h1v-1zM125 158v1h1v-1zM125 213v2h1v-2zM125 440v1h1v-1zM125 456v1h1v-1zM125 463v1h1v-1zM125 523v1h1v-1zM126 74v1h1v-1zM126 108v1h1v-1zM126 134v1h1v-1zM126 138v1h1v-1zM126 157v1h1v-1zM126 211v2h1v-2zM126 386v2h1v-2zM126 441v1h1v-1zM126 455v1h1v-1zM126 464v1h1v-1zM126 524v1h1v-1zM127 73v1h1v-1zM127 109v1h1v-1zM127 133v1h1v-1zM127 139v1h1v-1zM127 156v1h1v-1zM127 209v2h1v-2zM127 388v2h1v-2zM127 442v1h1v-1zM127 454v1h1v-1zM127 465v1h1v-1zM127 525v1h1v-1zM128 110v1h1v-1zM128 132v1h1v-1zM128 140v1h1v-1zM128 154v2h1v-2zM128 207v2h1v-2zM128 390v2h1v-2zM128 443v2h1v-2zM128 453v1h1v-1zM128 466v1h1v-1zM129 111v1h1v-1zM129 131v1h1v-1zM129 141v1h1v-1zM129 153v1h1v-1zM129 205v2h1v-2zM129 392v2h1v-2zM129 445v1h1v-1zM129 452v1h1v-1zM129 467v1h1v-1zM130 71v1h1v-1zM130 112v1h1v-1zM130 130v1h1v-1zM130 152v1h1v-1zM130 394v1h1v-1zM130 446v1h1v-1zM130 451v1h1v-1zM130 468v1h1v-1zM130 527v1h1v-1zM131 70v1h1v-1zM131 113v1h1v-1zM131 129v1h1v-1zM131 151v1h1v-1zM131 202v2h1v-2zM131 395v2h1v-2zM131 447v1h1v-1zM131 450v1h1v-1zM131 469v1h1v-1zM131 528v1h1v-1zM132 114v1h1v-1zM132 128v1h1v-1zM132 143v1h1v-1zM132 150v1h1v-1zM132 200v2h1v-2zM132 397v2h1v-2zM132 448v1h1v-1zM132 470v1h1v-1zM133 115v2h1v-2zM133 127v1h1v-1zM133 144v1h1v-1zM133 149v1h1v-1zM133 199v1h1v-1zM133 399v1h1v-1zM133 471v1h1v-1zM134 68v1h1v-1zM134 117v1h1v-1zM134 126v1h1v-1zM134 145v1h1v-1zM134 148v1h1v-1zM134 197v2h1v-2zM134 400v2h1v-2zM134 450v1h1v-1zM134 472v1h1v-1zM134 530v1h1v-1zM135 118v1h1v-1zM135 125v1h1v-1zM135 147v1h1v-1zM135 195v2h1v-2zM135 402v2h1v-2zM135 451v1h1v-1zM135 473v1h1v-1zM136 119v1h1v-1zM136 194v1h1v-1zM136 404v1h1v-1zM136 452v1h1v-1zM137 66v1h1v-1zM137 120v1h1v-1zM137 145v1h1v-1zM137 192v2h1v-2zM137 405v2h1v-2zM137 453v1h1v-1zM137 473v1h1v-1zM137 532v1h1v-1zM138 121v1h1v-1zM138 123v1h1v-1zM138 143v2h1v-2zM138 191v1h1v-1zM138 407v1h1v-1zM138 454v2h1v-2zM138 472v1h1v-1zM138 475v1h1v-1zM139 122v1h1v-1zM139 142v1h1v-1zM139 189v2h1v-2zM139 408v2h1v-2zM139 456v1h1v-1zM139 471v1h1v-1zM139 476v1h1v-1zM140 64v1h1v-1zM140 121v1h1v-1zM140 123v1h1v-1zM140 141v1h1v-1zM140 188v1h1v-1zM140 410v1h1v-1zM140 457v1h1v-1zM140 470v1h1v-1zM140 477v1h1v-1zM140 534v1h1v-1zM141 120v1h1v-1zM141 124v1h1v-1zM141 140v1h1v-1zM141 187v1h1v-1zM141 411v1h1v-1zM141 458v1h1v-1zM141 468v2h1v-2zM141 478v1h1v-1zM142 119v1h1v-1zM142 125v1h1v-1zM142 139v1h1v-1zM142 185v2h1v-2zM142 412v2h1v-2zM142 459v1h1v-1zM142 467v1h1v-1zM142 479v1h1v-1zM143 62v1h1v-1zM143 118v1h1v-1zM143 126v1h1v-1zM143 184v1h1v-1zM143 414v1h1v-1zM143 466v1h1v-1zM143 480v1h1v-1zM143 536v1h1v-1zM144 117v1h1v-1zM144 127v1h1v-1zM144 182v2h1v-2zM144 415v2h1v-2zM144 465v1h1v-1zM144 481v1h1v-1zM145 128v1h1v-1zM145 137v1h1v-1zM145 181v1h1v-1zM145 417v1h1v-1zM145 461v1h1v-1zM145 464v1h1v-1zM146 60v1h1v-1zM146 129v1h1v-1zM146 136v1h1v-1zM146 180v1h1v-1zM146 418v1h1v-1zM146 462v1h1v-1zM146 538v1h1v-1zM147 115v1h1v-1zM147 130v1h1v-1zM147 135v1h1v-1zM147 179v1h1v-1zM147 419v1h1v-1zM147 483v1h1v-1zM148 114v1h1v-1zM148 131v1h1v-1zM148 134v1h1v-1zM148 177v2h1v-2zM148 420v2h1v-2zM148 464v1h1v-1zM148 484v1h1v-1zM149 58v1h1v-1zM149 113v1h1v-1zM149 133v1h1v-1zM149 176v1h1v-1zM149 422v1h1v-1zM149 465v1h1v-1zM149 485v1h1v-1zM149 540v1h1v-1zM150 175v1h1v-1zM150 423v1h1v-1zM150 466v1h1v-1zM151 131v1h1v-1zM151 174v1h1v-1zM151 424v1h1v-1zM151 467v1h1v-1zM152 111v1h1v-1zM152 130v1h1v-1zM152 173v1h1v-1zM152 425v1h1v-1zM152 468v1h1v-1zM153 110v1h1v-1zM153 129v1h1v-1zM153 171v2h1v-2zM153 426v2h1v-2zM153 469v1h1v-1zM153 488v1h1v-1zM154 55v1h1v-1zM154 170v1h1v-1zM154 428v1h1v-1zM154 485v2h1v-2zM154 489v1h1v-1zM154 543v1h1v-1zM155 169v1h1v-1zM155 429v1h1v-1zM155 484v1h1v-1zM156 110v1h1v-1zM156 127v1h1v-1zM156 168v1h1v-1zM156 430v1h1v-1zM156 471v1h1v-1zM156 483v1h1v-1zM157 107v1h1v-1zM157 111v2h1v-2zM157 126v1h1v-1zM157 167v1h1v-1zM157 431v1h1v-1zM157 472v1h1v-1zM157 481v2h1v-2zM157 491v1h1v-1zM158 113v1h1v-1zM158 125v1h1v-1zM158 166v1h1v-1zM158 432v1h1v-1zM158 473v1h1v-1zM158 480v1h1v-1zM159 114v1h1v-1zM159 165v1h1v-1zM159 433v1h1v-1zM159 479v1h1v-1zM160 105v1h1v-1zM160 115v1h1v-1zM160 164v1h1v-1zM160 434v1h1v-1zM160 477v2h1v-2zM160 493v1h1v-1zM161 51v1h1v-1zM161 104v1h1v-1zM161 116v1h1v-1zM161 123v1h1v-1zM161 163v1h1v-1zM161 435v1h1v-1zM161 475v1h1v-1zM161 494v1h1v-1zM161 547v1h1v-1zM162 117v2h1v-2zM162 122v1h1v-1zM162 162v1h1v-1zM162 436v1h1v-1zM163 119v1h1v-1zM163 121v1h1v-1zM163 161v1h1v-1zM163 437v1h1v-1zM163 477v1h1v-1zM164 102v1h1v-1zM164 160v1h1v-1zM164 438v1h1v-1zM164 496v1h1v-1zM165 159v1h1v-1zM165 439v1h1v-1zM166 119v1h1v-1zM166 158v1h1v-1zM166 440v1h1v-1zM166 479v1h1v-1zM167 100v1h1v-1zM167 157v1h1v-1zM167 441v1h1v-1zM167 498v1h1v-1zM168 156v1h1v-1zM168 442v1h1v-1zM169 117v1h1v-1zM169 155v1h1v-1zM169 443v1h1v-1zM169 481v1h1v-1zM170 98v1h1v-1zM170 116v1h1v-1zM170 154v1h1v-1zM170 444v1h1v-1zM170 482v1h1v-1zM170 500v1h1v-1zM171 497v2h1v-2zM172 496v1h1v-1zM173 96v1h1v-1zM173 114v1h1v-1zM173 152v1h1v-1zM173 446v1h1v-1zM173 484v1h1v-1zM173 494v2h1v-2zM173 502v1h1v-1zM174 98v2h1v-2zM174 151v1h1v-1zM174 447v1h1v-1zM174 492v2h1v-2zM175 100v2h1v-2zM175 150v1h1v-1zM175 448v1h1v-1zM175 491v1h1v-1zM176 102v1h1v-1zM176 112v1h1v-1zM176 149v1h1v-1zM176 449v1h1v-1zM176 483v2h1v-2zM176 486v1h1v-1zM176 489v2h1v-2zM177 103v2h1v-2zM177 482v1h1v-1zM177 488v1h1v-1zM178 105v2h1v-2zM178 480v2h1v-2zM179 107v2h1v-2zM179 110v1h1v-1zM179 147v1h1v-1zM179 451v1h1v-1zM179 479v1h1v-1zM179 488v1h1v-1zM180 92v1h1v-1zM180 146v1h1v-1zM180 452v1h1v-1zM180 477v2h1v-2zM180 506v1h1v-1zM181 145v1h1v-1zM181 453v1h1v-1zM181 476v1h1v-1zM182 474v2h1v-2zM183 473v1h1v-1zM184 107v1h1v-1zM184 143v1h1v-1zM184 455v1h1v-1zM184 471v2h1v-2zM184 491v1h1v-1zM185 470v1h1v-1zM186 468v2h1v-2zM187 141v1h1v-1zM187 457v1h1v-1zM187 467v1h1v-1zM188 107v2h1v-2zM188 140v1h1v-1zM188 458v1h1v-1zM188 465v2h1v-2zM188 509v1h1v-1zM189 87v1h1v-1zM189 109v2h1v-2zM189 464v1h1v-1zM189 507v2h1v-2zM189 511v1h1v-1zM190 111v2h1v-2zM190 462v2h1v-2zM190 505v2h1v-2zM191 87v1h1v-1zM191 103v1h1v-1zM191 113v2h1v-2zM191 138v1h1v-1zM191 460v1h1v-1zM191 495v1h1v-1zM191 503v2h1v-2zM192 88v2h1v-2zM192 115v1h1v-1zM192 501v2h1v-2zM193 90v2h1v-2zM193 116v2h1v-2zM193 499v2h1v-2zM194 92v2h1v-2zM194 118v2h1v-2zM194 136v1h1v-1zM194 462v1h1v-1zM194 498v1h1v-1zM195 94v2h1v-2zM195 120v2h1v-2zM196 96v2h1v-2zM196 122v1h1v-1zM197 98v1h1v-1zM197 123v2h1v-2zM197 166v1h1v-1zM198 125v2h1v-2zM198 167v1h1v-1zM199 127v2h1v-2zM199 133v1h1v-1zM199 168v1h1v-1zM199 465v1h1v-1zM200 129v2h1v-2zM200 169v1h1v-1zM201 170v2h1v-2zM202 172v1h1v-1zM203 173v1h1v-1zM204 130v1h1v-1zM204 174v1h1v-1zM204 468v1h1v-1zM205 175v1h1v-1zM206 518v1h1v-1zM207 516v2h1v-2zM208 514v2h1v-2zM209 512v2h1v-2zM210 79v1h1v-1zM210 510v2h1v-2zM211 80v2h1v-2zM211 508v2h1v-2zM212 82v3h1v-3zM212 507v1h1v-1zM212 567v2h1v-2zM213 85v3h1v-3zM213 564v3h1v-3zM214 88v2h1v-2zM214 561v3h1v-3zM215 90v1h1v-1zM215 558v3h1v-3zM216 555v3h1v-3zM217 552v3h1v-3zM218 549v3h1v-3zM219 547v2h1v-2zM220 544v3h1v-3zM221 541v3h1v-3zM222 538v3h1v-3zM223 535v3h1v-3zM224 532v3h1v-3zM225 529v3h1v-3zM226 525v1h1v-1zM226 528v1h1v-1zM227 522v3h1v-3zM228 518v4h1v-4zM229 72v1h1v-1zM229 515v3h1v-3zM230 73v3h1v-3zM230 513v2h1v-2zM231 76v4h1v-4zM232 80v3h1v-3zM233 83v2h1v-2zM240 23v2h1v-2zM241 25v4h1v-4zM242 29v5h1v-5zM243 34v5h1v-5zM244 39v4h1v-4zM245 43v5h1v-5zM246 48v5h1v-5zM246 529v3h1v-3zM247 53v4h1v-4zM247 525v4h1v-4zM248 57v5h1v-5zM248 521v4h1v-4zM249 62v3h1v-3zM249 518v3h1v-3zM250 66v4h1v-4zM251 70v6h1v-6zM252 76v4h1v-4zM263 135v3h1v-3zM264 138v6h1v-6zM265 144v4h1v-4zM267 529v7h1v-7zM268 522v7h1v-7zM270 63v3h1v-3zM271 66v7h1v-7zM272 73v4h1v-4zM287 531v6h1v-6zM288 524v7h1v-7zM291 61v14h1v-14zM291 131v1h1v-1zM292 132v1h1v-1zM293 133v1h1v-1zM293 508v15h1v-15zM294 134v1h1v-1zM294 494v14h1v-14zM295 135v1h1v-1zM296 136v1h1v-1zM297 137v1h1v-1zM298 138v1h1v-1zM299 139v1h1v-1zM300 140v1h1v-1zM301 141v1h1v-1zM302 142v1h1v-1zM303 143v1h1v-1zM304 90v15h1v-15zM305 76v14h1v-14zM307 138v7h1v-7zM307 524v14h1v-14zM308 132v6h1v-6zM310 68v7h1v-7zM311 62v6h1v-6zM311 144v1h1v-1zM314 142v1h1v-1zM315 141v1h1v-1zM318 139v1h1v-1zM319 138v1h1v-1zM322 136v1h1v-1zM323 135v1h1v-1zM326 133v1h1v-1zM326 522v4h1v-4zM327 526v7h1v-7zM328 533v3h1v-3zM330 70v7h1v-7zM331 63v7h1v-7zM346 519v4h1v-4zM347 523v6h1v-6zM348 529v4h1v-4zM349 78v3h1v-3zM349 534v3h1v-3zM350 74v4h1v-4zM350 537v4h1v-4zM351 70v4h1v-4zM351 541v5h1v-5zM352 67v3h1v-3zM352 546v5h1v-5zM353 551v4h1v-4zM354 555v5h1v-5zM355 560v5h1v-5zM356 565v4h1v-4zM357 569v5h1v-5zM358 574v2h1v-2zM365 514v2h1v-2zM366 516v3h1v-3zM367 519v4h1v-4zM368 84v2h1v-2zM368 523v3h1v-3zM369 81v3h1v-3zM369 526v1h1v-1zM370 77v4h1v-4zM371 74v3h1v-3zM372 70v1h1v-1zM372 73v1h1v-1zM373 67v3h1v-3zM374 64v3h1v-3zM375 61v3h1v-3zM376 58v3h1v-3zM377 55v3h1v-3zM378 52v3h1v-3zM379 50v2h1v-2zM380 47v3h1v-3zM381 44v3h1v-3zM382 41v3h1v-3zM383 38v3h1v-3zM383 508v1h1v-1zM384 35v3h1v-3zM384 509v2h1v-2zM385 32v3h1v-3zM385 511v3h1v-3zM386 30v2h1v-2zM386 91v1h1v-1zM386 514v3h1v-3zM387 89v2h1v-2zM387 517v2h1v-2zM388 87v2h1v-2zM388 519v1h1v-1zM389 85v2h1v-2zM390 83v2h1v-2zM391 81v2h1v-2zM391 424v2h1v-2zM392 80v1h1v-1zM392 426v3h1v-3zM393 429v3h1v-3zM394 130v1h1v-1zM394 432v3h1v-3zM394 468v1h1v-1zM395 435v2h1v-2zM398 468v2h1v-2zM399 133v1h1v-1zM399 465v1h1v-1zM399 470v2h1v-2zM400 472v2h1v-2zM401 474v2h1v-2zM402 476v1h1v-1zM402 500v2h1v-2zM403 477v2h1v-2zM403 502v2h1v-2zM404 99v2h1v-2zM404 136v1h1v-1zM404 462v1h1v-1zM404 479v2h1v-2zM404 504v2h1v-2zM405 97v2h1v-2zM405 481v2h1v-2zM405 506v2h1v-2zM406 95v2h1v-2zM406 483v1h1v-1zM406 508v2h1v-2zM407 93v2h1v-2zM407 103v1h1v-1zM407 138v1h1v-1zM407 460v1h1v-1zM407 484v2h1v-2zM407 495v1h1v-1zM407 510v2h1v-2zM408 91v2h1v-2zM408 135v2h1v-2zM408 486v2h1v-2zM409 87v1h1v-1zM409 89v2h1v-2zM409 134v1h1v-1zM409 488v2h1v-2zM409 511v1h1v-1zM410 132v2h1v-2zM410 140v1h1v-1zM410 458v1h1v-1zM410 490v2h1v-2zM411 131v1h1v-1zM411 141v1h1v-1zM411 457v1h1v-1zM412 129v2h1v-2zM413 128v1h1v-1zM414 107v1h1v-1zM414 126v2h1v-2zM414 143v1h1v-1zM414 455v1h1v-1zM414 491v1h1v-1zM415 125v1h1v-1zM416 123v2h1v-2zM417 122v1h1v-1zM417 145v1h1v-1zM417 453v1h1v-1zM418 92v1h1v-1zM418 120v2h1v-2zM418 146v1h1v-1zM418 452v1h1v-1zM418 506v1h1v-1zM419 110v1h1v-1zM419 119v1h1v-1zM419 147v1h1v-1zM419 451v1h1v-1zM419 488v1h1v-1zM419 490v2h1v-2zM420 117v2h1v-2zM420 492v2h1v-2zM421 110v1h1v-1zM421 116v1h1v-1zM421 494v1h1v-1zM422 108v2h1v-2zM422 112v1h1v-1zM422 114v2h1v-2zM422 149v1h1v-1zM422 449v1h1v-1zM422 486v1h1v-1zM422 495v2h1v-2zM423 107v1h1v-1zM423 150v1h1v-1zM423 448v1h1v-1zM423 497v2h1v-2zM424 105v2h1v-2zM424 151v1h1v-1zM424 447v1h1v-1zM424 499v2h1v-2zM425 96v1h1v-1zM425 103v2h1v-2zM425 114v1h1v-1zM425 152v1h1v-1zM425 446v1h1v-1zM425 484v1h1v-1zM425 502v1h1v-1zM426 102v1h1v-1zM427 100v2h1v-2zM428 98v1h1v-1zM428 116v1h1v-1zM428 154v1h1v-1zM428 444v1h1v-1zM428 482v1h1v-1zM428 500v1h1v-1zM429 117v1h1v-1zM429 155v1h1v-1zM429 443v1h1v-1zM429 481v1h1v-1zM430 156v1h1v-1zM430 442v1h1v-1zM431 100v1h1v-1zM431 157v1h1v-1zM431 441v1h1v-1zM431 498v1h1v-1zM432 119v1h1v-1zM432 158v1h1v-1zM432 440v1h1v-1zM432 479v1h1v-1zM433 159v1h1v-1zM433 439v1h1v-1zM434 102v1h1v-1zM434 160v1h1v-1zM434 438v1h1v-1zM434 496v1h1v-1zM435 121v1h1v-1zM435 161v1h1v-1zM435 437v1h1v-1zM435 477v1h1v-1zM435 479v1h1v-1zM436 162v1h1v-1zM436 436v1h1v-1zM436 476v1h1v-1zM436 480v2h1v-2zM437 51v1h1v-1zM437 104v1h1v-1zM437 123v1h1v-1zM437 163v1h1v-1zM437 435v1h1v-1zM437 475v1h1v-1zM437 482v1h1v-1zM437 494v1h1v-1zM437 547v1h1v-1zM438 105v1h1v-1zM438 120v2h1v-2zM438 164v1h1v-1zM438 434v1h1v-1zM438 483v1h1v-1zM438 493v1h1v-1zM439 119v1h1v-1zM439 165v1h1v-1zM439 433v1h1v-1zM439 484v1h1v-1zM440 118v1h1v-1zM440 125v1h1v-1zM440 166v1h1v-1zM440 432v1h1v-1zM440 473v1h1v-1zM440 485v1h1v-1zM441 107v1h1v-1zM441 116v2h1v-2zM441 126v1h1v-1zM441 167v1h1v-1zM441 431v1h1v-1zM441 472v1h1v-1zM441 486v2h1v-2zM441 491v1h1v-1zM442 115v1h1v-1zM442 127v1h1v-1zM442 168v1h1v-1zM442 430v1h1v-1zM442 471v1h1v-1zM442 488v1h1v-1zM443 114v1h1v-1zM443 169v1h1v-1zM443 429v1h1v-1zM444 55v1h1v-1zM444 109v1h1v-1zM444 112v2h1v-2zM444 170v1h1v-1zM444 428v1h1v-1zM444 543v1h1v-1zM445 110v1h1v-1zM445 129v1h1v-1zM445 171v2h1v-2zM445 426v2h1v-2zM445 469v1h1v-1zM445 488v1h1v-1zM446 130v1h1v-1zM446 173v1h1v-1zM446 425v1h1v-1zM446 468v1h1v-1zM446 487v1h1v-1zM447 131v1h1v-1zM447 174v1h1v-1zM447 424v1h1v-1zM447 467v1h1v-1zM448 132v1h1v-1zM448 175v1h1v-1zM448 423v1h1v-1zM449 58v1h1v-1zM449 113v1h1v-1zM449 133v1h1v-1zM449 176v1h1v-1zM449 422v1h1v-1zM449 465v1h1v-1zM449 485v1h1v-1zM449 540v1h1v-1zM450 114v1h1v-1zM450 134v1h1v-1zM450 177v2h1v-2zM450 420v2h1v-2zM450 464v1h1v-1zM450 467v1h1v-1zM450 484v1h1v-1zM451 115v1h1v-1zM451 179v1h1v-1zM451 419v1h1v-1zM451 463v1h1v-1zM451 468v1h1v-1zM451 483v1h1v-1zM452 60v1h1v-1zM452 136v1h1v-1zM452 180v1h1v-1zM452 418v1h1v-1zM452 462v1h1v-1zM452 469v1h1v-1zM452 538v1h1v-1zM453 134v1h1v-1zM453 137v1h1v-1zM453 181v1h1v-1zM453 417v1h1v-1zM453 461v1h1v-1zM453 470v1h1v-1zM454 117v1h1v-1zM454 133v1h1v-1zM454 182v2h1v-2zM454 415v2h1v-2zM454 471v1h1v-1zM454 481v1h1v-1zM455 62v1h1v-1zM455 118v1h1v-1zM455 132v1h1v-1zM455 184v1h1v-1zM455 414v1h1v-1zM455 472v1h1v-1zM455 480v1h1v-1zM455 536v1h1v-1zM456 119v1h1v-1zM456 130v2h1v-2zM456 139v1h1v-1zM456 185v2h1v-2zM456 412v2h1v-2zM456 459v1h1v-1zM456 473v1h1v-1zM456 479v1h1v-1zM457 120v1h1v-1zM457 129v1h1v-1zM457 140v1h1v-1zM457 187v1h1v-1zM457 411v1h1v-1zM457 458v1h1v-1zM457 474v1h1v-1zM457 478v1h1v-1zM458 64v1h1v-1zM458 121v1h1v-1zM458 128v1h1v-1zM458 141v1h1v-1zM458 188v1h1v-1zM458 410v1h1v-1zM458 457v1h1v-1zM458 475v1h1v-1zM458 477v1h1v-1zM458 534v1h1v-1zM459 122v1h1v-1zM459 127v1h1v-1zM459 142v1h1v-1zM459 189v2h1v-2zM459 408v2h1v-2zM459 456v1h1v-1zM459 476v1h1v-1zM460 123v1h1v-1zM460 126v1h1v-1zM460 143v2h1v-2zM460 191v1h1v-1zM460 407v1h1v-1zM460 454v2h1v-2zM460 475v1h1v-1zM460 477v1h1v-1zM461 66v1h1v-1zM461 125v1h1v-1zM461 145v1h1v-1zM461 192v2h1v-2zM461 405v2h1v-2zM461 453v1h1v-1zM461 478v1h1v-1zM461 532v1h1v-1zM462 146v1h1v-1zM462 194v1h1v-1zM462 404v1h1v-1zM462 479v1h1v-1zM463 125v1h1v-1zM463 147v1h1v-1zM463 195v2h1v-2zM463 402v2h1v-2zM463 451v1h1v-1zM463 473v1h1v-1zM463 480v1h1v-1zM464 68v1h1v-1zM464 126v1h1v-1zM464 148v1h1v-1zM464 197v2h1v-2zM464 400v2h1v-2zM464 450v1h1v-1zM464 453v1h1v-1zM464 472v1h1v-1zM464 481v1h1v-1zM464 530v1h1v-1zM465 127v1h1v-1zM465 199v1h1v-1zM465 399v1h1v-1zM465 449v1h1v-1zM465 454v1h1v-1zM465 471v1h1v-1zM465 482v2h1v-2zM466 128v1h1v-1zM466 150v1h1v-1zM466 200v2h1v-2zM466 397v2h1v-2zM466 448v1h1v-1zM466 455v1h1v-1zM466 470v1h1v-1zM466 484v1h1v-1zM467 70v1h1v-1zM467 129v1h1v-1zM467 148v1h1v-1zM467 151v1h1v-1zM467 202v2h1v-2zM467 395v2h1v-2zM467 447v1h1v-1zM467 456v1h1v-1zM467 469v1h1v-1zM467 485v1h1v-1zM467 528v1h1v-1zM468 71v1h1v-1zM468 130v1h1v-1zM468 147v1h1v-1zM468 152v1h1v-1zM468 204v1h1v-1zM468 446v1h1v-1zM468 468v1h1v-1zM468 486v1h1v-1zM468 527v1h1v-1zM469 131v1h1v-1zM469 146v1h1v-1zM469 153v1h1v-1zM469 205v2h1v-2zM469 392v2h1v-2zM469 445v1h1v-1zM469 467v1h1v-1zM469 487v1h1v-1zM470 132v1h1v-1zM470 145v1h1v-1zM470 154v2h1v-2zM470 207v2h1v-2zM470 390v2h1v-2zM470 443v2h1v-2zM470 458v1h1v-1zM470 466v1h1v-1zM470 488v1h1v-1zM471 73v1h1v-1zM471 133v1h1v-1zM471 144v1h1v-1zM471 156v1h1v-1zM471 209v2h1v-2zM471 388v2h1v-2zM471 442v1h1v-1zM471 459v1h1v-1zM471 465v1h1v-1zM471 489v1h1v-1zM471 525v1h1v-1zM472 74v1h1v-1zM472 134v1h1v-1zM472 143v1h1v-1zM472 157v1h1v-1zM472 211v2h1v-2zM472 386v2h1v-2zM472 441v1h1v-1zM472 460v1h1v-1zM472 464v1h1v-1zM472 490v1h1v-1zM472 524v1h1v-1zM473 75v1h1v-1zM473 135v1h1v-1zM473 142v1h1v-1zM473 158v1h1v-1zM473 384v2h1v-2zM473 440v1h1v-1zM473 463v1h1v-1zM473 491v1h1v-1zM473 523v1h1v-1zM474 136v2h1v-2zM474 141v1h1v-1zM474 159v2h1v-2zM474 215v2h1v-2zM474 382v2h1v-2zM474 438v2h1v-2zM474 462v1h1v-1zM474 492v1h1v-1zM475 138v1h1v-1zM475 140v1h1v-1zM475 161v1h1v-1zM475 217v2h1v-2zM475 380v2h1v-2zM475 460v1h1v-1zM475 493v2h1v-2zM476 77v1h1v-1zM476 139v1h1v-1zM476 162v1h1v-1zM476 219v3h1v-3zM476 377v3h1v-3zM476 436v1h1v-1zM476 459v1h1v-1zM476 495v1h1v-1zM476 521v1h1v-1zM477 78v1h1v-1zM477 138v1h1v-1zM477 140v1h1v-1zM477 163v1h1v-1zM477 222v2h1v-2zM477 375v2h1v-2zM477 435v1h1v-1zM477 458v1h1v-1zM477 496v1h1v-1zM477 520v1h1v-1zM478 79v1h1v-1zM478 137v1h1v-1zM478 141v1h1v-1zM478 164v2h1v-2zM478 224v2h1v-2zM478 373v2h1v-2zM478 399v1h1v-1zM478 433v2h1v-2zM478 457v1h1v-1zM478 497v1h1v-1zM478 519v1h1v-1zM479 136v1h1v-1zM479 142v1h1v-1zM479 163v1h1v-1zM479 166v1h1v-1zM479 226v3h1v-3zM479 370v3h1v-3zM479 432v1h1v-1zM479 439v1h1v-1zM479 456v1h1v-1zM479 498v1h1v-1zM480 135v1h1v-1zM480 143v1h1v-1zM480 167v2h1v-2zM480 229v2h1v-2zM480 368v2h1v-2zM480 430v2h1v-2zM480 440v1h1v-1zM480 455v1h1v-1zM480 499v1h1v-1zM481 81v1h1v-1zM481 134v1h1v-1zM481 144v1h1v-1zM481 169v1h1v-1zM481 231v3h1v-3zM481 365v3h1v-3zM481 429v1h1v-1zM481 454v1h1v-1zM481 500v1h1v-1zM481 517v1h1v-1zM482 82v1h1v-1zM482 145v2h1v-2zM482 161v1h1v-1zM482 170v1h1v-1zM482 234v3h1v-3zM482 362v3h1v-3zM482 428v1h1v-1zM482 452v2h1v-2zM482 501v1h1v-1zM482 516v1h1v-1zM483 83v1h1v-1zM483 147v1h1v-1zM483 160v1h1v-1zM483 171v2h1v-2zM483 237v3h1v-3zM483 359v3h1v-3zM483 426v2h1v-2zM483 442v1h1v-1zM483 451v1h1v-1zM483 502v1h1v-1zM483 515v1h1v-1zM484 84v1h1v-1zM484 132v1h1v-1zM484 148v1h1v-1zM484 159v1h1v-1zM484 173v1h1v-1zM484 240v3h1v-3zM484 356v3h1v-3zM484 425v1h1v-1zM484 443v1h1v-1zM484 450v1h1v-1zM484 503v2h1v-2zM484 514v1h1v-1zM485 131v1h1v-1zM485 149v1h1v-1zM485 158v1h1v-1zM485 174v2h1v-2zM485 243v4h1v-4zM485 352v4h1v-4zM485 403v1h1v-1zM485 423v2h1v-2zM485 449v1h1v-1zM485 505v1h1v-1zM486 130v1h1v-1zM486 150v2h1v-2zM486 176v1h1v-1zM486 247v3h1v-3zM486 349v3h1v-3zM486 422v1h1v-1zM486 447v2h1v-2zM486 506v1h1v-1zM487 86v1h1v-1zM487 129v1h1v-1zM487 152v1h1v-1zM487 177v2h1v-2zM487 250v4h1v-4zM487 345v4h1v-4zM487 420v1h1v-1zM487 446v1h1v-1zM487 507v1h1v-1zM487 512v1h1v-1zM488 87v1h1v-1zM488 128v1h1v-1zM488 153v1h1v-1zM488 156v1h1v-1zM488 179v1h1v-1zM488 254v5h1v-5zM488 340v5h1v-5zM488 419v1h1v-1zM488 508v1h1v-1zM488 511v1h1v-1zM489 88v1h1v-1zM489 127v1h1v-1zM489 154v1h1v-1zM489 180v2h1v-2zM489 259v5h1v-5zM489 335v5h1v-5zM489 417v2h1v-2zM489 444v1h1v-1zM489 510v1h1v-1zM490 89v1h1v-1zM490 126v1h1v-1zM490 156v1h1v-1zM490 182v2h1v-2zM490 264v6h1v-6zM490 329v6h1v-6zM490 415v2h1v-2zM490 442v2h1v-2zM491 90v1h1v-1zM491 125v1h1v-1zM491 157v1h1v-1zM491 184v1h1v-1zM491 270v7h1v-7zM491 322v7h1v-7zM491 414v1h1v-1zM491 423v1h1v-1zM491 441v1h1v-1zM491 508v1h1v-1zM492 91v1h1v-1zM492 124v1h1v-1zM492 158v2h1v-2zM492 185v2h1v-2zM492 277v11h1v-11zM492 311v11h1v-11zM492 412v2h1v-2zM492 439v2h1v-2zM492 507v1h1v-1zM493 92v1h1v-1zM493 160v1h1v-1zM493 187v2h1v-2zM493 288v11h1v-11zM493 300v11h1v-11zM493 410v2h1v-2zM493 438v1h1v-1zM493 506v1h1v-1zM494 93v1h1v-1zM494 161v1h1v-1zM494 177v1h1v-1zM494 189v2h1v-2zM494 408v2h1v-2zM494 437v1h1v-1zM494 505v1h1v-1zM495 94v1h1v-1zM495 122v1h1v-1zM495 162v2h1v-2zM495 191v1h1v-1zM495 407v1h1v-1zM495 435v2h1v-2zM495 504v1h1v-1zM496 95v1h1v-1zM496 121v1h1v-1zM496 164v1h1v-1zM496 192v2h1v-2zM496 405v2h1v-2zM496 426v1h1v-1zM496 434v1h1v-1zM496 503v1h1v-1zM497 96v1h1v-1zM497 120v1h1v-1zM497 165v2h1v-2zM497 194v2h1v-2zM497 403v1h1v-1zM497 432v2h1v-2zM497 502v1h1v-1zM498 97v1h1v-1zM498 119v1h1v-1zM498 167v1h1v-1zM498 196v1h1v-1zM498 401v2h1v-2zM498 431v1h1v-1zM498 501v1h1v-1zM499 98v1h1v-1zM499 118v1h1v-1zM499 168v2h1v-2zM499 198v2h1v-2zM499 399v2h1v-2zM499 429v2h1v-2zM499 500v1h1v-1zM500 99v1h1v-1zM500 117v1h1v-1zM500 170v1h1v-1zM500 201v1h1v-1zM500 397v2h1v-2zM500 499v1h1v-1zM501 100v1h1v-1zM501 116v1h1v-1zM501 171v2h1v-2zM501 202v2h1v-2zM501 395v2h1v-2zM501 426v2h1v-2zM501 498v1h1v-1zM502 101v1h1v-1zM502 115v1h1v-1zM502 204v2h1v-2zM502 393v2h1v-2zM502 425v1h1v-1zM502 497v1h1v-1zM503 102v1h1v-1zM503 174v2h1v-2zM503 206v3h1v-3zM503 390v3h1v-3zM503 423v2h1v-2zM503 496v1h1v-1zM504 103v1h1v-1zM504 176v2h1v-2zM504 209v2h1v-2zM504 388v2h1v-2zM504 421v2h1v-2zM504 495v1h1v-1zM505 104v1h1v-1zM505 113v1h1v-1zM505 178v2h1v-2zM505 211v2h1v-2zM505 387v1h1v-1zM505 419v2h1v-2zM505 494v1h1v-1zM506 105v1h1v-1zM506 112v1h1v-1zM506 180v1h1v-1zM506 213v2h1v-2zM506 383v3h1v-3zM506 418v1h1v-1zM506 493v1h1v-1zM507 106v1h1v-1zM507 111v1h1v-1zM507 181v2h1v-2zM507 216v2h1v-2zM507 381v2h1v-2zM507 416v2h1v-2zM507 492v1h1v-1zM508 107v1h1v-1zM508 110v1h1v-1zM508 183v2h1v-2zM508 218v3h1v-3zM508 378v3h1v-3zM508 414v2h1v-2zM508 491v1h1v-1zM509 108v1h1v-1zM509 185v2h1v-2zM509 221v2h1v-2zM509 376v2h1v-2zM509 412v2h1v-2zM509 490v1h1v-1zM510 187v2h1v-2zM510 223v3h1v-3zM510 373v3h1v-3zM510 411v1h1v-1zM510 489v1h1v-1zM511 110v1h1v-1zM511 189v1h1v-1zM511 226v3h1v-3zM511 370v3h1v-3zM511 409v1h1v-1zM511 488v1h1v-1zM512 111v1h1v-1zM512 190v1h1v-1zM512 229v3h1v-3zM512 367v1h1v-1zM512 369v1h1v-1zM512 407v2h1v-2zM512 487v1h1v-1zM513 112v2h1v-2zM513 192v2h1v-2zM513 232v1h1v-1zM513 234v2h1v-2zM513 363v4h1v-4zM513 405v2h1v-2zM513 485v2h1v-2zM514 114v1h1v-1zM514 194v3h1v-3zM514 236v3h1v-3zM514 360v3h1v-3zM514 402v3h1v-3zM514 484v1h1v-1zM515 115v1h1v-1zM515 197v2h1v-2zM515 239v4h1v-4zM515 356v4h1v-4zM515 400v2h1v-2zM515 483v1h1v-1zM516 116v1h1v-1zM516 199v2h1v-2zM516 243v4h1v-4zM516 352v4h1v-4zM516 398v2h1v-2zM516 482v1h1v-1zM517 117v1h1v-1zM517 201v2h1v-2zM517 247v4h1v-4zM517 348v1h1v-1zM517 350v2h1v-2zM517 396v2h1v-2zM517 481v1h1v-1zM518 118v2h1v-2zM518 203v2h1v-2zM518 251v1h1v-1zM518 253v3h1v-3zM518 343v5h1v-5zM518 394v2h1v-2zM518 479v2h1v-2zM519 120v1h1v-1zM519 205v3h1v-3zM519 256v5h1v-5zM519 338v5h1v-5zM519 391v1h1v-1zM519 393v1h1v-1zM519 478v1h1v-1zM520 121v1h1v-1zM520 208v2h1v-2zM520 261v6h1v-6zM520 332v6h1v-6zM520 389v2h1v-2zM520 477v1h1v-1zM521 122v1h1v-1zM521 211v2h1v-2zM521 267v5h1v-5zM521 273v2h1v-2zM521 324v6h1v-6zM521 331v1h1v-1zM521 386v3h1v-3zM521 476v1h1v-1zM522 123v2h1v-2zM522 213v2h1v-2zM522 275v12h1v-12zM522 312v12h1v-12zM522 384v2h1v-2zM522 474v2h1v-2zM523 125v1h1v-1zM523 215v3h1v-3zM523 287v4h1v-4zM523 292v7h1v-7zM523 300v10h1v-10zM523 311v1h1v-1zM523 381v3h1v-3zM523 473v1h1v-1zM524 126v1h1v-1zM524 218v3h1v-3zM524 378v3h1v-3zM524 472v1h1v-1zM525 127v1h1v-1zM525 221v3h1v-3zM525 375v3h1v-3zM525 471v1h1v-1zM526 128v2h1v-2zM526 224v3h1v-3zM526 373v2h1v-2zM526 469v2h1v-2zM527 130v1h1v-1zM527 227v2h1v-2zM527 369v3h1v-3zM527 468v1h1v-1zM528 131v1h1v-1zM528 230v3h1v-3zM528 366v3h1v-3zM528 467v1h1v-1zM529 132v2h1v-2zM529 233v4h1v-4zM529 362v4h1v-4zM529 465v2h1v-2zM530 134v1h1v-1zM530 237v4h1v-4zM530 358v4h1v-4zM530 464v1h1v-1zM531 135v2h1v-2zM531 241v4h1v-4zM531 354v4h1v-4zM531 462v2h1v-2zM532 137v1h1v-1zM532 245v4h1v-4zM532 350v2h1v-2zM532 353v1h1v-1zM532 461v1h1v-1zM533 138v2h1v-2zM533 251v3h1v-3zM533 345v5h1v-5zM533 459v2h1v-2zM534 140v1h1v-1zM534 254v6h1v-6zM534 339v6h1v-6zM534 458v1h1v-1zM535 141v2h1v-2zM535 260v6h1v-6zM535 333v6h1v-6zM535 456v2h1v-2zM536 143v1h1v-1zM536 266v4h1v-4zM536 271v3h1v-3zM536 325v6h1v-6zM536 332v1h1v-1zM536 455v1h1v-1zM537 144v2h1v-2zM537 274v13h1v-13zM537 312v13h1v-13zM537 453v2h1v-2zM538 146v1h1v-1zM538 287v4h1v-4zM538 292v19h1v-19zM538 452v1h1v-1zM539 147v2h1v-2zM539 450v2h1v-2zM540 149v1h1v-1zM540 449v1h1v-1zM541 150v2h1v-2zM541 447v2h1v-2zM542 152v2h1v-2zM542 445v2h1v-2zM543 154v1h1v-1zM543 444v1h1v-1zM544 155v2h1v-2zM544 442v2h1v-2zM545 157v2h1v-2zM545 440v2h1v-2zM546 159v2h1v-2zM546 438v2h1v-2zM547 161v1h1v-1zM547 437v1h1v-1zM548 162v2h1v-2zM548 435v2h1v-2zM549 164v2h1v-2zM549 433v2h1v-2zM550 166v2h1v-2zM550 431v2h1v-2zM551 168v2h1v-2zM551 429v2h1v-2zM552 170v2h1v-2zM552 427v2h1v-2zM553 172v2h1v-2zM553 425v2h1v-2zM554 174v2h1v-2zM554 423v2h1v-2zM555 176v2h1v-2zM555 421v2h1v-2zM556 178v2h1v-2zM556 419v2h1v-2zM557 180v2h1v-2zM557 417v2h1v-2zM558 182v3h1v-3zM558 414v3h1v-3zM559 185v2h1v-2zM559 412v2h1v-2zM560 187v2h1v-2zM560 410v2h1v-2zM561 189v3h1v-3zM561 407v3h1v-3zM562 192v2h1v-2zM562 405v2h1v-2zM563 194v3h1v-3zM563 402v3h1v-3zM564 197v2h1v-2zM564 400v2h1v-2zM565 199v3h1v-3zM565 397v3h1v-3zM566 202v3h1v-3zM566 394v3h1v-3zM567 205v2h1v-2zM567 392v2h1v-2zM568 207v3h1v-3zM568 389v3h1v-3zM569 210v4h1v-4zM569 385v1h1v-1zM569 387v2h1v-2zM570 214v3h1v-3zM570 382v3h1v-3zM571 217v3h1v-3zM571 379v3h1v-3zM572 220v4h1v-4zM572 375v4h1v-4zM573 224v3h1v-3zM573 372v3h1v-3zM574 227v4h1v-4zM574 368v4h1v-4zM575 231v4h1v-4zM575 364v4h1v-4zM576 235v5h1v-5zM576 359v5h1v-5zM577 241v4h1v-4zM577 354v5h1v-5zM578 245v5h1v-5zM578 349v5h1v-5zM579 250v6h1v-6zM579 343v6h1v-6zM580 256v7h1v-7zM580 336v7h1v-7zM581 263v9h1v-9zM581 327v9h1v-9zM582 272v14h1v-14zM582 313v14h1v-14zM583 286v27h1v-27z"/></svg>
<pre id="sb"><span style="color:#ffffff">Astrolog 5.40</span>
<span style="color:#c0c0c0">&quot;Laura&quot;</span>
<span style="color:#c0c0c0">Thu May 5, 1988</span>
<span style="color:#c0c0c0">12:00pm (ST +8:00 GMT)</span>
<span style="color:#c0c0c0">&quot;Taiwan&quot;</span>
<span style="color:#c0c0c0">120°29E 22°41N</span>
<span style="color:#c0c0c0">Placidus houses.</span>
<span style="color:#c0c0c0">Tropical, Geocentric.</span>
<span style="color:#c0c0c0">Julian Day = 2447286.6667</span>

<span style="color:#ff0000"> 1st house: 17Leo56</span>
<span style="color:#ffff00"> 2nd house: 14Vir13</span>
<span style="color:#00ff00"> 3rd house: 14Lib04</span>
<span style="color:#0000ff"> 4th house: 16Sco12</span>
<span style="color:#ff0000"> 5th house: 18Sag09</span>
<span style="color:#ffff00"> 6th house: 18Cap42</span>
<span style="color:#00ff00"> 7th house: 17Aqu56</span>
<span style="color:#0000ff"> 8th house: 14Pis13</span>
<span style="color:#ff0000"> 9th house: 14Ari04</span>
<span style="color:#ffff00">10th house: 16Tau12</span>
<span style="color:#00ff00">11th house: 18Gem09</span>
<span style="color:#0000ff">12th house: 18Can42</span>

<span style="color:#ff0000"> Sun: </span><span style="color:#ffff00">14Tau53</span><span style="color:#ffffff"> </span><span style="color:#c0c0c0"> - 0°00'</span>
<span style="color:#0000ff">Moon: </span><span style="color:#ff0000">24Sag19</span><span style="color:#ffffff"> </span><span style="color:#c0c0c0"> - 5°05'</span>
<span style="color:#00ff00">Merc: </span><span style="color:#00ff00"> 0Gem38</span><span style="color:#ffffff"> </span><span style="color:#c0c0c0"> + 1°53'</span>
<span style="color:#00ff00">Venu: </span><span style="color:#00ff00">25Gem16</span><span style="color:#ffffff"> </span><span style="color:#c0c0c0"> + 4°23'</span>
<span style="color:#ff0000">Mars: </span><span style="color:#00ff00">18Aqu51</span><span style="color:#ffffff"> </span><span style="color:#c0c0c0"> - 1°43'</span>
<span style="color:#ff0000">Jupi: </span><span style="color:#ffff00">13Tau12</span><span style="color:#ffffff"> </span><span style="color:#c0c0c0"> - 0°55'</span>
<span style="color:#ffff00">Satu: </span><span style="color:#ffff00"> 2Cap05</span><span style="color:#ffffff">R</span><span style="color:#c0c0c0"> + 1°10'</span>
<span style="color:#00ff00">Uran: </span><span style="color:#ffff00"> 0Cap40</span><span style="color:#ffffff">R</span><span style="color:#c0c0c0"> - 0°12'</span>
<span style="color:#0000ff">Nept: </span><span style="color:#ffff00">10Cap03</span><span style="color:#ffffff">R</span><span style="color:#c0c0c0"> + 0°59'</span>
<span style="color:#0000ff">Plut: </span><span style="color:#0000ff">11Sco06</span><span style="color:#ffffff">R</span><span style="color:#c0c0c0"> +16°37'</span>
<span style="color:#008080">Node: </span><span style="color:#0000ff">20Pis32</span><span style="color:#ffffff">R</span><span style="color:#c0c0c0"> + 0°00'</span>

<span style="color:#c0c0c0">Fire: 2, Earth: 6,</span>
<span style="color:#c0c0c0">Air : 3, Water: 2</span>
<span style="color:#c0c0c0">Car: 3, Fix: 6, Mut: 4</span>
<span style="color:#c0c0c0">Yang: 5, Yin: 8</span>
<span style="color:#c0c0c0">M: 6, N: 5, A: 3, D: 8</span>
<span style="color:#c0c0c0">Ang: 2, Suc: 6, Cad: 3</span>
<span style="color:#c0c0c0">Learn: 6, Share: 7</span></pre>
<div class="hn" style="left:92px;top:338px;color:#ff0000">1</div><div class="hn" style="left:138px;top:429px;color:#ffff00">2</div><div class="hn" style="left:232px;top:491px;color:#00ff00">3</div><div class="hn" style="left:347px;top:494px;color:#0000ff">4</div><div class="hn" style="left:445px;top:438px;color:#ff0000">5</div><div class="hn" style="left:499px;top:344px;color:#ffff00">6</div><div class="hn" style="left:500px;top:244px;color:#00ff00">7</div><div class="hn" style="left:454px;top:153px;color:#0000ff">8</div><div class="hn" style="left:360px;top:91px;color:#ff0000">9</div><div class="hn" style="left:241px;top:88px;color:#ffff00">10</div><div class="hn" style="left:143px;top:144px;color:#00ff00">11</div><div class="hn" style="left:89px;top:238px;color:#0000ff">12</div>
<div class="ob" style="left:282px;top:108px;font-size:24px;line-height:24px;color:#ffff00;transform:scaleX(0.5);will-change:transform;-webkit-text-stroke:0.35px #000">MC</div><div class="ob" style="left:111px;top:288px;font-size:24px;line-height:24px;color:#ff0000;transform:scaleX(0.425);will-change:transform">Asc</div>
</div></body></html>
